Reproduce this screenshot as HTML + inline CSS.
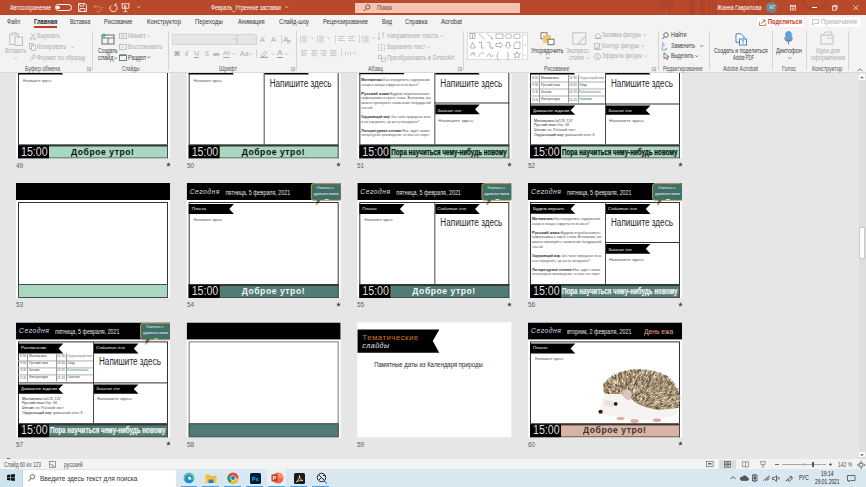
<!DOCTYPE html><html><head><meta charset="utf-8"><style>
*{margin:0;padding:0;box-sizing:border-box}
html,body{width:866px;height:487px;overflow:hidden;background:#e6e6e6;font-family:"Liberation Sans",sans-serif}
.t{position:absolute;white-space:nowrap}
.r{position:absolute}
svg{position:absolute;overflow:visible}
.s{position:absolute;width:154px;height:115px;background:#fff;overflow:hidden}
</style></head><body>
<div class="s" style="left:0;top:0;transform:translate(16px,43.5px)">
<div class="r" style="left:0px;top:0px;width:154px;height:17px;background:#000"></div>
<div class="t" style="left:3.40px;top:4.98px;font-size:7.2px;line-height:8.64px;color:#d4dbe0;font-weight:normal;font-style:italic;transform:scaleX(0.948);transform-origin:0 50%;letter-spacing:0.5px">Сегодня</div>
<div class="t" style="left:39.30px;top:4.64px;font-size:7.6px;line-height:9.12px;color:#e6e6e6;font-weight:normal;transform:scaleX(0.702);transform-origin:0 50%;">пятница,  5 февраля, 2021</div>
<svg style="left:123.5px;top:0px;" width="31" height="24" viewBox="0 0 31 24"><path d="M3 0.6h25.5a2.4 2.4 0 0 1 2.4 2.4v12a2.4 2.4 0 0 1-2.4 2.4h-18.5l-4.5 4.8l0.6-4.8h-3.1a2.4 2.4 0 0 1-2.4-2.4v-12a2.4 2.4 0 0 1 2.4-2.4z" fill="#3f6f67" stroke="#d6a75e" stroke-width="0.9"/></svg>
<div class="t" style="left:130.00px;top:3.88px;font-size:3.2px;line-height:3.84px;color:#f2f6f4;font-weight:normal;transform:scaleX(1.245);transform-origin:0 50%;">Учитесь с</div>
<div class="t" style="left:126.50px;top:9.58px;font-size:3.2px;line-height:3.84px;color:#f2f6f4;font-weight:normal;transform:scaleX(1.107);transform-origin:0 50%;">удовольствием</div>
<div class="r" style="left:138px;top:15.6px;width:4px;height:0.8px;background:#cfd8d4"></div>
<div class="r" style="left:2px;top:19px;width:150px;height:83px;border:1px solid #333"></div>
<svg style="left:2.3px;top:20.8px;" width="45.3" height="10.1" viewBox="0 0 45.3 10.1"><path d="M0 0H45.3L40.599999999999994 5.05L45.3 10.1H0z" fill="#000"/></svg>
<div class="t" style="left:4.50px;top:23.27px;font-size:4.3px;line-height:5.16px;color:#f6f6f6;font-weight:normal;transform:scaleX(1.063);transform-origin:0 50%;">Планы</div>
<div class="t" style="left:6.50px;top:35.18px;font-size:3.7px;line-height:4.44px;color:#555;font-weight:normal;transform:scaleX(1.011);transform-origin:0 50%;">Напишите здесь</div>
<div class="r" style="left:2px;top:100.5px;width:150px;height:14.5px;background:#a8d8bf;border:1px solid #4a4a4a;border-top:2px solid #383838"></div>
<div class="r" style="left:2px;top:102px;width:30.8px;height:13px;background:#000"></div>
<div class="t" style="left:4.60px;top:101.42px;font-size:12.3px;line-height:14.76px;color:#dedede;font-weight:normal;transform:scaleX(0.864);transform-origin:0 50%;">15:00</div>
<div class="t" style="left:54.60px;top:102.02px;font-size:9.8px;line-height:11.76px;color:#111;font-weight:bold;transform:scaleX(0.880);transform-origin:0 50%;letter-spacing:0.6px">Доброе утро!</div>
</div>
<div class="s" style="left:0;top:0;transform:translate(186.67px,43.5px)">
<div class="r" style="left:0px;top:0px;width:154px;height:17px;background:#000"></div>
<div class="t" style="left:3.40px;top:4.98px;font-size:7.2px;line-height:8.64px;color:#d4dbe0;font-weight:normal;font-style:italic;transform:scaleX(0.948);transform-origin:0 50%;letter-spacing:0.5px">Сегодня</div>
<div class="t" style="left:39.30px;top:4.64px;font-size:7.6px;line-height:9.12px;color:#e6e6e6;font-weight:normal;transform:scaleX(0.702);transform-origin:0 50%;">пятница,  5 февраля, 2021</div>
<svg style="left:123.5px;top:0px;" width="31" height="24" viewBox="0 0 31 24"><path d="M3 0.6h25.5a2.4 2.4 0 0 1 2.4 2.4v12a2.4 2.4 0 0 1-2.4 2.4h-18.5l-4.5 4.8l0.6-4.8h-3.1a2.4 2.4 0 0 1-2.4-2.4v-12a2.4 2.4 0 0 1 2.4-2.4z" fill="#3f6f67" stroke="#d6a75e" stroke-width="0.9"/></svg>
<div class="t" style="left:130.00px;top:3.88px;font-size:3.2px;line-height:3.84px;color:#f2f6f4;font-weight:normal;transform:scaleX(1.245);transform-origin:0 50%;">Учитесь с</div>
<div class="t" style="left:126.50px;top:9.58px;font-size:3.2px;line-height:3.84px;color:#f2f6f4;font-weight:normal;transform:scaleX(1.107);transform-origin:0 50%;">удовольствием</div>
<div class="r" style="left:138px;top:15.6px;width:4px;height:0.8px;background:#cfd8d4"></div>
<div class="r" style="left:2px;top:19px;width:150px;height:83px;border:1px solid #333"></div>
<div class="r" style="left:76.7px;top:19px;width:1.3px;height:82px;background:#4a4a4a"></div>
<svg style="left:2.3px;top:20.8px;" width="45.3" height="10.1" viewBox="0 0 45.3 10.1"><path d="M0 0H45.3L40.599999999999994 5.05L45.3 10.1H0z" fill="#000"/></svg>
<div class="t" style="left:4.50px;top:23.27px;font-size:4.3px;line-height:5.16px;color:#f6f6f6;font-weight:normal;transform:scaleX(1.063);transform-origin:0 50%;">Планы</div>
<div class="t" style="left:6.50px;top:35.18px;font-size:3.7px;line-height:4.44px;color:#555;font-weight:normal;transform:scaleX(1.011);transform-origin:0 50%;">Напишите здесь</div>
<svg style="left:77.5px;top:20.8px;" width="44.5" height="10.1" viewBox="0 0 44.5 10.1"><path d="M0 0H44.5L39.8 5.05L44.5 10.1H0z" fill="#000"/></svg>
<div class="t" style="left:79.70px;top:23.27px;font-size:4.3px;line-height:5.16px;color:#f6f6f6;font-weight:normal;font-style:italic;transform:scaleX(1.044);transform-origin:0 50%;">События дня</div>
<div class="t" style="left:83.40px;top:33.70px;font-size:10px;line-height:12.00px;color:#2a2a2a;font-weight:normal;transform:scaleX(0.813);transform-origin:0 50%;">Напишите здесь</div>
<div class="r" style="left:2px;top:100.5px;width:150px;height:14.5px;background:#a8d8bf;border:1px solid #4a4a4a;border-top:2px solid #383838"></div>
<div class="r" style="left:2px;top:102px;width:30.8px;height:13px;background:#000"></div>
<div class="t" style="left:4.60px;top:101.42px;font-size:12.3px;line-height:14.76px;color:#dedede;font-weight:normal;transform:scaleX(0.864);transform-origin:0 50%;">15:00</div>
<div class="t" style="left:54.60px;top:102.02px;font-size:9.8px;line-height:11.76px;color:#111;font-weight:bold;transform:scaleX(0.880);transform-origin:0 50%;letter-spacing:0.6px">Доброе утро!</div>
</div>
<div class="s" style="left:0;top:0;transform:translate(357.33px,43.5px)">
<div class="r" style="left:0px;top:0px;width:154px;height:17px;background:#000"></div>
<div class="t" style="left:3.40px;top:4.98px;font-size:7.2px;line-height:8.64px;color:#d4dbe0;font-weight:normal;font-style:italic;transform:scaleX(0.948);transform-origin:0 50%;letter-spacing:0.5px">Сегодня</div>
<div class="t" style="left:39.30px;top:4.64px;font-size:7.6px;line-height:9.12px;color:#e6e6e6;font-weight:normal;transform:scaleX(0.702);transform-origin:0 50%;">пятница,  5 февраля, 2021</div>
<svg style="left:123.5px;top:0px;" width="31" height="24" viewBox="0 0 31 24"><path d="M3 0.6h25.5a2.4 2.4 0 0 1 2.4 2.4v12a2.4 2.4 0 0 1-2.4 2.4h-18.5l-4.5 4.8l0.6-4.8h-3.1a2.4 2.4 0 0 1-2.4-2.4v-12a2.4 2.4 0 0 1 2.4-2.4z" fill="#3f6f67" stroke="#d6a75e" stroke-width="0.9"/></svg>
<div class="t" style="left:130.00px;top:3.88px;font-size:3.2px;line-height:3.84px;color:#f2f6f4;font-weight:normal;transform:scaleX(1.245);transform-origin:0 50%;">Учитесь с</div>
<div class="t" style="left:126.50px;top:9.58px;font-size:3.2px;line-height:3.84px;color:#f2f6f4;font-weight:normal;transform:scaleX(1.107);transform-origin:0 50%;">удовольствием</div>
<div class="r" style="left:138px;top:15.6px;width:4px;height:0.8px;background:#cfd8d4"></div>
<div class="r" style="left:2px;top:19px;width:150px;height:83px;border:1px solid #333"></div>
<div class="r" style="left:76.7px;top:19px;width:1.3px;height:82px;background:#4a4a4a"></div>
<svg style="left:2.3px;top:21px;" width="45.3" height="9.8" viewBox="0 0 45.3 9.8"><path d="M0 0H45.3L40.599999999999994 4.9L45.3 9.8H0z" fill="#000"/></svg>
<div class="t" style="left:4.50px;top:23.32px;font-size:4.3px;line-height:5.16px;color:#f6f6f6;font-weight:normal;transform:scaleX(1.086);transform-origin:0 50%;">Будем изучать</div>
<div class="t" style="left:4.00px;top:34.30px;font-size:3.5px;line-height:4.20px;color:#2a2a2a;font-weight:bold;transform:scaleX(1.008);transform-origin:0 50%;">Математика:</div>
<div class="t" style="left:25.91px;top:34.30px;font-size:3.5px;line-height:4.20px;color:#555;font-weight:normal;transform:scaleX(1.008);transform-origin:0 50%;"> Как определить содержание</div>
<div class="t" style="left:4.00px;top:38.70px;font-size:3.5px;line-height:4.20px;color:#555;font-weight:normal;transform:scaleX(0.861);transform-origin:0 50%;">сахара в овощах и фруктах по их массе?</div>
<div class="t" style="left:4.00px;top:48.20px;font-size:3.5px;line-height:4.20px;color:#2a2a2a;font-weight:bold;transform:scaleX(1.169);transform-origin:0 50%;">Русский язык:</div>
<div class="t" style="left:32.98px;top:48.20px;font-size:3.5px;line-height:4.20px;color:#555;font-weight:normal;transform:scaleX(1.169);transform-origin:0 50%;"> Будем отрабатывать</div>
<div class="t" style="left:4.00px;top:52.40px;font-size:3.5px;line-height:4.20px;color:#555;font-weight:normal;transform:scaleX(0.985);transform-origin:0 50%;">орфограммы в корне слова. Вспомним, как</div>
<div class="t" style="left:4.00px;top:57.30px;font-size:3.5px;line-height:4.20px;color:#555;font-weight:normal;transform:scaleX(1.045);transform-origin:0 50%;">можно проверить написание безударной</div>
<div class="t" style="left:4.00px;top:61.50px;font-size:3.5px;line-height:4.20px;color:#555;font-weight:normal;transform:scaleX(0.837);transform-origin:0 50%;">гласной.</div>
<div class="t" style="left:4.00px;top:71.30px;font-size:3.5px;line-height:4.20px;color:#2a2a2a;font-weight:bold;transform:scaleX(0.901);transform-origin:0 50%;">Окружающий мир: </div>
<div class="t" style="left:33.98px;top:71.30px;font-size:3.5px;line-height:4.20px;color:#555;font-weight:normal;transform:scaleX(0.901);transform-origin:0 50%;">Что такое природные зоны</div>
<div class="t" style="left:4.00px;top:75.50px;font-size:3.5px;line-height:4.20px;color:#555;font-weight:normal;transform:scaleX(0.851);transform-origin:0 50%;">и как определить, где растут мандарины?</div>
<div class="t" style="left:4.00px;top:84.60px;font-size:3.5px;line-height:4.20px;color:#2a2a2a;font-weight:bold;transform:scaleX(1.066);transform-origin:0 50%;">Литературное чтение:</div>
<div class="t" style="left:44.97px;top:84.60px;font-size:3.5px;line-height:4.20px;color:#555;font-weight:normal;transform:scaleX(1.066);transform-origin:0 50%;"> Нас ждёт новое</div>
<div class="t" style="left:4.00px;top:89.40px;font-size:3.5px;line-height:4.20px;color:#555;font-weight:normal;transform:scaleX(0.863);transform-origin:0 50%;">литературное произведение, но пока это секрет.</div>
<svg style="left:77.5px;top:20.8px;" width="44.5" height="10.1" viewBox="0 0 44.5 10.1"><path d="M0 0H44.5L39.8 5.05L44.5 10.1H0z" fill="#000"/></svg>
<div class="t" style="left:79.70px;top:23.27px;font-size:4.3px;line-height:5.16px;color:#f6f6f6;font-weight:normal;font-style:italic;transform:scaleX(1.044);transform-origin:0 50%;">События дня</div>
<div class="t" style="left:83.40px;top:33.70px;font-size:10px;line-height:12.00px;color:#2a2a2a;font-weight:normal;transform:scaleX(0.813);transform-origin:0 50%;">Напишите здесь</div>
<div class="r" style="left:77px;top:59.3px;width:75px;height:1.2px;background:#333"></div>
<svg style="left:77.5px;top:61.3px;" width="44.5" height="9.7" viewBox="0 0 44.5 9.7"><path d="M0 0H44.5L39.8 4.85L44.5 9.7H0z" fill="#000"/></svg>
<div class="t" style="left:79.70px;top:63.57px;font-size:4.3px;line-height:5.16px;color:#f6f6f6;font-weight:normal;font-style:italic;transform:scaleX(0.945);transform-origin:0 50%;">Задание дня</div>
<div class="t" style="left:80.80px;top:75.18px;font-size:3.7px;line-height:4.44px;color:#555;font-weight:normal;transform:scaleX(1.245);transform-origin:0 50%;">Напишите здесь</div>
<div class="r" style="left:2px;top:100.5px;width:150px;height:14.5px;background:#a8d8bf;border:1px solid #4a4a4a;border-top:2px solid #383838"></div>
<div class="r" style="left:2px;top:102px;width:30.8px;height:13px;background:#000"></div>
<div class="t" style="left:4.60px;top:101.42px;font-size:12.3px;line-height:14.76px;color:#dedede;font-weight:normal;transform:scaleX(0.864);transform-origin:0 50%;">15:00</div>
<div class="t" style="left:34.20px;top:102.92px;font-size:8.8px;line-height:10.56px;color:#111;font-weight:bold;transform:scaleX(0.708);transform-origin:0 50%;-webkit-text-stroke:0.25px #111">Пора научиться чему-нибудь новому</div>
</div>
<div class="s" style="left:0;top:0;transform:translate(528px,43.5px)">
<div class="r" style="left:0px;top:0px;width:154px;height:17px;background:#000"></div>
<div class="t" style="left:3.40px;top:4.98px;font-size:7.2px;line-height:8.64px;color:#d4dbe0;font-weight:normal;font-style:italic;transform:scaleX(0.948);transform-origin:0 50%;letter-spacing:0.5px">Сегодня</div>
<div class="t" style="left:39.30px;top:4.64px;font-size:7.6px;line-height:9.12px;color:#e6e6e6;font-weight:normal;transform:scaleX(0.702);transform-origin:0 50%;">пятница,  5 февраля, 2021</div>
<svg style="left:123.5px;top:0px;" width="31" height="24" viewBox="0 0 31 24"><path d="M3 0.6h25.5a2.4 2.4 0 0 1 2.4 2.4v12a2.4 2.4 0 0 1-2.4 2.4h-18.5l-4.5 4.8l0.6-4.8h-3.1a2.4 2.4 0 0 1-2.4-2.4v-12a2.4 2.4 0 0 1 2.4-2.4z" fill="#3f6f67" stroke="#d6a75e" stroke-width="0.9"/></svg>
<div class="t" style="left:130.00px;top:3.88px;font-size:3.2px;line-height:3.84px;color:#f2f6f4;font-weight:normal;transform:scaleX(1.245);transform-origin:0 50%;">Учитесь с</div>
<div class="t" style="left:126.50px;top:9.58px;font-size:3.2px;line-height:3.84px;color:#f2f6f4;font-weight:normal;transform:scaleX(1.107);transform-origin:0 50%;">удовольствием</div>
<div class="r" style="left:138px;top:15.6px;width:4px;height:0.8px;background:#cfd8d4"></div>
<div class="r" style="left:2px;top:19px;width:150px;height:83px;border:1px solid #333"></div>
<div class="r" style="left:76.7px;top:19px;width:1.3px;height:82px;background:#4a4a4a"></div>
<svg style="left:2.3px;top:21px;" width="45.3" height="10" viewBox="0 0 45.3 10"><path d="M0 0H45.3L40.599999999999994 5.0L45.3 10H0z" fill="#000"/></svg>
<div class="t" style="left:4.50px;top:23.42px;font-size:4.3px;line-height:5.16px;color:#f6f6f6;font-weight:normal;transform:scaleX(1.067);transform-origin:0 50%;">Расписание</div>
<div class="t" style="left:3.60px;top:32.98px;font-size:3.2px;line-height:3.84px;color:#555;font-weight:normal;transform:scaleX(0.996);transform-origin:0 50%;">8:30</div>
<div class="t" style="left:13.00px;top:32.92px;font-size:3.3px;line-height:3.96px;color:#333;font-weight:normal;transform:scaleX(0.950);transform-origin:0 50%;">Математика</div>
<div class="t" style="left:40.60px;top:32.98px;font-size:3.2px;line-height:3.84px;color:#555;font-weight:normal;transform:scaleX(0.999);transform-origin:0 50%;">12:30</div>
<div class="t" style="left:50.80px;top:32.92px;font-size:3.3px;line-height:3.96px;color:#777;font-weight:normal;transform:scaleX(0.916);transform-origin:0 50%;">Окружающий мир</div>
<div class="t" style="left:3.60px;top:40.08px;font-size:3.2px;line-height:3.84px;color:#555;font-weight:normal;transform:scaleX(0.996);transform-origin:0 50%;">9:30</div>
<div class="t" style="left:13.00px;top:40.02px;font-size:3.3px;line-height:3.96px;color:#333;font-weight:normal;transform:scaleX(0.950);transform-origin:0 50%;">Русский язык</div>
<div class="t" style="left:40.60px;top:40.08px;font-size:3.2px;line-height:3.84px;color:#555;font-weight:normal;transform:scaleX(0.999);transform-origin:0 50%;">13:45</div>
<div class="t" style="left:50.80px;top:40.02px;font-size:3.3px;line-height:3.96px;color:#333;font-weight:normal;transform:scaleX(0.950);transform-origin:0 50%;">Обед</div>
<div class="t" style="left:3.60px;top:47.33px;font-size:3.2px;line-height:3.84px;color:#555;font-weight:normal;transform:scaleX(0.774);transform-origin:0 50%;">10:30</div>
<div class="t" style="left:13.00px;top:47.27px;font-size:3.3px;line-height:3.96px;color:#333;font-weight:normal;transform:scaleX(0.950);transform-origin:0 50%;">Чтение</div>
<div class="t" style="left:40.60px;top:47.33px;font-size:3.2px;line-height:3.84px;color:#555;font-weight:normal;transform:scaleX(0.999);transform-origin:0 50%;">14:15</div>
<div class="t" style="left:50.80px;top:47.27px;font-size:3.3px;line-height:3.96px;color:#3d8a55;font-weight:normal;transform:scaleX(0.950);transform-origin:0 50%;">Робототехника</div>
<div class="t" style="left:3.60px;top:54.53px;font-size:3.2px;line-height:3.84px;color:#555;font-weight:normal;transform:scaleX(0.798);transform-origin:0 50%;">11:30</div>
<div class="t" style="left:13.00px;top:54.47px;font-size:3.3px;line-height:3.96px;color:#333;font-weight:normal;transform:scaleX(0.950);transform-origin:0 50%;">Физ.культура</div>
<div class="t" style="left:40.60px;top:54.53px;font-size:3.2px;line-height:3.84px;color:#555;font-weight:normal;transform:scaleX(0.999);transform-origin:0 50%;">15:15</div>
<div class="t" style="left:50.80px;top:54.47px;font-size:3.3px;line-height:3.96px;color:#2f6e4f;font-weight:normal;transform:scaleX(0.950);transform-origin:0 50%;">Оригами</div>
<div class="r" style="left:2px;top:37.8px;width:74.7px;height:0.6px;background:#b0b0b0"></div>
<div class="r" style="left:2px;top:45.0px;width:74.7px;height:0.6px;background:#b0b0b0"></div>
<div class="r" style="left:2px;top:52.3px;width:74.7px;height:0.6px;background:#b0b0b0"></div>
<div class="r" style="left:11.3px;top:30.8px;width:0.6px;height:28.6px;background:#9a9a9a"></div>
<div class="r" style="left:39.7px;top:30.8px;width:0.6px;height:28.6px;background:#9a9a9a"></div>
<div class="r" style="left:49.5px;top:30.8px;width:0.6px;height:28.6px;background:#9a9a9a"></div>
<div class="r" style="left:2px;top:59.5px;width:150px;height:1.2px;background:#333"></div>
<svg style="left:2.3px;top:62.3px;" width="45.3" height="9.3" viewBox="0 0 45.3 9.3"><path d="M0 0H45.3L40.599999999999994 4.65L45.3 9.3H0z" fill="#000"/></svg>
<div class="t" style="left:4.50px;top:64.37px;font-size:4.3px;line-height:5.16px;color:#f6f6f6;font-weight:normal;transform:scaleX(0.940);transform-origin:0 50%;">Домашнее задание</div>
<div class="t" style="left:6.00px;top:74.84px;font-size:3.6px;line-height:4.32px;color:#222;font-weight:normal;transform:scaleX(0.981);transform-origin:0 50%;">Математика:</div>
<div class="t" style="left:26.88px;top:74.84px;font-size:3.6px;line-height:4.32px;color:#555;font-weight:normal;transform:scaleX(0.981);transform-origin:0 50%;"> №128, 132</div>
<div class="t" style="left:6.00px;top:79.49px;font-size:3.6px;line-height:4.32px;color:#222;font-weight:normal;transform:scaleX(0.986);transform-origin:0 50%;">Русский язык:</div>
<div class="t" style="left:28.80px;top:79.49px;font-size:3.6px;line-height:4.32px;color:#555;font-weight:normal;transform:scaleX(0.986);transform-origin:0 50%;"> Упр. 68</div>
<div class="t" style="left:6.00px;top:84.14px;font-size:3.6px;line-height:4.32px;color:#222;font-weight:normal;transform:scaleX(0.988);transform-origin:0 50%;">Чтение:</div>
<div class="t" style="left:18.86px;top:84.14px;font-size:3.6px;line-height:4.32px;color:#555;font-weight:normal;transform:scaleX(0.988);transform-origin:0 50%;"> см. Рабочий лист</div>
<div class="t" style="left:6.00px;top:88.79px;font-size:3.6px;line-height:4.32px;color:#222;font-weight:normal;transform:scaleX(0.993);transform-origin:0 50%;">Окружающий мир:</div>
<div class="t" style="left:36.55px;top:88.79px;font-size:3.6px;line-height:4.32px;color:#555;font-weight:normal;transform:scaleX(0.993);transform-origin:0 50%;"> домашний опыт 8</div>
<svg style="left:77.5px;top:20.8px;" width="44.5" height="10.1" viewBox="0 0 44.5 10.1"><path d="M0 0H44.5L39.8 5.05L44.5 10.1H0z" fill="#000"/></svg>
<div class="t" style="left:79.70px;top:23.27px;font-size:4.3px;line-height:5.16px;color:#f6f6f6;font-weight:normal;font-style:italic;transform:scaleX(1.044);transform-origin:0 50%;">События дня</div>
<div class="t" style="left:83.40px;top:33.70px;font-size:10px;line-height:12.00px;color:#2a2a2a;font-weight:normal;transform:scaleX(0.813);transform-origin:0 50%;">Напишите здесь</div>
<svg style="left:77.5px;top:62.3px;" width="44.5" height="9.3" viewBox="0 0 44.5 9.3"><path d="M0 0H44.5L39.8 4.65L44.5 9.3H0z" fill="#000"/></svg>
<div class="t" style="left:79.70px;top:64.37px;font-size:4.3px;line-height:5.16px;color:#f6f6f6;font-weight:normal;font-style:italic;transform:scaleX(0.945);transform-origin:0 50%;">Задание дня</div>
<div class="t" style="left:80.80px;top:75.18px;font-size:3.7px;line-height:4.44px;color:#555;font-weight:normal;transform:scaleX(1.245);transform-origin:0 50%;">Напишите здесь</div>
<div class="r" style="left:2px;top:100.5px;width:150px;height:14.5px;background:#a8d8bf;border:1px solid #4a4a4a;border-top:2px solid #383838"></div>
<div class="r" style="left:2px;top:102px;width:30.8px;height:13px;background:#000"></div>
<div class="t" style="left:4.60px;top:101.42px;font-size:12.3px;line-height:14.76px;color:#dedede;font-weight:normal;transform:scaleX(0.864);transform-origin:0 50%;">15:00</div>
<div class="t" style="left:34.20px;top:102.92px;font-size:8.8px;line-height:10.56px;color:#111;font-weight:bold;transform:scaleX(0.708);transform-origin:0 50%;-webkit-text-stroke:0.25px #111">Пора научиться чему-нибудь новому</div>
</div>
<div class="s" style="left:0;top:0;transform:translate(16px,183px)">
<div class="r" style="left:0px;top:0px;width:154px;height:17px;background:#000"></div>
<div class="r" style="left:2px;top:19px;width:150px;height:83px;border:1px solid #333"></div>
<div class="r" style="left:2px;top:101px;width:150px;height:14px;background:#a8d8bf;border:1px solid #4a4a4a"></div>
</div>
<div class="s" style="left:0;top:0;transform:translate(186.67px,183px)">
<div class="r" style="left:0px;top:0px;width:154px;height:17px;background:#000"></div>
<div class="t" style="left:3.40px;top:4.98px;font-size:7.2px;line-height:8.64px;color:#d4dbe0;font-weight:normal;font-style:italic;transform:scaleX(0.948);transform-origin:0 50%;letter-spacing:0.5px">Сегодня</div>
<div class="t" style="left:39.30px;top:4.64px;font-size:7.6px;line-height:9.12px;color:#e6e6e6;font-weight:normal;transform:scaleX(0.702);transform-origin:0 50%;">пятница,  5 февраля, 2021</div>
<svg style="left:123.5px;top:0px;" width="31" height="24" viewBox="0 0 31 24"><path d="M3 0.6h25.5a2.4 2.4 0 0 1 2.4 2.4v12a2.4 2.4 0 0 1-2.4 2.4h-18.5l-4.5 4.8l0.6-4.8h-3.1a2.4 2.4 0 0 1-2.4-2.4v-12a2.4 2.4 0 0 1 2.4-2.4z" fill="#3f6f67" stroke="#d6a75e" stroke-width="0.9"/></svg>
<div class="t" style="left:130.00px;top:3.88px;font-size:3.2px;line-height:3.84px;color:#f2f6f4;font-weight:normal;transform:scaleX(1.245);transform-origin:0 50%;">Учитесь с</div>
<div class="t" style="left:126.50px;top:9.58px;font-size:3.2px;line-height:3.84px;color:#f2f6f4;font-weight:normal;transform:scaleX(1.107);transform-origin:0 50%;">удовольствием</div>
<div class="r" style="left:138px;top:15.6px;width:4px;height:0.8px;background:#cfd8d4"></div>
<div class="r" style="left:2px;top:19px;width:150px;height:83px;border:1px solid #333"></div>
<svg style="left:2.3px;top:20.8px;" width="45.3" height="10.1" viewBox="0 0 45.3 10.1"><path d="M0 0H45.3L40.599999999999994 5.05L45.3 10.1H0z" fill="#000"/></svg>
<div class="t" style="left:4.50px;top:23.27px;font-size:4.3px;line-height:5.16px;color:#f6f6f6;font-weight:normal;transform:scaleX(1.063);transform-origin:0 50%;">Планы</div>
<div class="t" style="left:6.50px;top:35.18px;font-size:3.7px;line-height:4.44px;color:#555;font-weight:normal;transform:scaleX(1.011);transform-origin:0 50%;">Напишите здесь</div>
<div class="r" style="left:2px;top:100.5px;width:150px;height:14.5px;background:#4f7d76;border:1px solid #4a4a4a;border-top:2px solid #383838"></div>
<div class="r" style="left:2px;top:102px;width:30.8px;height:13px;background:#000"></div>
<div class="t" style="left:4.60px;top:101.42px;font-size:12.3px;line-height:14.76px;color:#dedede;font-weight:normal;transform:scaleX(0.864);transform-origin:0 50%;">15:00</div>
<div class="t" style="left:54.60px;top:102.02px;font-size:9.8px;line-height:11.76px;color:#f4f4f4;font-weight:bold;transform:scaleX(0.880);transform-origin:0 50%;letter-spacing:0.6px">Доброе утро!</div>
</div>
<div class="s" style="left:0;top:0;transform:translate(357.33px,183px)">
<div class="r" style="left:0px;top:0px;width:154px;height:17px;background:#000"></div>
<div class="t" style="left:3.40px;top:4.98px;font-size:7.2px;line-height:8.64px;color:#d4dbe0;font-weight:normal;font-style:italic;transform:scaleX(0.948);transform-origin:0 50%;letter-spacing:0.5px">Сегодня</div>
<div class="t" style="left:39.30px;top:4.64px;font-size:7.6px;line-height:9.12px;color:#e6e6e6;font-weight:normal;transform:scaleX(0.702);transform-origin:0 50%;">пятница,  5 февраля, 2021</div>
<svg style="left:123.5px;top:0px;" width="31" height="24" viewBox="0 0 31 24"><path d="M3 0.6h25.5a2.4 2.4 0 0 1 2.4 2.4v12a2.4 2.4 0 0 1-2.4 2.4h-18.5l-4.5 4.8l0.6-4.8h-3.1a2.4 2.4 0 0 1-2.4-2.4v-12a2.4 2.4 0 0 1 2.4-2.4z" fill="#3f6f67" stroke="#d6a75e" stroke-width="0.9"/></svg>
<div class="t" style="left:130.00px;top:3.88px;font-size:3.2px;line-height:3.84px;color:#f2f6f4;font-weight:normal;transform:scaleX(1.245);transform-origin:0 50%;">Учитесь с</div>
<div class="t" style="left:126.50px;top:9.58px;font-size:3.2px;line-height:3.84px;color:#f2f6f4;font-weight:normal;transform:scaleX(1.107);transform-origin:0 50%;">удовольствием</div>
<div class="r" style="left:138px;top:15.6px;width:4px;height:0.8px;background:#cfd8d4"></div>
<div class="r" style="left:2px;top:19px;width:150px;height:83px;border:1px solid #333"></div>
<div class="r" style="left:76.7px;top:19px;width:1.3px;height:82px;background:#4a4a4a"></div>
<svg style="left:2.3px;top:20.8px;" width="45.3" height="10.1" viewBox="0 0 45.3 10.1"><path d="M0 0H45.3L40.599999999999994 5.05L45.3 10.1H0z" fill="#000"/></svg>
<div class="t" style="left:4.50px;top:23.27px;font-size:4.3px;line-height:5.16px;color:#f6f6f6;font-weight:normal;transform:scaleX(1.063);transform-origin:0 50%;">Планы</div>
<div class="t" style="left:6.50px;top:35.18px;font-size:3.7px;line-height:4.44px;color:#555;font-weight:normal;transform:scaleX(1.011);transform-origin:0 50%;">Напишите здесь</div>
<svg style="left:77.5px;top:20.8px;" width="44.5" height="10.1" viewBox="0 0 44.5 10.1"><path d="M0 0H44.5L39.8 5.05L44.5 10.1H0z" fill="#000"/></svg>
<div class="t" style="left:79.70px;top:23.27px;font-size:4.3px;line-height:5.16px;color:#f6f6f6;font-weight:normal;font-style:italic;transform:scaleX(1.044);transform-origin:0 50%;">События дня</div>
<div class="t" style="left:83.40px;top:33.70px;font-size:10px;line-height:12.00px;color:#2a2a2a;font-weight:normal;transform:scaleX(0.813);transform-origin:0 50%;">Напишите здесь</div>
<div class="r" style="left:2px;top:100.5px;width:150px;height:14.5px;background:#4f7d76;border:1px solid #4a4a4a;border-top:2px solid #383838"></div>
<div class="r" style="left:2px;top:102px;width:30.8px;height:13px;background:#000"></div>
<div class="t" style="left:4.60px;top:101.42px;font-size:12.3px;line-height:14.76px;color:#dedede;font-weight:normal;transform:scaleX(0.864);transform-origin:0 50%;">15:00</div>
<div class="t" style="left:54.60px;top:102.02px;font-size:9.8px;line-height:11.76px;color:#f4f4f4;font-weight:bold;transform:scaleX(0.880);transform-origin:0 50%;letter-spacing:0.6px">Доброе утро!</div>
</div>
<div class="s" style="left:0;top:0;transform:translate(528px,183px)">
<div class="r" style="left:0px;top:0px;width:154px;height:17px;background:#000"></div>
<div class="t" style="left:3.40px;top:4.98px;font-size:7.2px;line-height:8.64px;color:#d4dbe0;font-weight:normal;font-style:italic;transform:scaleX(0.948);transform-origin:0 50%;letter-spacing:0.5px">Сегодня</div>
<div class="t" style="left:39.30px;top:4.64px;font-size:7.6px;line-height:9.12px;color:#e6e6e6;font-weight:normal;transform:scaleX(0.702);transform-origin:0 50%;">пятница,  5 февраля, 2021</div>
<svg style="left:123.5px;top:0px;" width="31" height="24" viewBox="0 0 31 24"><path d="M3 0.6h25.5a2.4 2.4 0 0 1 2.4 2.4v12a2.4 2.4 0 0 1-2.4 2.4h-18.5l-4.5 4.8l0.6-4.8h-3.1a2.4 2.4 0 0 1-2.4-2.4v-12a2.4 2.4 0 0 1 2.4-2.4z" fill="#3f6f67" stroke="#d6a75e" stroke-width="0.9"/></svg>
<div class="t" style="left:130.00px;top:3.88px;font-size:3.2px;line-height:3.84px;color:#f2f6f4;font-weight:normal;transform:scaleX(1.245);transform-origin:0 50%;">Учитесь с</div>
<div class="t" style="left:126.50px;top:9.58px;font-size:3.2px;line-height:3.84px;color:#f2f6f4;font-weight:normal;transform:scaleX(1.107);transform-origin:0 50%;">удовольствием</div>
<div class="r" style="left:138px;top:15.6px;width:4px;height:0.8px;background:#cfd8d4"></div>
<div class="r" style="left:2px;top:19px;width:150px;height:83px;border:1px solid #333"></div>
<div class="r" style="left:76.7px;top:19px;width:1.3px;height:82px;background:#4a4a4a"></div>
<svg style="left:2.3px;top:21px;" width="45.3" height="9.8" viewBox="0 0 45.3 9.8"><path d="M0 0H45.3L40.599999999999994 4.9L45.3 9.8H0z" fill="#000"/></svg>
<div class="t" style="left:4.50px;top:23.32px;font-size:4.3px;line-height:5.16px;color:#f6f6f6;font-weight:normal;transform:scaleX(1.086);transform-origin:0 50%;">Будем изучать</div>
<div class="t" style="left:4.00px;top:34.30px;font-size:3.5px;line-height:4.20px;color:#2a2a2a;font-weight:bold;transform:scaleX(1.008);transform-origin:0 50%;">Математика:</div>
<div class="t" style="left:25.91px;top:34.30px;font-size:3.5px;line-height:4.20px;color:#555;font-weight:normal;transform:scaleX(1.008);transform-origin:0 50%;"> Как определить содержание</div>
<div class="t" style="left:4.00px;top:38.70px;font-size:3.5px;line-height:4.20px;color:#555;font-weight:normal;transform:scaleX(0.861);transform-origin:0 50%;">сахара в овощах и фруктах по их массе?</div>
<div class="t" style="left:4.00px;top:48.20px;font-size:3.5px;line-height:4.20px;color:#2a2a2a;font-weight:bold;transform:scaleX(1.169);transform-origin:0 50%;">Русский язык:</div>
<div class="t" style="left:32.98px;top:48.20px;font-size:3.5px;line-height:4.20px;color:#555;font-weight:normal;transform:scaleX(1.169);transform-origin:0 50%;"> Будем отрабатывать</div>
<div class="t" style="left:4.00px;top:52.40px;font-size:3.5px;line-height:4.20px;color:#555;font-weight:normal;transform:scaleX(0.985);transform-origin:0 50%;">орфограммы в корне слова. Вспомним, как</div>
<div class="t" style="left:4.00px;top:57.30px;font-size:3.5px;line-height:4.20px;color:#555;font-weight:normal;transform:scaleX(1.045);transform-origin:0 50%;">можно проверить написание безударной</div>
<div class="t" style="left:4.00px;top:61.50px;font-size:3.5px;line-height:4.20px;color:#555;font-weight:normal;transform:scaleX(0.837);transform-origin:0 50%;">гласной.</div>
<div class="t" style="left:4.00px;top:71.30px;font-size:3.5px;line-height:4.20px;color:#2a2a2a;font-weight:bold;transform:scaleX(0.901);transform-origin:0 50%;">Окружающий мир: </div>
<div class="t" style="left:33.98px;top:71.30px;font-size:3.5px;line-height:4.20px;color:#555;font-weight:normal;transform:scaleX(0.901);transform-origin:0 50%;">Что такое природные зоны</div>
<div class="t" style="left:4.00px;top:75.50px;font-size:3.5px;line-height:4.20px;color:#555;font-weight:normal;transform:scaleX(0.851);transform-origin:0 50%;">и как определить, где растут мандарины?</div>
<div class="t" style="left:4.00px;top:84.60px;font-size:3.5px;line-height:4.20px;color:#2a2a2a;font-weight:bold;transform:scaleX(1.066);transform-origin:0 50%;">Литературное чтение:</div>
<div class="t" style="left:44.97px;top:84.60px;font-size:3.5px;line-height:4.20px;color:#555;font-weight:normal;transform:scaleX(1.066);transform-origin:0 50%;"> Нас ждёт новое</div>
<div class="t" style="left:4.00px;top:89.40px;font-size:3.5px;line-height:4.20px;color:#555;font-weight:normal;transform:scaleX(0.863);transform-origin:0 50%;">литературное произведение, но пока это секрет.</div>
<svg style="left:77.5px;top:20.8px;" width="44.5" height="10.1" viewBox="0 0 44.5 10.1"><path d="M0 0H44.5L39.8 5.05L44.5 10.1H0z" fill="#000"/></svg>
<div class="t" style="left:79.70px;top:23.27px;font-size:4.3px;line-height:5.16px;color:#f6f6f6;font-weight:normal;font-style:italic;transform:scaleX(1.044);transform-origin:0 50%;">События дня</div>
<div class="t" style="left:83.40px;top:33.70px;font-size:10px;line-height:12.00px;color:#2a2a2a;font-weight:normal;transform:scaleX(0.813);transform-origin:0 50%;">Напишите здесь</div>
<div class="r" style="left:77px;top:59.3px;width:75px;height:1.2px;background:#333"></div>
<svg style="left:77.5px;top:61.3px;" width="44.5" height="9.7" viewBox="0 0 44.5 9.7"><path d="M0 0H44.5L39.8 4.85L44.5 9.7H0z" fill="#000"/></svg>
<div class="t" style="left:79.70px;top:63.57px;font-size:4.3px;line-height:5.16px;color:#f6f6f6;font-weight:normal;font-style:italic;transform:scaleX(0.945);transform-origin:0 50%;">Задание дня</div>
<div class="t" style="left:80.80px;top:75.18px;font-size:3.7px;line-height:4.44px;color:#555;font-weight:normal;transform:scaleX(1.245);transform-origin:0 50%;">Напишите здесь</div>
<div class="r" style="left:2px;top:100.5px;width:150px;height:14.5px;background:#4f7d76;border:1px solid #4a4a4a;border-top:2px solid #383838"></div>
<div class="r" style="left:2px;top:102px;width:30.8px;height:13px;background:#000"></div>
<div class="t" style="left:4.60px;top:101.42px;font-size:12.3px;line-height:14.76px;color:#dedede;font-weight:normal;transform:scaleX(0.864);transform-origin:0 50%;">15:00</div>
<div class="t" style="left:34.20px;top:102.92px;font-size:8.8px;line-height:10.56px;color:#f4f4f4;font-weight:bold;transform:scaleX(0.708);transform-origin:0 50%;-webkit-text-stroke:0.25px #f4f4f4">Пора научиться чему-нибудь новому</div>
</div>
<div class="s" style="left:0;top:0;transform:translate(16px,322.4px)">
<div class="r" style="left:0px;top:0px;width:154px;height:17px;background:#000"></div>
<div class="t" style="left:3.40px;top:4.98px;font-size:7.2px;line-height:8.64px;color:#d4dbe0;font-weight:normal;font-style:italic;transform:scaleX(0.948);transform-origin:0 50%;letter-spacing:0.5px">Сегодня</div>
<div class="t" style="left:39.30px;top:4.64px;font-size:7.6px;line-height:9.12px;color:#e6e6e6;font-weight:normal;transform:scaleX(0.702);transform-origin:0 50%;">пятница,  5 февраля, 2021</div>
<svg style="left:123.5px;top:0px;" width="31" height="24" viewBox="0 0 31 24"><path d="M3 0.6h25.5a2.4 2.4 0 0 1 2.4 2.4v12a2.4 2.4 0 0 1-2.4 2.4h-18.5l-4.5 4.8l0.6-4.8h-3.1a2.4 2.4 0 0 1-2.4-2.4v-12a2.4 2.4 0 0 1 2.4-2.4z" fill="#3f6f67" stroke="#d6a75e" stroke-width="0.9"/></svg>
<div class="t" style="left:130.00px;top:3.88px;font-size:3.2px;line-height:3.84px;color:#f2f6f4;font-weight:normal;transform:scaleX(1.245);transform-origin:0 50%;">Учитесь с</div>
<div class="t" style="left:126.50px;top:9.58px;font-size:3.2px;line-height:3.84px;color:#f2f6f4;font-weight:normal;transform:scaleX(1.107);transform-origin:0 50%;">удовольствием</div>
<div class="r" style="left:138px;top:15.6px;width:4px;height:0.8px;background:#cfd8d4"></div>
<div class="r" style="left:2px;top:19px;width:150px;height:83px;border:1px solid #333"></div>
<div class="r" style="left:76.7px;top:19px;width:1.3px;height:82px;background:#4a4a4a"></div>
<svg style="left:2.3px;top:21px;" width="45.3" height="10" viewBox="0 0 45.3 10"><path d="M0 0H45.3L40.599999999999994 5.0L45.3 10H0z" fill="#000"/></svg>
<div class="t" style="left:4.50px;top:23.42px;font-size:4.3px;line-height:5.16px;color:#f6f6f6;font-weight:normal;transform:scaleX(1.067);transform-origin:0 50%;">Расписание</div>
<div class="t" style="left:3.60px;top:32.98px;font-size:3.2px;line-height:3.84px;color:#555;font-weight:normal;transform:scaleX(0.996);transform-origin:0 50%;">8:30</div>
<div class="t" style="left:13.00px;top:32.92px;font-size:3.3px;line-height:3.96px;color:#333;font-weight:normal;transform:scaleX(0.950);transform-origin:0 50%;">Математика</div>
<div class="t" style="left:40.60px;top:32.98px;font-size:3.2px;line-height:3.84px;color:#555;font-weight:normal;transform:scaleX(0.999);transform-origin:0 50%;">12:30</div>
<div class="t" style="left:50.80px;top:32.92px;font-size:3.3px;line-height:3.96px;color:#777;font-weight:normal;transform:scaleX(0.916);transform-origin:0 50%;">Окружающий мир</div>
<div class="t" style="left:3.60px;top:40.08px;font-size:3.2px;line-height:3.84px;color:#555;font-weight:normal;transform:scaleX(0.996);transform-origin:0 50%;">9:30</div>
<div class="t" style="left:13.00px;top:40.02px;font-size:3.3px;line-height:3.96px;color:#333;font-weight:normal;transform:scaleX(0.950);transform-origin:0 50%;">Русский язык</div>
<div class="t" style="left:40.60px;top:40.08px;font-size:3.2px;line-height:3.84px;color:#555;font-weight:normal;transform:scaleX(0.999);transform-origin:0 50%;">13:45</div>
<div class="t" style="left:50.80px;top:40.02px;font-size:3.3px;line-height:3.96px;color:#333;font-weight:normal;transform:scaleX(0.950);transform-origin:0 50%;">Обед</div>
<div class="t" style="left:3.60px;top:47.33px;font-size:3.2px;line-height:3.84px;color:#555;font-weight:normal;transform:scaleX(0.774);transform-origin:0 50%;">10:30</div>
<div class="t" style="left:13.00px;top:47.27px;font-size:3.3px;line-height:3.96px;color:#333;font-weight:normal;transform:scaleX(0.950);transform-origin:0 50%;">Чтение</div>
<div class="t" style="left:40.60px;top:47.33px;font-size:3.2px;line-height:3.84px;color:#555;font-weight:normal;transform:scaleX(0.999);transform-origin:0 50%;">14:15</div>
<div class="t" style="left:50.80px;top:47.27px;font-size:3.3px;line-height:3.96px;color:#3d8a55;font-weight:normal;transform:scaleX(0.950);transform-origin:0 50%;">Робототехника</div>
<div class="t" style="left:3.60px;top:54.53px;font-size:3.2px;line-height:3.84px;color:#555;font-weight:normal;transform:scaleX(0.798);transform-origin:0 50%;">11:30</div>
<div class="t" style="left:13.00px;top:54.47px;font-size:3.3px;line-height:3.96px;color:#333;font-weight:normal;transform:scaleX(0.950);transform-origin:0 50%;">Физ.культура</div>
<div class="t" style="left:40.60px;top:54.53px;font-size:3.2px;line-height:3.84px;color:#555;font-weight:normal;transform:scaleX(0.999);transform-origin:0 50%;">15:15</div>
<div class="t" style="left:50.80px;top:54.47px;font-size:3.3px;line-height:3.96px;color:#2f6e4f;font-weight:normal;transform:scaleX(0.950);transform-origin:0 50%;">Оригами</div>
<div class="r" style="left:2px;top:37.8px;width:74.7px;height:0.6px;background:#b0b0b0"></div>
<div class="r" style="left:2px;top:45.0px;width:74.7px;height:0.6px;background:#b0b0b0"></div>
<div class="r" style="left:2px;top:52.3px;width:74.7px;height:0.6px;background:#b0b0b0"></div>
<div class="r" style="left:11.3px;top:30.8px;width:0.6px;height:28.6px;background:#9a9a9a"></div>
<div class="r" style="left:39.7px;top:30.8px;width:0.6px;height:28.6px;background:#9a9a9a"></div>
<div class="r" style="left:49.5px;top:30.8px;width:0.6px;height:28.6px;background:#9a9a9a"></div>
<div class="r" style="left:2px;top:59.5px;width:150px;height:1.2px;background:#333"></div>
<svg style="left:2.3px;top:62.3px;" width="45.3" height="9.3" viewBox="0 0 45.3 9.3"><path d="M0 0H45.3L40.599999999999994 4.65L45.3 9.3H0z" fill="#000"/></svg>
<div class="t" style="left:4.50px;top:64.37px;font-size:4.3px;line-height:5.16px;color:#f6f6f6;font-weight:normal;transform:scaleX(0.940);transform-origin:0 50%;">Домашнее задание</div>
<div class="t" style="left:6.00px;top:74.84px;font-size:3.6px;line-height:4.32px;color:#222;font-weight:normal;transform:scaleX(0.981);transform-origin:0 50%;">Математика:</div>
<div class="t" style="left:26.88px;top:74.84px;font-size:3.6px;line-height:4.32px;color:#555;font-weight:normal;transform:scaleX(0.981);transform-origin:0 50%;"> №128, 132</div>
<div class="t" style="left:6.00px;top:79.49px;font-size:3.6px;line-height:4.32px;color:#222;font-weight:normal;transform:scaleX(0.986);transform-origin:0 50%;">Русский язык:</div>
<div class="t" style="left:28.80px;top:79.49px;font-size:3.6px;line-height:4.32px;color:#555;font-weight:normal;transform:scaleX(0.986);transform-origin:0 50%;"> Упр. 68</div>
<div class="t" style="left:6.00px;top:84.14px;font-size:3.6px;line-height:4.32px;color:#222;font-weight:normal;transform:scaleX(0.988);transform-origin:0 50%;">Чтение:</div>
<div class="t" style="left:18.86px;top:84.14px;font-size:3.6px;line-height:4.32px;color:#555;font-weight:normal;transform:scaleX(0.988);transform-origin:0 50%;"> см. Рабочий лист</div>
<div class="t" style="left:6.00px;top:88.79px;font-size:3.6px;line-height:4.32px;color:#222;font-weight:normal;transform:scaleX(0.993);transform-origin:0 50%;">Окружающий мир:</div>
<div class="t" style="left:36.55px;top:88.79px;font-size:3.6px;line-height:4.32px;color:#555;font-weight:normal;transform:scaleX(0.993);transform-origin:0 50%;"> домашний опыт 8</div>
<svg style="left:77.5px;top:20.8px;" width="44.5" height="10.1" viewBox="0 0 44.5 10.1"><path d="M0 0H44.5L39.8 5.05L44.5 10.1H0z" fill="#000"/></svg>
<div class="t" style="left:79.70px;top:23.27px;font-size:4.3px;line-height:5.16px;color:#f6f6f6;font-weight:normal;font-style:italic;transform:scaleX(1.044);transform-origin:0 50%;">События дня</div>
<div class="t" style="left:83.40px;top:33.70px;font-size:10px;line-height:12.00px;color:#2a2a2a;font-weight:normal;transform:scaleX(0.813);transform-origin:0 50%;">Напишите здесь</div>
<svg style="left:77.5px;top:62.3px;" width="44.5" height="9.3" viewBox="0 0 44.5 9.3"><path d="M0 0H44.5L39.8 4.65L44.5 9.3H0z" fill="#000"/></svg>
<div class="t" style="left:79.70px;top:64.37px;font-size:4.3px;line-height:5.16px;color:#f6f6f6;font-weight:normal;font-style:italic;transform:scaleX(0.945);transform-origin:0 50%;">Задание дня</div>
<div class="t" style="left:80.80px;top:75.18px;font-size:3.7px;line-height:4.44px;color:#555;font-weight:normal;transform:scaleX(1.245);transform-origin:0 50%;">Напишите здесь</div>
<div class="r" style="left:2px;top:100.5px;width:150px;height:14.5px;background:#4f7d76;border:1px solid #4a4a4a;border-top:2px solid #383838"></div>
<div class="r" style="left:2px;top:102px;width:30.8px;height:13px;background:#000"></div>
<div class="t" style="left:4.60px;top:101.42px;font-size:12.3px;line-height:14.76px;color:#dedede;font-weight:normal;transform:scaleX(0.864);transform-origin:0 50%;">15:00</div>
<div class="t" style="left:34.20px;top:102.92px;font-size:8.8px;line-height:10.56px;color:#f4f4f4;font-weight:bold;transform:scaleX(0.708);transform-origin:0 50%;-webkit-text-stroke:0.25px #f4f4f4">Пора научиться чему-нибудь новому</div>
</div>
<div class="s" style="left:0;top:0;transform:translate(186.67px,322.4px)">
<div class="r" style="left:0px;top:0px;width:154px;height:17px;background:#000"></div>
<div class="r" style="left:2px;top:19px;width:150px;height:83px;border:1px solid #777"></div>
<div class="r" style="left:2px;top:101px;width:150px;height:14px;background:#4f7d76;border:1px solid #4a4a4a"></div>
</div>
<div class="s" style="left:0;top:0;transform:translate(357.33px,322.4px)">
<svg style="left:0px;top:7.3px;" width="82" height="23.3" viewBox="0 0 82 23.3"><path d="M0 0H82L75.4 11.65L82 23.3H0z" fill="#000"/></svg>
<div class="t" style="left:4.70px;top:11.04px;font-size:7.6px;line-height:9.12px;color:#d8791c;font-weight:normal;transform:scaleX(1.019);transform-origin:0 50%;letter-spacing:0.5px">Тематические</div>
<div class="t" style="left:4.70px;top:18.84px;font-size:7.6px;line-height:9.12px;color:#e8ecf0;font-weight:normal;font-style:italic;transform:scaleX(0.931);transform-origin:0 50%;letter-spacing:0.5px">слайды</div>
<div class="t" style="left:16.90px;top:39.10px;font-size:7px;line-height:8.40px;color:#262626;font-weight:normal;transform:scaleX(0.845);transform-origin:0 50%;">Памятные даты из Календаря природы</div>
</div>
<div class="s" style="left:0;top:0;transform:translate(528px,322.4px)">
<div class="r" style="left:0px;top:0px;width:154px;height:17px;background:#000"></div>
<div class="t" style="left:3.40px;top:4.98px;font-size:7.2px;line-height:8.64px;color:#d4dbe0;font-weight:normal;font-style:italic;transform:scaleX(0.948);transform-origin:0 50%;letter-spacing:0.5px">Сегодня</div>
<div class="t" style="left:39.30px;top:4.64px;font-size:7.6px;line-height:9.12px;color:#e6e6e6;font-weight:normal;transform:scaleX(0.711);transform-origin:0 50%;">вторник,  2 февраля, 2021</div>
<div class="t" style="left:115.80px;top:4.64px;font-size:7.6px;line-height:9.12px;color:#e8ad9a;font-weight:normal;transform:scaleX(0.882);transform-origin:0 50%;">День ежа</div>
<div class="r" style="left:2px;top:19px;width:150px;height:83px;border:1px solid #333"></div>
<svg style="left:2.3px;top:20.8px;" width="45.3" height="10.1" viewBox="0 0 45.3 10.1"><path d="M0 0H45.3L40.599999999999994 5.05L45.3 10.1H0z" fill="#000"/></svg>
<div class="t" style="left:4.50px;top:23.27px;font-size:4.3px;line-height:5.16px;color:#f6f6f6;font-weight:normal;transform:scaleX(1.063);transform-origin:0 50%;">Планы</div>
<div class="t" style="left:6.50px;top:35.18px;font-size:3.7px;line-height:4.44px;color:#555;font-weight:normal;transform:scaleX(1.011);transform-origin:0 50%;">Напишите здесь</div>
<div class="r" style="left:2px;top:100.5px;width:150px;height:14.5px;background:#d9b3a3;border:1px solid #4a4a4a;border-top:2px solid #383838"></div>
<div class="r" style="left:2px;top:102px;width:30.8px;height:13px;background:#000"></div>
<div class="t" style="left:4.60px;top:101.42px;font-size:12.3px;line-height:14.76px;color:#dedede;font-weight:normal;transform:scaleX(0.864);transform-origin:0 50%;">15:00</div>
<div class="t" style="left:54.60px;top:102.02px;font-size:9.8px;line-height:11.76px;color:#3a3535;font-weight:bold;transform:scaleX(0.880);transform-origin:0 50%;letter-spacing:0.6px">Доброе утро!</div>
<svg style="left:0px;top:0px;" width="154" height="115" viewBox="0 0 154 115">
<path d="M72 88.5C72.3 85 73 82 74 79C75 76 76 73.5 77.5 72C82 71.6 88 71.4 92 71.6C96 72 99 73 102 75.5C105 78 107 80 109.4 81.4C115 84.5 122 86.5 129 87.3C136 87.5 143 86.5 150 85.4C150.5 88 149.5 90.5 147.5 92.5C144 94.3 138 95.5 130 96.3C122 97.2 112 97.5 105 97.2C98 96.8 92 95.5 88 94.3C84.5 93.3 81 92.8 78 92.5C75.5 92.3 73 91.3 72 88.5z" fill="#f7f3f0"/>
<path d="M75.2 63.7C76.5 60 78 58 80 56.5C84 53 90 50.5 96 49C103 47.5 111 47 118.6 47.5C126 48 133 50.5 139 54.5C145 59 149 64.5 150.8 70C152 74 151.8 79 150 85.4C143 86.5 135 87.5 129 87.3C121 86 114 84 109.4 81.4C106 79 103 76 100 74C97 72.3 94.5 71.6 92 71.6L79 71.6C77.5 71.2 76.3 70.8 76 70z" fill="#a89474"/>
<g clip-path="url(#hc)"><path d="M99.6 52.5l0.2 -1.1" stroke="#6b553e" stroke-width="0.9" stroke-linecap="round"/><path d="M102.9 48.5l0.1 -1.0" stroke="#f4eee2" stroke-width="0.9" stroke-linecap="round"/><path d="M107.0 56.3l0.3 -1.0" stroke="#6b553e" stroke-width="0.9" stroke-linecap="round"/><path d="M148.8 73.1l1.0 -0.4" stroke="#f4eee2" stroke-width="0.9" stroke-linecap="round"/><path d="M118.0 51.7l0.6 -1.6" stroke="#efe6d4" stroke-width="0.9" stroke-linecap="round"/><path d="M118.3 75.3l0.8 -1.5" stroke="#9c8464" stroke-width="0.9" stroke-linecap="round"/><path d="M103.4 69.6l-0.2 -1.1" stroke="#9c8464" stroke-width="0.9" stroke-linecap="round"/><path d="M113.2 68.9l1.1 -1.2" stroke="#b9a382" stroke-width="0.9" stroke-linecap="round"/><path d="M102.6 56.7l-0.3 -2.0" stroke="#6b553e" stroke-width="0.9" stroke-linecap="round"/><path d="M119.4 68.6l1.6 -1.1" stroke="#efe6d4" stroke-width="0.9" stroke-linecap="round"/><path d="M122.1 49.1l0.6 -1.1" stroke="#e2d5bd" stroke-width="0.9" stroke-linecap="round"/><path d="M86.0 67.0l-1.3 -1.3" stroke="#e2d5bd" stroke-width="0.9" stroke-linecap="round"/><path d="M100.9 61.1l0.2 -2.0" stroke="#6b553e" stroke-width="0.9" stroke-linecap="round"/><path d="M111.5 74.6l0.4 -1.9" stroke="#b9a382" stroke-width="0.9" stroke-linecap="round"/><path d="M96.5 62.6l0.1 -1.0" stroke="#b9a382" stroke-width="0.9" stroke-linecap="round"/><path d="M102.1 72.3l0.2 -1.3" stroke="#efe6d4" stroke-width="0.9" stroke-linecap="round"/><path d="M84.2 56.6l-0.9 -1.9" stroke="#6b553e" stroke-width="0.9" stroke-linecap="round"/><path d="M87.1 63.3l-0.6 -1.0" stroke="#f4eee2" stroke-width="0.9" stroke-linecap="round"/><path d="M142.3 58.0l1.1 -1.0" stroke="#f4eee2" stroke-width="0.9" stroke-linecap="round"/><path d="M87.9 56.0l-0.7 -1.5" stroke="#5c4a36" stroke-width="0.9" stroke-linecap="round"/><path d="M107.1 61.9l0.7 -2.1" stroke="#4e3d2c" stroke-width="0.9" stroke-linecap="round"/><path d="M149.2 75.3l1.4 -0.5" stroke="#f4eee2" stroke-width="0.9" stroke-linecap="round"/><path d="M90.5 53.0l-0.3 -1.0" stroke="#4e3d2c" stroke-width="0.9" stroke-linecap="round"/><path d="M118.8 69.1l1.5 -0.9" stroke="#6b553e" stroke-width="0.9" stroke-linecap="round"/><path d="M143.1 72.4l1.0 -0.9" stroke="#e2d5bd" stroke-width="0.9" stroke-linecap="round"/><path d="M121.6 66.4l0.6 -1.5" stroke="#b9a382" stroke-width="0.9" stroke-linecap="round"/><path d="M112.0 59.4l0.2 -2.0" stroke="#efe6d4" stroke-width="0.9" stroke-linecap="round"/><path d="M111.8 75.8l0.8 -1.0" stroke="#e2d5bd" stroke-width="0.9" stroke-linecap="round"/><path d="M85.6 69.4l-1.2 -1.1" stroke="#6b553e" stroke-width="0.9" stroke-linecap="round"/><path d="M129.0 57.2l0.7 -1.0" stroke="#9c8464" stroke-width="0.9" stroke-linecap="round"/><path d="M116.1 79.5l0.9 -1.0" stroke="#9c8464" stroke-width="0.9" stroke-linecap="round"/><path d="M137.7 81.2l1.3 -0.2" stroke="#b9a382" stroke-width="0.9" stroke-linecap="round"/><path d="M91.4 55.8l-0.5 -1.2" stroke="#4e3d2c" stroke-width="0.9" stroke-linecap="round"/><path d="M111.9 74.1l0.8 -0.8" stroke="#6b553e" stroke-width="0.9" stroke-linecap="round"/><path d="M145.9 79.6l1.6 -0.2" stroke="#5c4a36" stroke-width="0.9" stroke-linecap="round"/><path d="M108.3 73.3l0.3 -2.2" stroke="#f4eee2" stroke-width="0.9" stroke-linecap="round"/><path d="M110.6 78.0l0.4 -1.2" stroke="#5c4a36" stroke-width="0.9" stroke-linecap="round"/><path d="M110.8 74.2l1.1 -1.4" stroke="#b9a382" stroke-width="0.9" stroke-linecap="round"/><path d="M125.9 61.1l0.8 -0.9" stroke="#4e3d2c" stroke-width="0.9" stroke-linecap="round"/><path d="M137.1 77.2l1.5 -1.3" stroke="#5c4a36" stroke-width="0.9" stroke-linecap="round"/><path d="M139.3 55.1l0.8 -1.1" stroke="#9c8464" stroke-width="0.9" stroke-linecap="round"/><path d="M134.3 60.0l1.6 -1.4" stroke="#4e3d2c" stroke-width="0.9" stroke-linecap="round"/><path d="M110.2 71.1l1.1 -1.1" stroke="#5c4a36" stroke-width="0.9" stroke-linecap="round"/><path d="M116.0 68.5l0.3 -1.5" stroke="#5c4a36" stroke-width="0.9" stroke-linecap="round"/><path d="M122.1 79.4l0.8 -0.9" stroke="#6b553e" stroke-width="0.9" stroke-linecap="round"/><path d="M118.0 60.0l0.9 -1.5" stroke="#6b553e" stroke-width="0.9" stroke-linecap="round"/><path d="M81.7 65.4l-1.7 -1.4" stroke="#6b553e" stroke-width="0.9" stroke-linecap="round"/><path d="M109.0 72.3l0.7 -1.5" stroke="#efe6d4" stroke-width="0.9" stroke-linecap="round"/><path d="M109.7 68.9l0.9 -2.0" stroke="#efe6d4" stroke-width="0.9" stroke-linecap="round"/><path d="M146.9 84.4l1.4 -0.7" stroke="#f4eee2" stroke-width="0.9" stroke-linecap="round"/><path d="M83.6 65.0l-0.9 -0.9" stroke="#6b553e" stroke-width="0.9" stroke-linecap="round"/><path d="M90.8 59.0l-1.0 -1.8" stroke="#e2d5bd" stroke-width="0.9" stroke-linecap="round"/><path d="M108.1 68.2l0.3 -1.2" stroke="#e2d5bd" stroke-width="0.9" stroke-linecap="round"/><path d="M81.3 61.7l-0.9 -1.3" stroke="#4e3d2c" stroke-width="0.9" stroke-linecap="round"/><path d="M104.4 68.2l0.2 -2.2" stroke="#6b553e" stroke-width="0.9" stroke-linecap="round"/><path d="M135.5 57.6l0.7 -1.4" stroke="#efe6d4" stroke-width="0.9" stroke-linecap="round"/><path d="M106.1 69.1l0.5 -1.6" stroke="#e2d5bd" stroke-width="0.9" stroke-linecap="round"/><path d="M128.4 64.3l0.9 -2.0" stroke="#6b553e" stroke-width="0.9" stroke-linecap="round"/><path d="M142.2 65.5l1.3 -1.1" stroke="#efe6d4" stroke-width="0.9" stroke-linecap="round"/><path d="M130.1 86.3l1.3 0.1" stroke="#5c4a36" stroke-width="0.9" stroke-linecap="round"/><path d="M89.9 59.4l-0.7 -1.8" stroke="#efe6d4" stroke-width="0.9" stroke-linecap="round"/><path d="M109.2 74.9l0.7 -1.9" stroke="#efe6d4" stroke-width="0.9" stroke-linecap="round"/><path d="M114.6 56.6l0.7 -1.7" stroke="#f4eee2" stroke-width="0.9" stroke-linecap="round"/><path d="M125.9 69.5l2.1 -0.9" stroke="#efe6d4" stroke-width="0.9" stroke-linecap="round"/><path d="M129.8 73.3l1.1 -0.9" stroke="#4e3d2c" stroke-width="0.9" stroke-linecap="round"/><path d="M123.4 83.8l1.0 -0.5" stroke="#f4eee2" stroke-width="0.9" stroke-linecap="round"/><path d="M142.8 74.8l1.1 -0.7" stroke="#efe6d4" stroke-width="0.9" stroke-linecap="round"/><path d="M102.8 60.1l0.7 -1.2" stroke="#4e3d2c" stroke-width="0.9" stroke-linecap="round"/><path d="M104.1 66.4l0.3 -1.2" stroke="#4e3d2c" stroke-width="0.9" stroke-linecap="round"/><path d="M85.4 71.2l-0.8 -1.2" stroke="#9c8464" stroke-width="0.9" stroke-linecap="round"/><path d="M144.5 79.7l1.9 -0.5" stroke="#b9a382" stroke-width="0.9" stroke-linecap="round"/><path d="M140.0 84.4l1.9 -0.3" stroke="#5c4a36" stroke-width="0.9" stroke-linecap="round"/><path d="M145.9 78.4l2.0 -0.6" stroke="#4e3d2c" stroke-width="0.9" stroke-linecap="round"/><path d="M139.3 71.1l1.8 -0.4" stroke="#9c8464" stroke-width="0.9" stroke-linecap="round"/><path d="M103.8 65.4l-0.2 -1.0" stroke="#9c8464" stroke-width="0.9" stroke-linecap="round"/><path d="M137.0 78.2l1.6 -0.7" stroke="#6b553e" stroke-width="0.9" stroke-linecap="round"/><path d="M132.9 66.4l1.9 -0.9" stroke="#9c8464" stroke-width="0.9" stroke-linecap="round"/><path d="M131.6 54.8l1.8 -1.4" stroke="#b9a382" stroke-width="0.9" stroke-linecap="round"/><path d="M100.2 74.0l0.5 -1.7" stroke="#5c4a36" stroke-width="0.9" stroke-linecap="round"/><path d="M128.7 75.1l1.2 -1.1" stroke="#b9a382" stroke-width="0.9" stroke-linecap="round"/><path d="M110.8 79.0l1.5 -0.8" stroke="#efe6d4" stroke-width="0.9" stroke-linecap="round"/><path d="M109.5 57.6l0.1 -2.2" stroke="#9c8464" stroke-width="0.9" stroke-linecap="round"/><path d="M133.1 57.3l1.1 -1.4" stroke="#efe6d4" stroke-width="0.9" stroke-linecap="round"/><path d="M144.1 76.2l1.8 -1.2" stroke="#b9a382" stroke-width="0.9" stroke-linecap="round"/><path d="M105.1 52.8l0.9 -1.6" stroke="#f4eee2" stroke-width="0.9" stroke-linecap="round"/><path d="M97.9 52.1l-0.2 -1.4" stroke="#e2d5bd" stroke-width="0.9" stroke-linecap="round"/><path d="M147.2 76.7l1.4 -0.0" stroke="#e2d5bd" stroke-width="0.9" stroke-linecap="round"/><path d="M79.1 62.8l-0.3 -1.1" stroke="#f4eee2" stroke-width="0.9" stroke-linecap="round"/><path d="M133.7 82.7l0.9 -0.5" stroke="#efe6d4" stroke-width="0.9" stroke-linecap="round"/><path d="M124.2 52.4l1.3 -0.9" stroke="#e2d5bd" stroke-width="0.9" stroke-linecap="round"/><path d="M89.0 62.1l0.2 -2.1" stroke="#f4eee2" stroke-width="0.9" stroke-linecap="round"/><path d="M117.4 76.9l0.9 -1.7" stroke="#b9a382" stroke-width="0.9" stroke-linecap="round"/><path d="M122.6 52.0l1.2 -1.1" stroke="#5c4a36" stroke-width="0.9" stroke-linecap="round"/><path d="M87.5 63.8l-0.6 -1.2" stroke="#efe6d4" stroke-width="0.9" stroke-linecap="round"/><path d="M106.1 56.3l0.4 -1.8" stroke="#6b553e" stroke-width="0.9" stroke-linecap="round"/><path d="M87.2 53.0l-1.0 -1.9" stroke="#b9a382" stroke-width="0.9" stroke-linecap="round"/><path d="M117.5 65.5l0.9 -1.8" stroke="#f4eee2" stroke-width="0.9" stroke-linecap="round"/><path d="M85.0 54.3l-0.9 -1.2" stroke="#6b553e" stroke-width="0.9" stroke-linecap="round"/><path d="M99.2 61.8l0.4 -1.2" stroke="#4e3d2c" stroke-width="0.9" stroke-linecap="round"/><path d="M133.2 63.7l1.2 -1.2" stroke="#f4eee2" stroke-width="0.9" stroke-linecap="round"/><path d="M113.4 70.7l0.8 -1.7" stroke="#9c8464" stroke-width="0.9" stroke-linecap="round"/><path d="M104.4 73.8l0.3 -1.4" stroke="#4e3d2c" stroke-width="0.9" stroke-linecap="round"/><path d="M84.1 64.3l-0.4 -2.0" stroke="#b9a382" stroke-width="0.9" stroke-linecap="round"/><path d="M147.2 81.5l2.3 0.0" stroke="#9c8464" stroke-width="0.9" stroke-linecap="round"/><path d="M135.9 55.6l1.1 -2.0" stroke="#6b553e" stroke-width="0.9" stroke-linecap="round"/><path d="M148.4 77.0l1.9 -0.4" stroke="#b9a382" stroke-width="0.9" stroke-linecap="round"/><path d="M119.0 47.6l1.3 -1.9" stroke="#efe6d4" stroke-width="0.9" stroke-linecap="round"/><path d="M115.7 64.8l0.8 -0.8" stroke="#efe6d4" stroke-width="0.9" stroke-linecap="round"/><path d="M115.4 71.1l0.7 -1.1" stroke="#4e3d2c" stroke-width="0.9" stroke-linecap="round"/><path d="M124.9 84.0l1.2 -0.5" stroke="#9c8464" stroke-width="0.9" stroke-linecap="round"/><path d="M76.3 63.7l-0.5 -0.9" stroke="#9c8464" stroke-width="0.9" stroke-linecap="round"/><path d="M113.4 75.0l0.7 -1.1" stroke="#f4eee2" stroke-width="0.9" stroke-linecap="round"/><path d="M107.2 75.4l0.4 -2.0" stroke="#6b553e" stroke-width="0.9" stroke-linecap="round"/><path d="M92.2 55.5l0.1 -1.4" stroke="#b9a382" stroke-width="0.9" stroke-linecap="round"/><path d="M122.2 84.5l2.0 -0.9" stroke="#4e3d2c" stroke-width="0.9" stroke-linecap="round"/><path d="M105.1 55.2l0.6 -1.0" stroke="#4e3d2c" stroke-width="0.9" stroke-linecap="round"/><path d="M130.1 53.9l1.1 -1.6" stroke="#e2d5bd" stroke-width="0.9" stroke-linecap="round"/><path d="M126.5 62.3l0.8 -1.2" stroke="#5c4a36" stroke-width="0.9" stroke-linecap="round"/><path d="M80.4 64.1l-0.4 -1.7" stroke="#9c8464" stroke-width="0.9" stroke-linecap="round"/><path d="M89.5 69.3l-0.5 -1.3" stroke="#b9a382" stroke-width="0.9" stroke-linecap="round"/><path d="M76.4 63.7l-0.7 -1.9" stroke="#4e3d2c" stroke-width="0.9" stroke-linecap="round"/><path d="M103.7 66.0l0.5 -1.0" stroke="#9c8464" stroke-width="0.9" stroke-linecap="round"/><path d="M133.0 84.6l1.2 -0.5" stroke="#4e3d2c" stroke-width="0.9" stroke-linecap="round"/><path d="M99.0 57.9l-0.7 -1.8" stroke="#6b553e" stroke-width="0.9" stroke-linecap="round"/><path d="M93.8 64.5l-0.3 -2.2" stroke="#5c4a36" stroke-width="0.9" stroke-linecap="round"/><path d="M86.0 56.2l-0.0 -1.6" stroke="#6b553e" stroke-width="0.9" stroke-linecap="round"/><path d="M114.4 62.8l0.3 -1.5" stroke="#4e3d2c" stroke-width="0.9" stroke-linecap="round"/><path d="M112.1 69.4l0.4 -1.5" stroke="#6b553e" stroke-width="0.9" stroke-linecap="round"/><path d="M113.4 76.5l0.8 -1.0" stroke="#f4eee2" stroke-width="0.9" stroke-linecap="round"/><path d="M92.6 69.2l0.0 -2.0" stroke="#efe6d4" stroke-width="0.9" stroke-linecap="round"/><path d="M97.2 70.4l-0.3 -1.9" stroke="#9c8464" stroke-width="0.9" stroke-linecap="round"/><path d="M108.7 54.0l0.1 -1.4" stroke="#9c8464" stroke-width="0.9" stroke-linecap="round"/><path d="M99.8 63.0l0.7 -1.5" stroke="#9c8464" stroke-width="0.9" stroke-linecap="round"/><path d="M125.3 50.3l0.5 -0.9" stroke="#4e3d2c" stroke-width="0.9" stroke-linecap="round"/><path d="M111.5 81.2l1.9 -1.1" stroke="#4e3d2c" stroke-width="0.9" stroke-linecap="round"/><path d="M79.9 68.0l-1.3 -1.2" stroke="#4e3d2c" stroke-width="0.9" stroke-linecap="round"/><path d="M123.0 55.4l0.5 -1.1" stroke="#9c8464" stroke-width="0.9" stroke-linecap="round"/><path d="M131.8 85.3l2.1 -0.1" stroke="#f4eee2" stroke-width="0.9" stroke-linecap="round"/><path d="M127.6 54.0l0.6 -1.1" stroke="#b9a382" stroke-width="0.9" stroke-linecap="round"/><path d="M117.3 48.7l0.1 -1.5" stroke="#5c4a36" stroke-width="0.9" stroke-linecap="round"/><path d="M124.5 49.9l0.5 -1.8" stroke="#f4eee2" stroke-width="0.9" stroke-linecap="round"/><path d="M107.0 48.2l0.8 -2.0" stroke="#f4eee2" stroke-width="0.9" stroke-linecap="round"/><path d="M145.2 64.2l1.4 -0.5" stroke="#e2d5bd" stroke-width="0.9" stroke-linecap="round"/><path d="M110.4 53.0l-0.2 -1.7" stroke="#f4eee2" stroke-width="0.9" stroke-linecap="round"/><path d="M103.3 67.7l-0.1 -1.4" stroke="#5c4a36" stroke-width="0.9" stroke-linecap="round"/><path d="M112.8 80.6l1.2 -0.5" stroke="#5c4a36" stroke-width="0.9" stroke-linecap="round"/><path d="M122.0 73.4l0.9 -1.7" stroke="#5c4a36" stroke-width="0.9" stroke-linecap="round"/><path d="M124.6 82.8l1.7 -0.6" stroke="#9c8464" stroke-width="0.9" stroke-linecap="round"/><path d="M91.2 63.2l-0.3 -1.5" stroke="#6b553e" stroke-width="0.9" stroke-linecap="round"/><path d="M138.4 54.3l1.9 -1.0" stroke="#4e3d2c" stroke-width="0.9" stroke-linecap="round"/><path d="M126.8 59.9l0.9 -1.3" stroke="#efe6d4" stroke-width="0.9" stroke-linecap="round"/><path d="M125.3 59.3l0.7 -1.4" stroke="#e2d5bd" stroke-width="0.9" stroke-linecap="round"/><path d="M109.3 64.8l-0.0 -1.8" stroke="#b9a382" stroke-width="0.9" stroke-linecap="round"/><path d="M110.8 65.2l1.0 -1.8" stroke="#5c4a36" stroke-width="0.9" stroke-linecap="round"/><path d="M138.0 63.2l0.8 -1.2" stroke="#e2d5bd" stroke-width="0.9" stroke-linecap="round"/><path d="M81.2 65.0l-0.5 -0.9" stroke="#5c4a36" stroke-width="0.9" stroke-linecap="round"/><path d="M135.4 68.0l0.9 -1.4" stroke="#f4eee2" stroke-width="0.9" stroke-linecap="round"/><path d="M125.6 79.7l0.7 -0.8" stroke="#6b553e" stroke-width="0.9" stroke-linecap="round"/><path d="M136.3 86.0l1.2 -0.8" stroke="#efe6d4" stroke-width="0.9" stroke-linecap="round"/><path d="M85.3 67.6l-0.1 -1.3" stroke="#efe6d4" stroke-width="0.9" stroke-linecap="round"/><path d="M122.7 56.2l0.6 -1.1" stroke="#f4eee2" stroke-width="0.9" stroke-linecap="round"/><path d="M127.7 84.5l1.7 -1.1" stroke="#6b553e" stroke-width="0.9" stroke-linecap="round"/><path d="M109.8 68.4l1.2 -1.8" stroke="#efe6d4" stroke-width="0.9" stroke-linecap="round"/><path d="M119.6 61.5l1.1 -1.1" stroke="#5c4a36" stroke-width="0.9" stroke-linecap="round"/><path d="M97.4 68.2l-0.4 -2.2" stroke="#e2d5bd" stroke-width="0.9" stroke-linecap="round"/><path d="M131.9 78.1l1.1 -0.9" stroke="#f4eee2" stroke-width="0.9" stroke-linecap="round"/><path d="M107.0 61.7l-0.2 -1.6" stroke="#4e3d2c" stroke-width="0.9" stroke-linecap="round"/><path d="M102.0 50.6l-0.0 -1.3" stroke="#efe6d4" stroke-width="0.9" stroke-linecap="round"/><path d="M120.5 54.8l0.9 -1.3" stroke="#5c4a36" stroke-width="0.9" stroke-linecap="round"/><path d="M129.9 65.4l0.5 -1.1" stroke="#efe6d4" stroke-width="0.9" stroke-linecap="round"/><path d="M105.8 57.4l-0.3 -1.8" stroke="#e2d5bd" stroke-width="0.9" stroke-linecap="round"/><path d="M121.0 70.9l1.2 -1.1" stroke="#b9a382" stroke-width="0.9" stroke-linecap="round"/><path d="M77.5 68.9l-0.9 -1.0" stroke="#4e3d2c" stroke-width="0.9" stroke-linecap="round"/><path d="M122.4 74.2l0.9 -1.2" stroke="#f4eee2" stroke-width="0.9" stroke-linecap="round"/><path d="M98.4 58.9l-0.7 -2.0" stroke="#b9a382" stroke-width="0.9" stroke-linecap="round"/><path d="M140.7 78.0l1.8 -0.8" stroke="#b9a382" stroke-width="0.9" stroke-linecap="round"/><path d="M124.2 75.2l1.9 -1.0" stroke="#efe6d4" stroke-width="0.9" stroke-linecap="round"/><path d="M114.1 53.3l1.3 -1.6" stroke="#9c8464" stroke-width="0.9" stroke-linecap="round"/><path d="M148.6 78.1l1.9 -1.0" stroke="#e2d5bd" stroke-width="0.9" stroke-linecap="round"/><path d="M121.5 62.3l1.7 -1.4" stroke="#b9a382" stroke-width="0.9" stroke-linecap="round"/><path d="M111.3 68.8l0.1 -1.0" stroke="#9c8464" stroke-width="0.9" stroke-linecap="round"/><path d="M119.1 59.2l0.5 -1.7" stroke="#6b553e" stroke-width="0.9" stroke-linecap="round"/><path d="M118.7 53.4l0.1 -1.1" stroke="#5c4a36" stroke-width="0.9" stroke-linecap="round"/><path d="M101.2 52.1l-0.3 -1.0" stroke="#4e3d2c" stroke-width="0.9" stroke-linecap="round"/><path d="M129.1 77.7l1.2 -1.3" stroke="#e2d5bd" stroke-width="0.9" stroke-linecap="round"/><path d="M116.2 74.6l1.7 -1.0" stroke="#f4eee2" stroke-width="0.9" stroke-linecap="round"/><path d="M141.0 80.9l2.0 -0.4" stroke="#efe6d4" stroke-width="0.9" stroke-linecap="round"/><path d="M111.7 51.7l0.9 -1.6" stroke="#efe6d4" stroke-width="0.9" stroke-linecap="round"/><path d="M99.2 64.2l-0.4 -1.3" stroke="#efe6d4" stroke-width="0.9" stroke-linecap="round"/><path d="M145.9 79.1l1.6 -0.4" stroke="#efe6d4" stroke-width="0.9" stroke-linecap="round"/><path d="M106.6 64.8l0.7 -1.3" stroke="#4e3d2c" stroke-width="0.9" stroke-linecap="round"/><path d="M116.5 55.3l0.7 -0.8" stroke="#efe6d4" stroke-width="0.9" stroke-linecap="round"/><path d="M112.8 67.1l0.8 -0.9" stroke="#b9a382" stroke-width="0.9" stroke-linecap="round"/><path d="M114.7 70.9l0.7 -1.9" stroke="#9c8464" stroke-width="0.9" stroke-linecap="round"/><path d="M113.4 50.7l0.5 -1.0" stroke="#6b553e" stroke-width="0.9" stroke-linecap="round"/><path d="M123.6 61.3l0.8 -1.3" stroke="#6b553e" stroke-width="0.9" stroke-linecap="round"/><path d="M107.3 73.8l0.4 -1.3" stroke="#f4eee2" stroke-width="0.9" stroke-linecap="round"/><path d="M145.2 67.6l1.7 -1.3" stroke="#9c8464" stroke-width="0.9" stroke-linecap="round"/><path d="M120.9 75.6l0.9 -0.6" stroke="#e2d5bd" stroke-width="0.9" stroke-linecap="round"/><path d="M109.6 69.8l0.5 -1.5" stroke="#efe6d4" stroke-width="0.9" stroke-linecap="round"/><path d="M119.8 51.4l0.9 -2.0" stroke="#9c8464" stroke-width="0.9" stroke-linecap="round"/><path d="M114.1 57.5l1.2 -1.7" stroke="#5c4a36" stroke-width="0.9" stroke-linecap="round"/><path d="M131.1 71.9l1.0 -0.9" stroke="#9c8464" stroke-width="0.9" stroke-linecap="round"/><path d="M126.0 54.4l0.4 -1.1" stroke="#efe6d4" stroke-width="0.9" stroke-linecap="round"/><path d="M131.9 64.7l1.0 -1.5" stroke="#6b553e" stroke-width="0.9" stroke-linecap="round"/><path d="M141.5 64.8l1.5 -1.7" stroke="#efe6d4" stroke-width="0.9" stroke-linecap="round"/><path d="M110.6 52.1l0.5 -1.4" stroke="#9c8464" stroke-width="0.9" stroke-linecap="round"/><path d="M145.7 64.5l1.7 -1.0" stroke="#f4eee2" stroke-width="0.9" stroke-linecap="round"/><path d="M140.8 74.7l2.0 -0.7" stroke="#9c8464" stroke-width="0.9" stroke-linecap="round"/><path d="M127.7 73.6l1.1 -0.9" stroke="#6b553e" stroke-width="0.9" stroke-linecap="round"/><path d="M105.6 76.6l0.2 -2.1" stroke="#b9a382" stroke-width="0.9" stroke-linecap="round"/><path d="M110.0 72.7l0.8 -1.7" stroke="#5c4a36" stroke-width="0.9" stroke-linecap="round"/><path d="M144.7 60.1l1.1 -1.8" stroke="#6b553e" stroke-width="0.9" stroke-linecap="round"/><path d="M77.0 69.4l-1.6 -1.2" stroke="#9c8464" stroke-width="0.9" stroke-linecap="round"/><path d="M115.0 50.3l0.7 -1.6" stroke="#b9a382" stroke-width="0.9" stroke-linecap="round"/><path d="M114.5 73.5l1.3 -1.0" stroke="#f4eee2" stroke-width="0.9" stroke-linecap="round"/><path d="M132.6 65.6l1.2 -0.4" stroke="#6b553e" stroke-width="0.9" stroke-linecap="round"/><path d="M131.6 72.4l1.2 -0.6" stroke="#f4eee2" stroke-width="0.9" stroke-linecap="round"/><path d="M107.1 64.1l0.6 -1.3" stroke="#efe6d4" stroke-width="0.9" stroke-linecap="round"/><path d="M82.6 59.1l-1.0 -2.0" stroke="#9c8464" stroke-width="0.9" stroke-linecap="round"/><path d="M110.5 53.1l0.6 -0.9" stroke="#9c8464" stroke-width="0.9" stroke-linecap="round"/><path d="M111.1 70.2l0.6 -2.2" stroke="#e2d5bd" stroke-width="0.9" stroke-linecap="round"/><path d="M126.6 81.7l1.5 -0.3" stroke="#efe6d4" stroke-width="0.9" stroke-linecap="round"/><path d="M134.0 73.9l1.5 -0.5" stroke="#9c8464" stroke-width="0.9" stroke-linecap="round"/><path d="M95.1 62.2l-0.4 -1.5" stroke="#5c4a36" stroke-width="0.9" stroke-linecap="round"/><path d="M112.0 80.6l1.2 -0.8" stroke="#efe6d4" stroke-width="0.9" stroke-linecap="round"/><path d="M99.3 66.9l0.2 -1.1" stroke="#e2d5bd" stroke-width="0.9" stroke-linecap="round"/><path d="M86.1 59.0l-0.4 -1.0" stroke="#e2d5bd" stroke-width="0.9" stroke-linecap="round"/><path d="M139.7 73.2l0.7 -0.8" stroke="#6b553e" stroke-width="0.9" stroke-linecap="round"/><path d="M125.8 56.8l0.4 -1.1" stroke="#9c8464" stroke-width="0.9" stroke-linecap="round"/><path d="M88.7 65.4l-0.1 -1.3" stroke="#f4eee2" stroke-width="0.9" stroke-linecap="round"/><path d="M136.5 53.2l1.6 -0.9" stroke="#6b553e" stroke-width="0.9" stroke-linecap="round"/><path d="M126.8 84.4l2.1 -0.3" stroke="#9c8464" stroke-width="0.9" stroke-linecap="round"/><path d="M113.1 55.2l0.1 -2.1" stroke="#6b553e" stroke-width="0.9" stroke-linecap="round"/><path d="M117.9 57.4l0.3 -1.1" stroke="#b9a382" stroke-width="0.9" stroke-linecap="round"/><path d="M118.0 66.8l1.5 -1.1" stroke="#9c8464" stroke-width="0.9" stroke-linecap="round"/><path d="M113.4 69.2l0.7 -0.7" stroke="#e2d5bd" stroke-width="0.9" stroke-linecap="round"/><path d="M111.0 70.2l1.2 -1.7" stroke="#e2d5bd" stroke-width="0.9" stroke-linecap="round"/><path d="M127.4 53.8l0.9 -1.6" stroke="#4e3d2c" stroke-width="0.9" stroke-linecap="round"/><path d="M122.2 75.4l1.3 -0.5" stroke="#6b553e" stroke-width="0.9" stroke-linecap="round"/><path d="M114.3 66.8l0.8 -0.7" stroke="#f4eee2" stroke-width="0.9" stroke-linecap="round"/><path d="M123.4 60.6l1.2 -0.9" stroke="#b9a382" stroke-width="0.9" stroke-linecap="round"/><path d="M135.5 69.8l1.3 -0.4" stroke="#e2d5bd" stroke-width="0.9" stroke-linecap="round"/><path d="M107.4 69.8l0.8 -1.1" stroke="#b9a382" stroke-width="0.9" stroke-linecap="round"/><path d="M105.9 67.7l0.2 -1.7" stroke="#9c8464" stroke-width="0.9" stroke-linecap="round"/><path d="M125.7 80.1l1.1 -0.8" stroke="#efe6d4" stroke-width="0.9" stroke-linecap="round"/><path d="M105.5 69.8l0.4 -1.7" stroke="#f4eee2" stroke-width="0.9" stroke-linecap="round"/><path d="M122.1 74.3l1.9 -1.0" stroke="#f4eee2" stroke-width="0.9" stroke-linecap="round"/><path d="M122.7 73.0l1.5 -1.0" stroke="#6b553e" stroke-width="0.9" stroke-linecap="round"/><path d="M110.2 78.8l0.4 -1.2" stroke="#4e3d2c" stroke-width="0.9" stroke-linecap="round"/><path d="M107.3 50.3l0.5 -0.9" stroke="#5c4a36" stroke-width="0.9" stroke-linecap="round"/><path d="M136.1 70.2l1.0 -1.0" stroke="#f4eee2" stroke-width="0.9" stroke-linecap="round"/><path d="M118.7 70.9l1.4 -0.8" stroke="#4e3d2c" stroke-width="0.9" stroke-linecap="round"/><path d="M139.2 79.3l1.7 -0.8" stroke="#f4eee2" stroke-width="0.9" stroke-linecap="round"/><path d="M104.6 71.5l1.3 -1.8" stroke="#b9a382" stroke-width="0.9" stroke-linecap="round"/><path d="M134.8 69.6l1.0 -1.3" stroke="#5c4a36" stroke-width="0.9" stroke-linecap="round"/><path d="M123.5 64.4l0.6 -1.8" stroke="#6b553e" stroke-width="0.9" stroke-linecap="round"/><path d="M91.2 51.2l-0.2 -1.3" stroke="#9c8464" stroke-width="0.9" stroke-linecap="round"/><path d="M109.6 78.0l1.2 -0.9" stroke="#5c4a36" stroke-width="0.9" stroke-linecap="round"/><path d="M123.7 76.5l1.8 -1.3" stroke="#efe6d4" stroke-width="0.9" stroke-linecap="round"/><path d="M143.8 75.5l1.4 -0.5" stroke="#efe6d4" stroke-width="0.9" stroke-linecap="round"/><path d="M131.6 53.1l1.3 -0.9" stroke="#4e3d2c" stroke-width="0.9" stroke-linecap="round"/><path d="M131.5 66.2l1.3 -1.9" stroke="#6b553e" stroke-width="0.9" stroke-linecap="round"/><path d="M102.7 73.7l0.5 -1.5" stroke="#f4eee2" stroke-width="0.9" stroke-linecap="round"/><path d="M135.5 65.5l1.3 -1.5" stroke="#e2d5bd" stroke-width="0.9" stroke-linecap="round"/><path d="M150.9 76.2l1.4 -0.1" stroke="#4e3d2c" stroke-width="0.9" stroke-linecap="round"/><path d="M139.7 71.8l1.2 -1.0" stroke="#9c8464" stroke-width="0.9" stroke-linecap="round"/><path d="M103.8 75.4l0.8 -2.0" stroke="#b9a382" stroke-width="0.9" stroke-linecap="round"/><path d="M94.8 64.2l-0.1 -2.1" stroke="#4e3d2c" stroke-width="0.9" stroke-linecap="round"/><path d="M96.8 52.0l0.6 -2.2" stroke="#5c4a36" stroke-width="0.9" stroke-linecap="round"/><path d="M137.8 75.4l1.4 -0.2" stroke="#6b553e" stroke-width="0.9" stroke-linecap="round"/><path d="M116.7 66.8l1.0 -1.8" stroke="#9c8464" stroke-width="0.9" stroke-linecap="round"/><path d="M105.2 76.5l1.2 -1.3" stroke="#4e3d2c" stroke-width="0.9" stroke-linecap="round"/><path d="M136.5 65.8l1.1 -1.7" stroke="#6b553e" stroke-width="0.9" stroke-linecap="round"/><path d="M92.4 70.9l0.2 -2.1" stroke="#e2d5bd" stroke-width="0.9" stroke-linecap="round"/><path d="M111.7 71.3l0.3 -1.2" stroke="#5c4a36" stroke-width="0.9" stroke-linecap="round"/><path d="M137.7 58.5l1.1 -0.9" stroke="#5c4a36" stroke-width="0.9" stroke-linecap="round"/><path d="M103.4 65.9l-0.2 -1.4" stroke="#4e3d2c" stroke-width="0.9" stroke-linecap="round"/><path d="M101.2 68.3l-0.3 -1.0" stroke="#b9a382" stroke-width="0.9" stroke-linecap="round"/><path d="M120.4 55.2l1.0 -0.9" stroke="#6b553e" stroke-width="0.9" stroke-linecap="round"/><path d="M148.8 79.0l2.2 -0.1" stroke="#efe6d4" stroke-width="0.9" stroke-linecap="round"/><path d="M140.7 60.6l1.4 -0.4" stroke="#4e3d2c" stroke-width="0.9" stroke-linecap="round"/><path d="M78.0 70.0l-0.6 -1.5" stroke="#6b553e" stroke-width="0.9" stroke-linecap="round"/><path d="M142.2 73.5l1.9 -0.2" stroke="#6b553e" stroke-width="0.9" stroke-linecap="round"/><path d="M94.3 70.3l-0.1 -2.2" stroke="#f4eee2" stroke-width="0.9" stroke-linecap="round"/><path d="M103.3 56.1l0.4 -1.2" stroke="#efe6d4" stroke-width="0.9" stroke-linecap="round"/><path d="M114.6 77.8l1.3 -0.9" stroke="#6b553e" stroke-width="0.9" stroke-linecap="round"/><path d="M148.2 75.1l1.5 -0.9" stroke="#6b553e" stroke-width="0.9" stroke-linecap="round"/><path d="M111.2 62.0l0.4 -1.4" stroke="#f4eee2" stroke-width="0.9" stroke-linecap="round"/><path d="M87.3 56.3l-1.0 -1.6" stroke="#4e3d2c" stroke-width="0.9" stroke-linecap="round"/><path d="M122.9 62.0l1.5 -1.3" stroke="#6b553e" stroke-width="0.9" stroke-linecap="round"/><path d="M92.5 51.0l-0.3 -1.4" stroke="#4e3d2c" stroke-width="0.9" stroke-linecap="round"/><path d="M88.2 65.4l-0.0 -1.6" stroke="#5c4a36" stroke-width="0.9" stroke-linecap="round"/><path d="M95.0 63.7l-0.5 -1.3" stroke="#efe6d4" stroke-width="0.9" stroke-linecap="round"/><path d="M100.4 53.2l0.1 -1.4" stroke="#b9a382" stroke-width="0.9" stroke-linecap="round"/><path d="M126.8 55.1l0.8 -1.1" stroke="#efe6d4" stroke-width="0.9" stroke-linecap="round"/><path d="M108.1 57.2l0.1 -1.3" stroke="#f4eee2" stroke-width="0.9" stroke-linecap="round"/><path d="M100.9 52.0l-0.7 -2.0" stroke="#efe6d4" stroke-width="0.9" stroke-linecap="round"/><path d="M88.7 64.7l0.0 -1.3" stroke="#5c4a36" stroke-width="0.9" stroke-linecap="round"/><path d="M134.9 76.6l0.8 -0.7" stroke="#6b553e" stroke-width="0.9" stroke-linecap="round"/><path d="M144.3 77.4l1.2 -0.2" stroke="#5c4a36" stroke-width="0.9" stroke-linecap="round"/><path d="M122.4 76.4l1.6 -0.7" stroke="#9c8464" stroke-width="0.9" stroke-linecap="round"/><path d="M115.0 82.2l1.6 -0.5" stroke="#e2d5bd" stroke-width="0.9" stroke-linecap="round"/><path d="M142.3 67.2l1.3 -1.8" stroke="#b9a382" stroke-width="0.9" stroke-linecap="round"/><path d="M93.6 70.2l0.2 -1.0" stroke="#e2d5bd" stroke-width="0.9" stroke-linecap="round"/><path d="M119.4 82.9l1.8 -1.3" stroke="#6b553e" stroke-width="0.9" stroke-linecap="round"/><path d="M138.5 83.2l1.8 -0.8" stroke="#f4eee2" stroke-width="0.9" stroke-linecap="round"/><path d="M97.0 50.6l0.3 -1.6" stroke="#4e3d2c" stroke-width="0.9" stroke-linecap="round"/><path d="M115.9 69.1l0.5 -2.2" stroke="#9c8464" stroke-width="0.9" stroke-linecap="round"/><path d="M122.9 53.2l0.7 -1.6" stroke="#4e3d2c" stroke-width="0.9" stroke-linecap="round"/><path d="M132.4 57.2l1.5 -1.0" stroke="#b9a382" stroke-width="0.9" stroke-linecap="round"/><path d="M115.3 76.2l0.9 -1.9" stroke="#5c4a36" stroke-width="0.9" stroke-linecap="round"/><path d="M113.0 67.5l0.4 -1.1" stroke="#f4eee2" stroke-width="0.9" stroke-linecap="round"/><path d="M143.9 69.3l1.0 -0.9" stroke="#b9a382" stroke-width="0.9" stroke-linecap="round"/><path d="M133.0 53.1l1.8 -1.3" stroke="#f4eee2" stroke-width="0.9" stroke-linecap="round"/><path d="M128.8 71.7l0.9 -0.6" stroke="#4e3d2c" stroke-width="0.9" stroke-linecap="round"/><path d="M135.4 60.6l0.8 -1.2" stroke="#f4eee2" stroke-width="0.9" stroke-linecap="round"/><path d="M140.6 70.3l1.4 -0.2" stroke="#f4eee2" stroke-width="0.9" stroke-linecap="round"/><path d="M107.3 73.2l0.5 -1.6" stroke="#6b553e" stroke-width="0.9" stroke-linecap="round"/><path d="M99.6 54.6l0.2 -1.3" stroke="#f4eee2" stroke-width="0.9" stroke-linecap="round"/><path d="M150.6 79.4l1.8 0.1" stroke="#4e3d2c" stroke-width="0.9" stroke-linecap="round"/><path d="M95.6 69.3l0.4 -1.8" stroke="#efe6d4" stroke-width="0.9" stroke-linecap="round"/><path d="M82.9 60.9l-0.7 -0.8" stroke="#efe6d4" stroke-width="0.9" stroke-linecap="round"/><path d="M80.7 71.4l-0.4 -1.5" stroke="#5c4a36" stroke-width="0.9" stroke-linecap="round"/><path d="M143.9 85.4l1.3 -0.2" stroke="#6b553e" stroke-width="0.9" stroke-linecap="round"/><path d="M132.5 58.3l1.3 -1.4" stroke="#9c8464" stroke-width="0.9" stroke-linecap="round"/><path d="M125.4 54.7l1.1 -1.2" stroke="#efe6d4" stroke-width="0.9" stroke-linecap="round"/><path d="M122.4 66.2l0.7 -1.1" stroke="#9c8464" stroke-width="0.9" stroke-linecap="round"/><path d="M88.9 69.5l0.1 -1.5" stroke="#e2d5bd" stroke-width="0.9" stroke-linecap="round"/><path d="M99.6 60.0l-0.3 -2.1" stroke="#9c8464" stroke-width="0.9" stroke-linecap="round"/><path d="M142.8 64.9l0.9 -1.2" stroke="#b9a382" stroke-width="0.9" stroke-linecap="round"/><path d="M127.5 86.2l1.8 -0.7" stroke="#5c4a36" stroke-width="0.9" stroke-linecap="round"/><path d="M127.4 72.5l1.9 -0.8" stroke="#6b553e" stroke-width="0.9" stroke-linecap="round"/><path d="M132.4 78.0l1.6 -0.4" stroke="#5c4a36" stroke-width="0.9" stroke-linecap="round"/><path d="M106.6 50.4l0.2 -1.7" stroke="#6b553e" stroke-width="0.9" stroke-linecap="round"/><path d="M119.2 64.0l1.6 -1.4" stroke="#6b553e" stroke-width="0.9" stroke-linecap="round"/><path d="M104.0 65.4l0.3 -1.9" stroke="#efe6d4" stroke-width="0.9" stroke-linecap="round"/><path d="M101.9 68.6l0.4 -1.8" stroke="#4e3d2c" stroke-width="0.9" stroke-linecap="round"/><path d="M136.2 82.5l1.5 -0.5" stroke="#5c4a36" stroke-width="0.9" stroke-linecap="round"/><path d="M116.4 80.5l1.1 -1.0" stroke="#9c8464" stroke-width="0.9" stroke-linecap="round"/><path d="M90.1 64.3l0.1 -1.0" stroke="#4e3d2c" stroke-width="0.9" stroke-linecap="round"/><path d="M97.7 69.1l-0.3 -1.8" stroke="#f4eee2" stroke-width="0.9" stroke-linecap="round"/><path d="M114.9 68.2l1.0 -1.1" stroke="#e2d5bd" stroke-width="0.9" stroke-linecap="round"/><path d="M106.4 67.5l0.9 -2.0" stroke="#5c4a36" stroke-width="0.9" stroke-linecap="round"/><path d="M112.5 64.9l1.2 -2.0" stroke="#e2d5bd" stroke-width="0.9" stroke-linecap="round"/><path d="M128.6 78.1l1.0 -1.1" stroke="#e2d5bd" stroke-width="0.9" stroke-linecap="round"/><path d="M114.5 50.8l1.2 -1.5" stroke="#f4eee2" stroke-width="0.9" stroke-linecap="round"/><path d="M123.9 68.5l1.1 -0.7" stroke="#9c8464" stroke-width="0.9" stroke-linecap="round"/><path d="M106.6 48.6l0.3 -1.1" stroke="#4e3d2c" stroke-width="0.9" stroke-linecap="round"/><path d="M105.4 50.2l-0.2 -1.0" stroke="#5c4a36" stroke-width="0.9" stroke-linecap="round"/><path d="M113.3 69.8l0.6 -1.7" stroke="#5c4a36" stroke-width="0.9" stroke-linecap="round"/><path d="M119.4 63.7l0.4 -1.2" stroke="#6b553e" stroke-width="0.9" stroke-linecap="round"/><path d="M148.9 67.1l1.3 -0.8" stroke="#4e3d2c" stroke-width="0.9" stroke-linecap="round"/><path d="M125.4 75.4l1.0 -0.6" stroke="#9c8464" stroke-width="0.9" stroke-linecap="round"/><path d="M102.0 53.3l-0.1 -1.1" stroke="#6b553e" stroke-width="0.9" stroke-linecap="round"/><path d="M101.6 65.3l0.0 -1.1" stroke="#f4eee2" stroke-width="0.9" stroke-linecap="round"/><path d="M108.7 72.7l0.3 -1.0" stroke="#5c4a36" stroke-width="0.9" stroke-linecap="round"/><path d="M138.5 59.1l1.8 -1.4" stroke="#b9a382" stroke-width="0.9" stroke-linecap="round"/><path d="M127.5 75.0l1.3 -0.8" stroke="#f4eee2" stroke-width="0.9" stroke-linecap="round"/><path d="M143.1 66.8l1.2 -0.4" stroke="#5c4a36" stroke-width="0.9" stroke-linecap="round"/><path d="M87.4 62.3l-1.4 -1.6" stroke="#f4eee2" stroke-width="0.9" stroke-linecap="round"/><path d="M118.4 50.9l0.7 -1.3" stroke="#f4eee2" stroke-width="0.9" stroke-linecap="round"/><path d="M117.8 62.7l0.7 -1.3" stroke="#f4eee2" stroke-width="0.9" stroke-linecap="round"/><path d="M101.0 52.7l0.3 -1.1" stroke="#efe6d4" stroke-width="0.9" stroke-linecap="round"/><path d="M117.0 79.9l1.3 -0.9" stroke="#9c8464" stroke-width="0.9" stroke-linecap="round"/><path d="M86.6 61.2l-0.2 -1.5" stroke="#9c8464" stroke-width="0.9" stroke-linecap="round"/><path d="M97.5 66.5l-0.5 -2.0" stroke="#5c4a36" stroke-width="0.9" stroke-linecap="round"/><path d="M121.1 64.9l1.5 -0.8" stroke="#f4eee2" stroke-width="0.9" stroke-linecap="round"/><path d="M122.0 55.1l0.9 -0.8" stroke="#6b553e" stroke-width="0.9" stroke-linecap="round"/><path d="M116.9 57.6l0.9 -1.2" stroke="#5c4a36" stroke-width="0.9" stroke-linecap="round"/><path d="M98.6 62.8l-0.4 -1.2" stroke="#9c8464" stroke-width="0.9" stroke-linecap="round"/><path d="M82.6 70.2l-1.0 -1.3" stroke="#efe6d4" stroke-width="0.9" stroke-linecap="round"/><path d="M80.9 58.4l-0.3 -1.5" stroke="#e2d5bd" stroke-width="0.9" stroke-linecap="round"/><path d="M135.2 84.0l1.2 0.0" stroke="#efe6d4" stroke-width="0.9" stroke-linecap="round"/><path d="M87.9 61.8l-0.1 -1.9" stroke="#f4eee2" stroke-width="0.9" stroke-linecap="round"/><path d="M81.7 58.5l-1.0 -1.5" stroke="#9c8464" stroke-width="0.9" stroke-linecap="round"/><path d="M89.6 59.0l-0.3 -1.0" stroke="#efe6d4" stroke-width="0.9" stroke-linecap="round"/><path d="M118.6 55.8l0.8 -1.5" stroke="#f4eee2" stroke-width="0.9" stroke-linecap="round"/><path d="M126.9 70.7l1.1 -0.4" stroke="#efe6d4" stroke-width="0.9" stroke-linecap="round"/><path d="M145.2 83.6l1.9 -0.3" stroke="#9c8464" stroke-width="0.9" stroke-linecap="round"/><path d="M107.0 78.0l1.4 -1.1" stroke="#9c8464" stroke-width="0.9" stroke-linecap="round"/><path d="M96.2 49.9l0.5 -1.5" stroke="#e2d5bd" stroke-width="0.9" stroke-linecap="round"/><path d="M128.6 77.8l1.8 -0.4" stroke="#b9a382" stroke-width="0.9" stroke-linecap="round"/><path d="M114.2 75.1l0.8 -1.7" stroke="#5c4a36" stroke-width="0.9" stroke-linecap="round"/><path d="M112.7 54.1l1.3 -1.6" stroke="#efe6d4" stroke-width="0.9" stroke-linecap="round"/><path d="M87.8 53.0l-0.0 -1.3" stroke="#efe6d4" stroke-width="0.9" stroke-linecap="round"/><path d="M102.3 63.7l-0.1 -1.4" stroke="#5c4a36" stroke-width="0.9" stroke-linecap="round"/><path d="M128.2 66.9l1.4 -1.3" stroke="#4e3d2c" stroke-width="0.9" stroke-linecap="round"/><path d="M114.7 65.1l1.1 -1.0" stroke="#efe6d4" stroke-width="0.9" stroke-linecap="round"/><path d="M120.4 56.4l0.7 -0.9" stroke="#f4eee2" stroke-width="0.9" stroke-linecap="round"/><path d="M134.1 53.3l1.3 -1.2" stroke="#b9a382" stroke-width="0.9" stroke-linecap="round"/><path d="M140.3 63.5l1.2 -1.5" stroke="#4e3d2c" stroke-width="0.9" stroke-linecap="round"/><path d="M102.5 54.9l-0.3 -1.3" stroke="#9c8464" stroke-width="0.9" stroke-linecap="round"/><path d="M82.7 59.3l-0.0 -1.2" stroke="#b9a382" stroke-width="0.9" stroke-linecap="round"/><path d="M111.0 61.6l0.1 -1.1" stroke="#4e3d2c" stroke-width="0.9" stroke-linecap="round"/><path d="M112.4 78.1l1.1 -1.7" stroke="#efe6d4" stroke-width="0.9" stroke-linecap="round"/><path d="M82.6 67.0l-0.7 -1.1" stroke="#e2d5bd" stroke-width="0.9" stroke-linecap="round"/><path d="M124.9 73.0l1.7 -0.6" stroke="#efe6d4" stroke-width="0.9" stroke-linecap="round"/><path d="M125.6 49.4l0.7 -0.8" stroke="#f4eee2" stroke-width="0.9" stroke-linecap="round"/><path d="M140.3 58.7l1.0 -1.5" stroke="#5c4a36" stroke-width="0.9" stroke-linecap="round"/><path d="M98.5 72.5l-0.1 -1.8" stroke="#e2d5bd" stroke-width="0.9" stroke-linecap="round"/><path d="M99.3 61.8l0.1 -1.5" stroke="#efe6d4" stroke-width="0.9" stroke-linecap="round"/><path d="M118.8 73.0l1.6 -1.0" stroke="#4e3d2c" stroke-width="0.9" stroke-linecap="round"/><path d="M148.6 67.3l1.1 -0.6" stroke="#efe6d4" stroke-width="0.9" stroke-linecap="round"/><path d="M121.6 72.9l0.7 -1.1" stroke="#5c4a36" stroke-width="0.9" stroke-linecap="round"/><path d="M108.7 54.2l0.4 -0.9" stroke="#f4eee2" stroke-width="0.9" stroke-linecap="round"/><path d="M137.5 75.0l1.5 -0.6" stroke="#e2d5bd" stroke-width="0.9" stroke-linecap="round"/><path d="M114.8 64.4l0.9 -1.6" stroke="#5c4a36" stroke-width="0.9" stroke-linecap="round"/><path d="M123.0 80.9l1.2 -1.4" stroke="#efe6d4" stroke-width="0.9" stroke-linecap="round"/><path d="M118.6 64.1l0.9 -1.6" stroke="#5c4a36" stroke-width="0.9" stroke-linecap="round"/><path d="M97.6 60.8l0.3 -1.0" stroke="#9c8464" stroke-width="0.9" stroke-linecap="round"/><path d="M128.6 52.3l1.1 -1.3" stroke="#f4eee2" stroke-width="0.9" stroke-linecap="round"/><path d="M102.4 56.3l0.1 -1.3" stroke="#9c8464" stroke-width="0.9" stroke-linecap="round"/><path d="M117.3 50.8l0.9 -1.0" stroke="#6b553e" stroke-width="0.9" stroke-linecap="round"/><path d="M130.0 55.8l1.0 -1.4" stroke="#6b553e" stroke-width="0.9" stroke-linecap="round"/><path d="M132.1 85.1l2.1 -0.5" stroke="#6b553e" stroke-width="0.9" stroke-linecap="round"/><path d="M113.7 67.8l1.6 -1.6" stroke="#6b553e" stroke-width="0.9" stroke-linecap="round"/><path d="M110.3 75.5l1.3 -1.9" stroke="#9c8464" stroke-width="0.9" stroke-linecap="round"/><path d="M118.5 79.3l1.2 -1.6" stroke="#4e3d2c" stroke-width="0.9" stroke-linecap="round"/><path d="M105.9 48.0l-0.4 -1.9" stroke="#9c8464" stroke-width="0.9" stroke-linecap="round"/><path d="M110.3 51.2l-0.0 -2.2" stroke="#6b553e" stroke-width="0.9" stroke-linecap="round"/><path d="M123.1 83.5l2.0 -0.8" stroke="#e2d5bd" stroke-width="0.9" stroke-linecap="round"/><path d="M127.8 81.5l1.1 -1.0" stroke="#e2d5bd" stroke-width="0.9" stroke-linecap="round"/><path d="M121.7 50.3l1.0 -1.8" stroke="#6b553e" stroke-width="0.9" stroke-linecap="round"/><path d="M93.2 61.2l0.0 -1.0" stroke="#b9a382" stroke-width="0.9" stroke-linecap="round"/><path d="M88.6 69.8l-0.9 -1.6" stroke="#f4eee2" stroke-width="0.9" stroke-linecap="round"/><path d="M140.1 71.3l1.7 -1.5" stroke="#efe6d4" stroke-width="0.9" stroke-linecap="round"/><path d="M101.0 52.5l0.2 -2.1" stroke="#4e3d2c" stroke-width="0.9" stroke-linecap="round"/><path d="M124.9 71.8l2.0 -1.0" stroke="#b9a382" stroke-width="0.9" stroke-linecap="round"/><path d="M122.3 49.3l0.4 -1.2" stroke="#5c4a36" stroke-width="0.9" stroke-linecap="round"/><path d="M87.4 61.5l-0.6 -1.7" stroke="#f4eee2" stroke-width="0.9" stroke-linecap="round"/><path d="M100.5 66.8l-0.2 -1.3" stroke="#4e3d2c" stroke-width="0.9" stroke-linecap="round"/><path d="M123.8 77.3l0.9 -1.2" stroke="#6b553e" stroke-width="0.9" stroke-linecap="round"/><path d="M113.5 57.3l0.7 -1.5" stroke="#5c4a36" stroke-width="0.9" stroke-linecap="round"/><path d="M118.3 79.1l1.9 -0.7" stroke="#6b553e" stroke-width="0.9" stroke-linecap="round"/><path d="M102.7 58.1l0.8 -2.0" stroke="#5c4a36" stroke-width="0.9" stroke-linecap="round"/><path d="M127.8 59.1l1.5 -1.2" stroke="#9c8464" stroke-width="0.9" stroke-linecap="round"/><path d="M101.7 69.7l0.1 -1.1" stroke="#e2d5bd" stroke-width="0.9" stroke-linecap="round"/><path d="M127.1 84.0l1.6 -0.2" stroke="#9c8464" stroke-width="0.9" stroke-linecap="round"/><path d="M85.9 54.8l0.0 -1.9" stroke="#f4eee2" stroke-width="0.9" stroke-linecap="round"/><path d="M109.2 70.5l0.3 -1.2" stroke="#6b553e" stroke-width="0.9" stroke-linecap="round"/><path d="M93.9 70.6l-0.1 -2.3" stroke="#6b553e" stroke-width="0.9" stroke-linecap="round"/><path d="M146.8 71.1l0.9 -0.9" stroke="#e2d5bd" stroke-width="0.9" stroke-linecap="round"/><path d="M135.2 64.4l1.0 -0.4" stroke="#b9a382" stroke-width="0.9" stroke-linecap="round"/><path d="M99.2 53.5l0.6 -1.6" stroke="#5c4a36" stroke-width="0.9" stroke-linecap="round"/><path d="M123.5 56.2l0.2 -1.0" stroke="#b9a382" stroke-width="0.9" stroke-linecap="round"/><path d="M142.3 73.9l1.5 -1.2" stroke="#5c4a36" stroke-width="0.9" stroke-linecap="round"/><path d="M121.5 49.4l1.4 -1.6" stroke="#e2d5bd" stroke-width="0.9" stroke-linecap="round"/><path d="M112.4 72.2l0.9 -0.9" stroke="#f4eee2" stroke-width="0.9" stroke-linecap="round"/><path d="M122.4 79.4l1.5 -0.3" stroke="#b9a382" stroke-width="0.9" stroke-linecap="round"/><path d="M98.8 63.9l0.4 -2.0" stroke="#5c4a36" stroke-width="0.9" stroke-linecap="round"/><path d="M107.4 69.2l0.7 -1.6" stroke="#e2d5bd" stroke-width="0.9" stroke-linecap="round"/><path d="M138.3 66.5l1.0 -1.5" stroke="#b9a382" stroke-width="0.9" stroke-linecap="round"/><path d="M118.2 61.5l0.7 -1.1" stroke="#efe6d4" stroke-width="0.9" stroke-linecap="round"/><path d="M125.8 79.3l1.9 -1.3" stroke="#9c8464" stroke-width="0.9" stroke-linecap="round"/><path d="M148.0 72.9l1.3 -1.1" stroke="#9c8464" stroke-width="0.9" stroke-linecap="round"/><path d="M117.9 53.8l1.1 -1.0" stroke="#5c4a36" stroke-width="0.9" stroke-linecap="round"/><path d="M145.3 83.4l2.0 0.1" stroke="#4e3d2c" stroke-width="0.9" stroke-linecap="round"/><path d="M145.2 62.7l1.4 -1.5" stroke="#4e3d2c" stroke-width="0.9" stroke-linecap="round"/><path d="M78.7 70.3l-1.5 -1.6" stroke="#9c8464" stroke-width="0.9" stroke-linecap="round"/><path d="M130.0 56.4l0.8 -1.2" stroke="#f4eee2" stroke-width="0.9" stroke-linecap="round"/><path d="M124.8 58.8l1.1 -0.7" stroke="#5c4a36" stroke-width="0.9" stroke-linecap="round"/><path d="M84.8 58.9l-0.6 -0.8" stroke="#9c8464" stroke-width="0.9" stroke-linecap="round"/><path d="M121.2 65.5l1.4 -1.6" stroke="#9c8464" stroke-width="0.9" stroke-linecap="round"/><path d="M141.3 77.6l1.5 -1.4" stroke="#b9a382" stroke-width="0.9" stroke-linecap="round"/><path d="M81.1 60.6l-0.2 -1.9" stroke="#e2d5bd" stroke-width="0.9" stroke-linecap="round"/><path d="M113.9 56.0l0.4 -1.1" stroke="#4e3d2c" stroke-width="0.9" stroke-linecap="round"/><path d="M91.7 69.2l-0.2 -1.7" stroke="#6b553e" stroke-width="0.9" stroke-linecap="round"/><path d="M115.9 82.1l1.1 -0.3" stroke="#9c8464" stroke-width="0.9" stroke-linecap="round"/><path d="M95.1 60.0l-0.7 -1.4" stroke="#efe6d4" stroke-width="0.9" stroke-linecap="round"/><path d="M117.4 75.7l2.0 -0.8" stroke="#efe6d4" stroke-width="0.9" stroke-linecap="round"/><path d="M105.5 59.7l0.3 -2.2" stroke="#f4eee2" stroke-width="0.9" stroke-linecap="round"/><path d="M134.1 83.9l2.2 -0.1" stroke="#4e3d2c" stroke-width="0.9" stroke-linecap="round"/><path d="M92.9 67.5l0.4 -1.9" stroke="#f4eee2" stroke-width="0.9" stroke-linecap="round"/><path d="M126.4 49.7l0.6 -0.8" stroke="#4e3d2c" stroke-width="0.9" stroke-linecap="round"/><path d="M106.1 70.0l0.7 -1.4" stroke="#e2d5bd" stroke-width="0.9" stroke-linecap="round"/><path d="M110.0 70.8l0.8 -1.7" stroke="#b9a382" stroke-width="0.9" stroke-linecap="round"/><path d="M114.3 71.5l1.1 -0.7" stroke="#f4eee2" stroke-width="0.9" stroke-linecap="round"/><path d="M102.1 48.8l0.6 -1.2" stroke="#e2d5bd" stroke-width="0.9" stroke-linecap="round"/><path d="M126.5 85.7l1.3 -0.1" stroke="#b9a382" stroke-width="0.9" stroke-linecap="round"/><path d="M141.8 61.0l1.4 -1.0" stroke="#5c4a36" stroke-width="0.9" stroke-linecap="round"/><path d="M102.8 54.8l-0.2 -1.5" stroke="#5c4a36" stroke-width="0.9" stroke-linecap="round"/><path d="M141.6 74.0l1.4 -0.2" stroke="#e2d5bd" stroke-width="0.9" stroke-linecap="round"/><path d="M139.7 81.2l1.0 -0.7" stroke="#efe6d4" stroke-width="0.9" stroke-linecap="round"/><path d="M103.6 61.7l0.5 -1.6" stroke="#efe6d4" stroke-width="0.9" stroke-linecap="round"/><path d="M109.8 49.8l0.4 -2.3" stroke="#6b553e" stroke-width="0.9" stroke-linecap="round"/><path d="M109.5 66.6l1.2 -1.6" stroke="#5c4a36" stroke-width="0.9" stroke-linecap="round"/><path d="M112.6 74.4l1.1 -1.3" stroke="#f4eee2" stroke-width="0.9" stroke-linecap="round"/><path d="M94.0 69.9l-0.7 -1.1" stroke="#5c4a36" stroke-width="0.9" stroke-linecap="round"/><path d="M98.2 69.4l0.4 -1.3" stroke="#efe6d4" stroke-width="0.9" stroke-linecap="round"/><path d="M124.3 82.9l1.2 -1.0" stroke="#efe6d4" stroke-width="0.9" stroke-linecap="round"/><path d="M122.8 62.0l0.4 -1.5" stroke="#e2d5bd" stroke-width="0.9" stroke-linecap="round"/><path d="M122.0 57.0l0.7 -2.0" stroke="#5c4a36" stroke-width="0.9" stroke-linecap="round"/><path d="M150.7 76.6l1.7 -0.8" stroke="#e2d5bd" stroke-width="0.9" stroke-linecap="round"/><path d="M109.2 62.9l0.6 -2.1" stroke="#4e3d2c" stroke-width="0.9" stroke-linecap="round"/><path d="M82.5 70.2l-0.4 -1.9" stroke="#f4eee2" stroke-width="0.9" stroke-linecap="round"/><path d="M106.8 66.4l0.9 -1.3" stroke="#b9a382" stroke-width="0.9" stroke-linecap="round"/><path d="M89.8 69.3l0.0 -1.4" stroke="#e2d5bd" stroke-width="0.9" stroke-linecap="round"/><path d="M134.8 79.1l1.0 -0.8" stroke="#6b553e" stroke-width="0.9" stroke-linecap="round"/><path d="M113.3 82.5l1.0 -1.3" stroke="#9c8464" stroke-width="0.9" stroke-linecap="round"/><path d="M130.2 66.8l0.9 -1.7" stroke="#f4eee2" stroke-width="0.9" stroke-linecap="round"/><path d="M106.1 48.2l0.4 -1.4" stroke="#9c8464" stroke-width="0.9" stroke-linecap="round"/><path d="M94.7 59.5l-0.6 -2.0" stroke="#f4eee2" stroke-width="0.9" stroke-linecap="round"/><path d="M114.4 64.1l0.2 -1.4" stroke="#f4eee2" stroke-width="0.9" stroke-linecap="round"/><path d="M137.4 82.8l1.1 -0.6" stroke="#4e3d2c" stroke-width="0.9" stroke-linecap="round"/><path d="M147.7 74.2l1.2 -0.3" stroke="#e2d5bd" stroke-width="0.9" stroke-linecap="round"/><path d="M117.9 48.2l0.4 -1.6" stroke="#f4eee2" stroke-width="0.9" stroke-linecap="round"/><path d="M149.2 81.4l1.0 -0.8" stroke="#b9a382" stroke-width="0.9" stroke-linecap="round"/><path d="M137.4 71.5l1.9 -1.2" stroke="#b9a382" stroke-width="0.9" stroke-linecap="round"/><path d="M90.1 54.7l-0.9 -1.9" stroke="#6b553e" stroke-width="0.9" stroke-linecap="round"/><path d="M118.3 80.4l1.5 -1.1" stroke="#efe6d4" stroke-width="0.9" stroke-linecap="round"/><path d="M137.4 69.0l1.3 -1.5" stroke="#9c8464" stroke-width="0.9" stroke-linecap="round"/><path d="M114.8 66.0l0.3 -1.1" stroke="#4e3d2c" stroke-width="0.9" stroke-linecap="round"/><path d="M106.8 74.3l0.4 -2.1" stroke="#f4eee2" stroke-width="0.9" stroke-linecap="round"/><path d="M140.1 58.6l1.1 -1.4" stroke="#e2d5bd" stroke-width="0.9" stroke-linecap="round"/><path d="M129.8 76.9l1.0 -0.8" stroke="#9c8464" stroke-width="0.9" stroke-linecap="round"/><path d="M76.6 62.3l-0.6 -1.2" stroke="#6b553e" stroke-width="0.9" stroke-linecap="round"/><path d="M89.7 52.4l-0.6 -1.3" stroke="#f4eee2" stroke-width="0.9" stroke-linecap="round"/><path d="M115.6 58.5l0.6 -1.9" stroke="#b9a382" stroke-width="0.9" stroke-linecap="round"/><path d="M144.3 85.3l1.2 -0.6" stroke="#efe6d4" stroke-width="0.9" stroke-linecap="round"/><path d="M121.2 69.3l0.5 -1.1" stroke="#efe6d4" stroke-width="0.9" stroke-linecap="round"/><path d="M134.7 78.9l1.7 -0.2" stroke="#efe6d4" stroke-width="0.9" stroke-linecap="round"/><path d="M148.6 74.2l1.0 -1.0" stroke="#b9a382" stroke-width="0.9" stroke-linecap="round"/><path d="M112.0 60.2l0.3 -1.1" stroke="#efe6d4" stroke-width="0.9" stroke-linecap="round"/><path d="M137.9 77.1l1.8 -0.9" stroke="#6b553e" stroke-width="0.9" stroke-linecap="round"/><path d="M136.3 71.6l0.9 -0.6" stroke="#6b553e" stroke-width="0.9" stroke-linecap="round"/><path d="M106.6 75.9l0.7 -2.0" stroke="#6b553e" stroke-width="0.9" stroke-linecap="round"/><path d="M103.6 74.5l-0.0 -1.2" stroke="#6b553e" stroke-width="0.9" stroke-linecap="round"/><path d="M143.0 66.7l0.7 -0.8" stroke="#9c8464" stroke-width="0.9" stroke-linecap="round"/><path d="M83.2 67.3l-0.5 -1.0" stroke="#b9a382" stroke-width="0.9" stroke-linecap="round"/><path d="M93.4 70.4l-0.7 -1.1" stroke="#9c8464" stroke-width="0.9" stroke-linecap="round"/><path d="M96.4 69.9l0.7 -2.1" stroke="#9c8464" stroke-width="0.9" stroke-linecap="round"/><path d="M148.5 67.0l1.7 -0.5" stroke="#9c8464" stroke-width="0.9" stroke-linecap="round"/><path d="M107.5 72.8l0.2 -1.7" stroke="#6b553e" stroke-width="0.9" stroke-linecap="round"/><path d="M80.7 70.9l-1.3 -1.2" stroke="#4e3d2c" stroke-width="0.9" stroke-linecap="round"/><path d="M100.6 50.2l-0.3 -2.0" stroke="#5c4a36" stroke-width="0.9" stroke-linecap="round"/><path d="M138.4 60.7l1.4 -0.7" stroke="#5c4a36" stroke-width="0.9" stroke-linecap="round"/><path d="M106.5 63.5l-0.1 -1.3" stroke="#5c4a36" stroke-width="0.9" stroke-linecap="round"/><path d="M85.9 60.8l-0.7 -1.0" stroke="#9c8464" stroke-width="0.9" stroke-linecap="round"/><path d="M128.2 76.5l0.6 -0.8" stroke="#b9a382" stroke-width="0.9" stroke-linecap="round"/><path d="M77.0 68.6l-0.8 -0.8" stroke="#6b553e" stroke-width="0.9" stroke-linecap="round"/><path d="M140.8 79.8l1.5 -1.2" stroke="#e2d5bd" stroke-width="0.9" stroke-linecap="round"/><path d="M120.0 80.5l1.7 -1.1" stroke="#b9a382" stroke-width="0.9" stroke-linecap="round"/><path d="M148.0 84.9l2.1 -0.0" stroke="#5c4a36" stroke-width="0.9" stroke-linecap="round"/><path d="M136.0 83.4l2.0 -1.0" stroke="#6b553e" stroke-width="0.9" stroke-linecap="round"/><path d="M137.4 78.3l1.3 -0.2" stroke="#b9a382" stroke-width="0.9" stroke-linecap="round"/><path d="M118.4 83.7l2.0 -1.0" stroke="#4e3d2c" stroke-width="0.9" stroke-linecap="round"/><path d="M136.7 75.4l2.1 -0.2" stroke="#f4eee2" stroke-width="0.9" stroke-linecap="round"/><path d="M127.1 80.0l2.0 -0.7" stroke="#f4eee2" stroke-width="0.9" stroke-linecap="round"/><path d="M107.1 72.0l0.5 -1.4" stroke="#9c8464" stroke-width="0.9" stroke-linecap="round"/><path d="M80.6 62.9l-0.5 -0.9" stroke="#e2d5bd" stroke-width="0.9" stroke-linecap="round"/><path d="M81.0 57.7l-0.4 -1.5" stroke="#9c8464" stroke-width="0.9" stroke-linecap="round"/><path d="M88.5 57.7l0.2 -1.5" stroke="#9c8464" stroke-width="0.9" stroke-linecap="round"/><path d="M98.4 59.7l0.6 -1.9" stroke="#9c8464" stroke-width="0.9" stroke-linecap="round"/><path d="M93.4 70.3l-0.1 -2.0" stroke="#6b553e" stroke-width="0.9" stroke-linecap="round"/><path d="M133.5 74.6l1.4 -1.4" stroke="#efe6d4" stroke-width="0.9" stroke-linecap="round"/><path d="M123.3 65.1l1.3 -0.7" stroke="#f4eee2" stroke-width="0.9" stroke-linecap="round"/><path d="M148.1 80.8l1.5 -1.1" stroke="#b9a382" stroke-width="0.9" stroke-linecap="round"/><path d="M128.0 70.0l1.5 -1.3" stroke="#5c4a36" stroke-width="0.9" stroke-linecap="round"/><path d="M131.6 78.2l1.0 -1.1" stroke="#5c4a36" stroke-width="0.9" stroke-linecap="round"/><path d="M95.4 54.1l0.4 -1.6" stroke="#f4eee2" stroke-width="0.9" stroke-linecap="round"/><path d="M87.7 71.4l-0.0 -1.8" stroke="#9c8464" stroke-width="0.9" stroke-linecap="round"/><path d="M97.0 69.4l-0.2 -2.3" stroke="#6b553e" stroke-width="0.9" stroke-linecap="round"/><path d="M137.6 75.1l1.9 -1.2" stroke="#e2d5bd" stroke-width="0.9" stroke-linecap="round"/><path d="M128.6 57.9l0.7 -1.6" stroke="#4e3d2c" stroke-width="0.9" stroke-linecap="round"/><path d="M136.7 60.9l0.9 -1.4" stroke="#4e3d2c" stroke-width="0.9" stroke-linecap="round"/><path d="M87.5 59.4l-0.8 -1.1" stroke="#f4eee2" stroke-width="0.9" stroke-linecap="round"/><path d="M135.4 61.5l1.1 -0.7" stroke="#b9a382" stroke-width="0.9" stroke-linecap="round"/><path d="M89.6 59.8l-0.3 -1.1" stroke="#efe6d4" stroke-width="0.9" stroke-linecap="round"/><path d="M102.6 59.7l0.6 -1.5" stroke="#6b553e" stroke-width="0.9" stroke-linecap="round"/><path d="M124.3 79.5l0.9 -0.8" stroke="#b9a382" stroke-width="0.9" stroke-linecap="round"/><path d="M126.2 82.5l1.0 -0.5" stroke="#f4eee2" stroke-width="0.9" stroke-linecap="round"/><path d="M115.8 58.4l0.7 -1.1" stroke="#4e3d2c" stroke-width="0.9" stroke-linecap="round"/><path d="M118.8 61.2l1.1 -0.8" stroke="#9c8464" stroke-width="0.9" stroke-linecap="round"/><path d="M144.0 83.7l1.5 -1.0" stroke="#f4eee2" stroke-width="0.9" stroke-linecap="round"/><path d="M139.9 76.6l1.2 -0.1" stroke="#5c4a36" stroke-width="0.9" stroke-linecap="round"/><path d="M150.4 73.3l1.9 -0.5" stroke="#f4eee2" stroke-width="0.9" stroke-linecap="round"/><path d="M140.5 80.0l1.5 -0.1" stroke="#b9a382" stroke-width="0.9" stroke-linecap="round"/><path d="M137.7 61.0l1.2 -1.7" stroke="#f4eee2" stroke-width="0.9" stroke-linecap="round"/><path d="M126.9 84.8l1.2 -0.9" stroke="#6b553e" stroke-width="0.9" stroke-linecap="round"/><path d="M92.6 64.6l-0.8 -1.8" stroke="#5c4a36" stroke-width="0.9" stroke-linecap="round"/><path d="M133.6 67.5l2.0 -0.7" stroke="#f4eee2" stroke-width="0.9" stroke-linecap="round"/><path d="M129.6 76.3l1.2 -0.6" stroke="#6b553e" stroke-width="0.9" stroke-linecap="round"/><path d="M135.0 72.0l1.5 -0.9" stroke="#9c8464" stroke-width="0.9" stroke-linecap="round"/><path d="M98.4 61.5l0.1 -2.1" stroke="#6b553e" stroke-width="0.9" stroke-linecap="round"/><path d="M123.7 52.0l0.4 -1.0" stroke="#b9a382" stroke-width="0.9" stroke-linecap="round"/><path d="M120.6 71.6l0.7 -1.6" stroke="#b9a382" stroke-width="0.9" stroke-linecap="round"/><path d="M82.7 55.7l-0.4 -1.4" stroke="#e2d5bd" stroke-width="0.9" stroke-linecap="round"/><path d="M115.9 55.9l0.9 -1.8" stroke="#efe6d4" stroke-width="0.9" stroke-linecap="round"/><path d="M140.3 80.8l1.0 -0.3" stroke="#5c4a36" stroke-width="0.9" stroke-linecap="round"/><path d="M76.2 67.7l-0.7 -0.8" stroke="#efe6d4" stroke-width="0.9" stroke-linecap="round"/><path d="M131.2 71.2l1.3 -1.1" stroke="#f4eee2" stroke-width="0.9" stroke-linecap="round"/><path d="M111.8 51.8l0.5 -1.8" stroke="#b9a382" stroke-width="0.9" stroke-linecap="round"/><path d="M135.4 80.0l2.0 -0.4" stroke="#9c8464" stroke-width="0.9" stroke-linecap="round"/><path d="M118.3 76.2l1.8 -0.7" stroke="#4e3d2c" stroke-width="0.9" stroke-linecap="round"/><path d="M146.7 77.1l1.1 -0.2" stroke="#9c8464" stroke-width="0.9" stroke-linecap="round"/><path d="M124.7 78.1l1.5 -0.9" stroke="#5c4a36" stroke-width="0.9" stroke-linecap="round"/><path d="M118.7 59.6l0.5 -1.0" stroke="#5c4a36" stroke-width="0.9" stroke-linecap="round"/><path d="M128.6 64.1l0.8 -1.8" stroke="#6b553e" stroke-width="0.9" stroke-linecap="round"/><path d="M112.4 49.6l0.2 -1.4" stroke="#5c4a36" stroke-width="0.9" stroke-linecap="round"/><path d="M141.1 68.7l1.1 -1.0" stroke="#e2d5bd" stroke-width="0.9" stroke-linecap="round"/><path d="M145.8 76.5l2.3 -0.0" stroke="#f4eee2" stroke-width="0.9" stroke-linecap="round"/><path d="M135.2 77.2l1.6 -1.4" stroke="#f4eee2" stroke-width="0.9" stroke-linecap="round"/><path d="M90.9 71.2l-0.4 -0.9" stroke="#6b553e" stroke-width="0.9" stroke-linecap="round"/><path d="M110.6 47.9l0.9 -1.4" stroke="#6b553e" stroke-width="0.9" stroke-linecap="round"/><path d="M141.8 60.6l1.3 -0.9" stroke="#9c8464" stroke-width="0.9" stroke-linecap="round"/><path d="M128.1 85.3l1.7 -0.2" stroke="#4e3d2c" stroke-width="0.9" stroke-linecap="round"/><path d="M125.5 83.1l1.9 -0.0" stroke="#b9a382" stroke-width="0.9" stroke-linecap="round"/><path d="M128.7 66.3l1.1 -1.9" stroke="#f4eee2" stroke-width="0.9" stroke-linecap="round"/><path d="M139.1 73.3l1.0 -0.3" stroke="#6b553e" stroke-width="0.9" stroke-linecap="round"/><path d="M149.8 79.3l1.4 -1.1" stroke="#f4eee2" stroke-width="0.9" stroke-linecap="round"/><path d="M94.8 52.6l-0.9 -1.8" stroke="#6b553e" stroke-width="0.9" stroke-linecap="round"/><path d="M134.0 83.9l1.0 -0.7" stroke="#5c4a36" stroke-width="0.9" stroke-linecap="round"/><path d="M122.7 59.9l1.3 -1.8" stroke="#f4eee2" stroke-width="0.9" stroke-linecap="round"/><path d="M141.3 69.9l1.6 -0.4" stroke="#6b553e" stroke-width="0.9" stroke-linecap="round"/><path d="M129.8 74.4l1.4 -0.7" stroke="#4e3d2c" stroke-width="0.9" stroke-linecap="round"/><path d="M118.2 55.0l0.4 -1.6" stroke="#b9a382" stroke-width="0.9" stroke-linecap="round"/><path d="M132.1 74.9l1.8 -0.3" stroke="#6b553e" stroke-width="0.9" stroke-linecap="round"/><path d="M117.1 61.2l0.4 -1.9" stroke="#6b553e" stroke-width="0.9" stroke-linecap="round"/><path d="M81.1 57.8l-0.8 -1.2" stroke="#b9a382" stroke-width="0.9" stroke-linecap="round"/><path d="M128.7 71.7l1.3 -0.9" stroke="#f4eee2" stroke-width="0.9" stroke-linecap="round"/><path d="M147.0 70.7l1.5 -1.3" stroke="#6b553e" stroke-width="0.9" stroke-linecap="round"/><path d="M146.1 82.0l1.0 -0.1" stroke="#5c4a36" stroke-width="0.9" stroke-linecap="round"/><path d="M141.1 64.5l1.2 -0.4" stroke="#efe6d4" stroke-width="0.9" stroke-linecap="round"/><path d="M108.9 76.4l0.5 -1.3" stroke="#e2d5bd" stroke-width="0.9" stroke-linecap="round"/><path d="M76.2 62.4l-0.9 -0.8" stroke="#b9a382" stroke-width="0.9" stroke-linecap="round"/><path d="M134.2 82.0l2.0 0.1" stroke="#efe6d4" stroke-width="0.9" stroke-linecap="round"/><path d="M116.5 60.7l0.7 -1.3" stroke="#e2d5bd" stroke-width="0.9" stroke-linecap="round"/><path d="M92.9 60.7l-0.6 -1.1" stroke="#4e3d2c" stroke-width="0.9" stroke-linecap="round"/><path d="M139.2 59.5l1.2 -0.8" stroke="#6b553e" stroke-width="0.9" stroke-linecap="round"/><path d="M115.9 73.9l1.5 -1.6" stroke="#f4eee2" stroke-width="0.9" stroke-linecap="round"/><path d="M147.6 68.3l1.8 -0.5" stroke="#9c8464" stroke-width="0.9" stroke-linecap="round"/><path d="M144.0 76.7l1.0 -0.5" stroke="#5c4a36" stroke-width="0.9" stroke-linecap="round"/><path d="M122.2 72.4l1.2 -1.9" stroke="#efe6d4" stroke-width="0.9" stroke-linecap="round"/><path d="M133.5 56.7l0.5 -0.9" stroke="#9c8464" stroke-width="0.9" stroke-linecap="round"/><path d="M124.6 72.6l1.6 -1.1" stroke="#5c4a36" stroke-width="0.9" stroke-linecap="round"/><path d="M125.8 71.7l1.2 -0.7" stroke="#6b553e" stroke-width="0.9" stroke-linecap="round"/><path d="M131.6 69.0l0.6 -0.9" stroke="#6b553e" stroke-width="0.9" stroke-linecap="round"/><path d="M131.1 73.9l1.8 -1.1" stroke="#b9a382" stroke-width="0.9" stroke-linecap="round"/><path d="M98.0 63.6l0.2 -1.6" stroke="#6b553e" stroke-width="0.9" stroke-linecap="round"/><path d="M142.0 65.8l0.9 -0.8" stroke="#f4eee2" stroke-width="0.9" stroke-linecap="round"/><path d="M139.5 55.7l1.8 -0.9" stroke="#e2d5bd" stroke-width="0.9" stroke-linecap="round"/><path d="M120.4 74.4l0.6 -1.0" stroke="#6b553e" stroke-width="0.9" stroke-linecap="round"/><path d="M94.1 49.8l-0.0 -1.1" stroke="#efe6d4" stroke-width="0.9" stroke-linecap="round"/><path d="M93.9 61.7l-0.1 -1.1" stroke="#9c8464" stroke-width="0.9" stroke-linecap="round"/><path d="M134.1 86.1l1.5 -1.1" stroke="#9c8464" stroke-width="0.9" stroke-linecap="round"/><path d="M134.2 82.7l1.9 -1.1" stroke="#efe6d4" stroke-width="0.9" stroke-linecap="round"/><path d="M126.4 82.0l0.8 -0.6" stroke="#b9a382" stroke-width="0.9" stroke-linecap="round"/><path d="M112.5 50.7l0.6 -1.5" stroke="#f4eee2" stroke-width="0.9" stroke-linecap="round"/><path d="M83.3 66.6l-0.9 -1.0" stroke="#b9a382" stroke-width="0.9" stroke-linecap="round"/><path d="M95.0 65.1l-0.4 -1.4" stroke="#4e3d2c" stroke-width="0.9" stroke-linecap="round"/><path d="M132.8 70.2l2.1 -0.7" stroke="#f4eee2" stroke-width="0.9" stroke-linecap="round"/><path d="M115.5 56.3l0.3 -2.1" stroke="#9c8464" stroke-width="0.9" stroke-linecap="round"/><path d="M82.0 66.5l-1.1 -1.9" stroke="#5c4a36" stroke-width="0.9" stroke-linecap="round"/><path d="M79.9 65.5l-0.8 -1.0" stroke="#e2d5bd" stroke-width="0.9" stroke-linecap="round"/><path d="M111.5 57.1l0.6 -1.7" stroke="#4e3d2c" stroke-width="0.9" stroke-linecap="round"/><path d="M124.8 75.5l1.0 -1.6" stroke="#b9a382" stroke-width="0.9" stroke-linecap="round"/><path d="M126.5 52.0l0.7 -1.3" stroke="#e2d5bd" stroke-width="0.9" stroke-linecap="round"/><path d="M132.5 82.9l2.0 -0.9" stroke="#5c4a36" stroke-width="0.9" stroke-linecap="round"/><path d="M110.2 77.1l1.1 -1.8" stroke="#efe6d4" stroke-width="0.9" stroke-linecap="round"/><path d="M108.7 52.0l-0.0 -2.0" stroke="#9c8464" stroke-width="0.9" stroke-linecap="round"/><path d="M111.7 68.0l1.2 -1.1" stroke="#9c8464" stroke-width="0.9" stroke-linecap="round"/><path d="M123.1 55.3l0.9 -0.9" stroke="#b9a382" stroke-width="0.9" stroke-linecap="round"/><path d="M88.0 63.8l-0.2 -1.7" stroke="#5c4a36" stroke-width="0.9" stroke-linecap="round"/><path d="M121.9 66.4l1.0 -1.1" stroke="#efe6d4" stroke-width="0.9" stroke-linecap="round"/><path d="M93.0 51.2l0.3 -1.2" stroke="#5c4a36" stroke-width="0.9" stroke-linecap="round"/><path d="M87.3 64.2l-1.3 -1.6" stroke="#f4eee2" stroke-width="0.9" stroke-linecap="round"/><path d="M94.0 70.5l-0.4 -1.1" stroke="#efe6d4" stroke-width="0.9" stroke-linecap="round"/><path d="M150.5 76.6l1.2 -1.0" stroke="#6b553e" stroke-width="0.9" stroke-linecap="round"/><path d="M79.8 62.2l-1.2 -1.5" stroke="#6b553e" stroke-width="0.9" stroke-linecap="round"/><path d="M109.3 67.5l0.8 -1.7" stroke="#e2d5bd" stroke-width="0.9" stroke-linecap="round"/><path d="M144.9 70.5l1.4 -1.3" stroke="#efe6d4" stroke-width="0.9" stroke-linecap="round"/><path d="M124.8 63.7l1.2 -0.6" stroke="#6b553e" stroke-width="0.9" stroke-linecap="round"/><path d="M127.9 55.1l1.1 -1.9" stroke="#b9a382" stroke-width="0.9" stroke-linecap="round"/><path d="M111.6 75.2l1.3 -1.3" stroke="#5c4a36" stroke-width="0.9" stroke-linecap="round"/><path d="M110.8 59.9l1.5 -1.7" stroke="#6b553e" stroke-width="0.9" stroke-linecap="round"/><path d="M132.1 61.5l1.6 -1.2" stroke="#5c4a36" stroke-width="0.9" stroke-linecap="round"/><path d="M122.7 73.8l1.2 -1.1" stroke="#e2d5bd" stroke-width="0.9" stroke-linecap="round"/><path d="M119.6 61.3l1.0 -1.2" stroke="#5c4a36" stroke-width="0.9" stroke-linecap="round"/><path d="M138.1 75.8l1.9 -0.6" stroke="#f4eee2" stroke-width="0.9" stroke-linecap="round"/><path d="M134.6 81.9l1.8 -0.4" stroke="#9c8464" stroke-width="0.9" stroke-linecap="round"/><path d="M125.2 53.0l0.4 -1.6" stroke="#4e3d2c" stroke-width="0.9" stroke-linecap="round"/><path d="M116.3 77.2l0.6 -0.9" stroke="#4e3d2c" stroke-width="0.9" stroke-linecap="round"/><path d="M93.7 53.5l-0.8 -2.0" stroke="#9c8464" stroke-width="0.9" stroke-linecap="round"/><path d="M85.7 60.4l-0.4 -1.3" stroke="#f4eee2" stroke-width="0.9" stroke-linecap="round"/><path d="M133.1 83.6l2.0 -1.0" stroke="#efe6d4" stroke-width="0.9" stroke-linecap="round"/><path d="M123.3 76.0l1.4 -1.5" stroke="#e2d5bd" stroke-width="0.9" stroke-linecap="round"/><path d="M101.0 67.1l-0.3 -2.2" stroke="#4e3d2c" stroke-width="0.9" stroke-linecap="round"/><path d="M133.4 82.1l1.3 -0.6" stroke="#4e3d2c" stroke-width="0.9" stroke-linecap="round"/><path d="M120.3 54.2l1.3 -1.6" stroke="#9c8464" stroke-width="0.9" stroke-linecap="round"/><path d="M123.2 81.5l1.4 -0.8" stroke="#4e3d2c" stroke-width="0.9" stroke-linecap="round"/><path d="M89.2 71.0l-1.1 -1.4" stroke="#9c8464" stroke-width="0.9" stroke-linecap="round"/><path d="M133.3 67.6l1.1 -0.9" stroke="#4e3d2c" stroke-width="0.9" stroke-linecap="round"/><path d="M91.5 58.5l-0.1 -1.9" stroke="#9c8464" stroke-width="0.9" stroke-linecap="round"/><path d="M94.6 52.8l-0.6 -1.9" stroke="#efe6d4" stroke-width="0.9" stroke-linecap="round"/><path d="M105.3 68.5l0.2 -2.0" stroke="#e2d5bd" stroke-width="0.9" stroke-linecap="round"/><path d="M114.6 52.5l1.4 -1.6" stroke="#b9a382" stroke-width="0.9" stroke-linecap="round"/><path d="M136.0 76.9l1.9 -0.3" stroke="#b9a382" stroke-width="0.9" stroke-linecap="round"/><path d="M115.8 79.3l0.6 -0.9" stroke="#f4eee2" stroke-width="0.9" stroke-linecap="round"/><path d="M108.5 48.9l0.8 -1.5" stroke="#b9a382" stroke-width="0.9" stroke-linecap="round"/><path d="M99.1 66.5l0.4 -2.0" stroke="#e2d5bd" stroke-width="0.9" stroke-linecap="round"/><path d="M116.3 79.5l1.2 -0.7" stroke="#4e3d2c" stroke-width="0.9" stroke-linecap="round"/><path d="M82.3 65.6l-0.5 -1.3" stroke="#4e3d2c" stroke-width="0.9" stroke-linecap="round"/><path d="M118.0 48.7l0.6 -0.9" stroke="#6b553e" stroke-width="0.9" stroke-linecap="round"/><path d="M141.3 74.4l1.4 -0.9" stroke="#5c4a36" stroke-width="0.9" stroke-linecap="round"/><path d="M105.1 50.0l0.5 -0.9" stroke="#efe6d4" stroke-width="0.9" stroke-linecap="round"/><path d="M145.9 74.8l1.8 -0.7" stroke="#e2d5bd" stroke-width="0.9" stroke-linecap="round"/><path d="M87.0 68.9l-0.2 -1.2" stroke="#5c4a36" stroke-width="0.9" stroke-linecap="round"/><path d="M129.9 61.6l1.4 -0.8" stroke="#6b553e" stroke-width="0.9" stroke-linecap="round"/><path d="M148.2 77.0l1.2 -0.5" stroke="#5c4a36" stroke-width="0.9" stroke-linecap="round"/><path d="M121.7 58.4l1.0 -1.6" stroke="#5c4a36" stroke-width="0.9" stroke-linecap="round"/><path d="M133.2 85.4l2.0 -0.6" stroke="#e2d5bd" stroke-width="0.9" stroke-linecap="round"/><path d="M114.5 81.0l1.9 -1.2" stroke="#e2d5bd" stroke-width="0.9" stroke-linecap="round"/><path d="M141.0 75.4l1.0 -0.3" stroke="#4e3d2c" stroke-width="0.9" stroke-linecap="round"/><path d="M142.2 70.7l1.2 -1.6" stroke="#4e3d2c" stroke-width="0.9" stroke-linecap="round"/><path d="M138.7 57.4l1.0 -1.1" stroke="#e2d5bd" stroke-width="0.9" stroke-linecap="round"/><path d="M105.2 58.2l0.5 -0.9" stroke="#f4eee2" stroke-width="0.9" stroke-linecap="round"/><path d="M133.7 79.1l2.0 -0.8" stroke="#4e3d2c" stroke-width="0.9" stroke-linecap="round"/><path d="M133.6 81.0l1.6 -1.0" stroke="#f4eee2" stroke-width="0.9" stroke-linecap="round"/><path d="M108.5 59.2l0.1 -1.9" stroke="#4e3d2c" stroke-width="0.9" stroke-linecap="round"/><path d="M141.0 83.8l1.9 -1.1" stroke="#4e3d2c" stroke-width="0.9" stroke-linecap="round"/><path d="M136.7 82.2l2.2 0.1" stroke="#b9a382" stroke-width="0.9" stroke-linecap="round"/><path d="M135.8 79.6l1.3 -0.1" stroke="#e2d5bd" stroke-width="0.9" stroke-linecap="round"/><path d="M102.5 48.8l-0.4 -2.1" stroke="#4e3d2c" stroke-width="0.9" stroke-linecap="round"/><path d="M89.7 65.9l-0.7 -1.9" stroke="#f4eee2" stroke-width="0.9" stroke-linecap="round"/><path d="M98.5 73.2l0.5 -1.5" stroke="#e2d5bd" stroke-width="0.9" stroke-linecap="round"/><path d="M132.0 59.4l1.5 -0.9" stroke="#6b553e" stroke-width="0.9" stroke-linecap="round"/><path d="M90.5 69.3l0.1 -1.9" stroke="#6b553e" stroke-width="0.9" stroke-linecap="round"/><path d="M125.7 70.4l1.3 -1.2" stroke="#4e3d2c" stroke-width="0.9" stroke-linecap="round"/><path d="M130.7 64.5l0.8 -1.5" stroke="#e2d5bd" stroke-width="0.9" stroke-linecap="round"/><path d="M121.7 48.5l0.8 -2.1" stroke="#f4eee2" stroke-width="0.9" stroke-linecap="round"/><path d="M80.1 63.9l-1.4 -1.8" stroke="#5c4a36" stroke-width="0.9" stroke-linecap="round"/><path d="M112.8 78.3l0.7 -2.0" stroke="#f4eee2" stroke-width="0.9" stroke-linecap="round"/><path d="M136.8 53.9l1.5 -0.8" stroke="#6b553e" stroke-width="0.9" stroke-linecap="round"/><path d="M142.6 61.6l1.2 -0.4" stroke="#4e3d2c" stroke-width="0.9" stroke-linecap="round"/><path d="M145.2 82.6l1.9 -0.2" stroke="#9c8464" stroke-width="0.9" stroke-linecap="round"/><path d="M118.2 52.2l1.1 -1.7" stroke="#f4eee2" stroke-width="0.9" stroke-linecap="round"/><path d="M121.7 56.1l0.6 -1.7" stroke="#4e3d2c" stroke-width="0.9" stroke-linecap="round"/><path d="M133.1 56.2l0.9 -1.4" stroke="#5c4a36" stroke-width="0.9" stroke-linecap="round"/><path d="M92.3 53.5l0.4 -2.2" stroke="#6b553e" stroke-width="0.9" stroke-linecap="round"/><path d="M133.2 76.6l1.3 -0.4" stroke="#f4eee2" stroke-width="0.9" stroke-linecap="round"/><path d="M137.0 75.1l1.2 -1.1" stroke="#9c8464" stroke-width="0.9" stroke-linecap="round"/><path d="M134.6 56.5l0.6 -1.1" stroke="#f4eee2" stroke-width="0.9" stroke-linecap="round"/><path d="M102.2 64.7l-0.0 -1.8" stroke="#b9a382" stroke-width="0.9" stroke-linecap="round"/><path d="M98.9 67.7l-0.4 -1.6" stroke="#b9a382" stroke-width="0.9" stroke-linecap="round"/><path d="M134.7 71.5l1.1 -0.8" stroke="#9c8464" stroke-width="0.9" stroke-linecap="round"/><path d="M111.3 67.9l0.6 -1.2" stroke="#e2d5bd" stroke-width="0.9" stroke-linecap="round"/><path d="M105.9 61.2l0.2 -1.4" stroke="#f4eee2" stroke-width="0.9" stroke-linecap="round"/><path d="M125.0 66.0l1.5 -0.9" stroke="#4e3d2c" stroke-width="0.9" stroke-linecap="round"/><path d="M141.1 77.3l1.6 -0.9" stroke="#f4eee2" stroke-width="0.9" stroke-linecap="round"/><path d="M149.2 72.6l1.4 -1.2" stroke="#4e3d2c" stroke-width="0.9" stroke-linecap="round"/><path d="M136.5 71.4l1.3 -0.6" stroke="#5c4a36" stroke-width="0.9" stroke-linecap="round"/><path d="M117.4 63.3l0.3 -1.1" stroke="#4e3d2c" stroke-width="0.9" stroke-linecap="round"/><path d="M122.7 80.7l1.1 -0.7" stroke="#4e3d2c" stroke-width="0.9" stroke-linecap="round"/><path d="M101.6 68.9l0.8 -1.6" stroke="#b9a382" stroke-width="0.9" stroke-linecap="round"/><path d="M83.2 56.9l-0.5 -1.7" stroke="#efe6d4" stroke-width="0.9" stroke-linecap="round"/><path d="M103.8 49.3l-0.2 -1.9" stroke="#5c4a36" stroke-width="0.9" stroke-linecap="round"/><path d="M85.6 55.8l-0.8 -1.1" stroke="#6b553e" stroke-width="0.9" stroke-linecap="round"/><path d="M148.8 69.7l1.1 -0.1" stroke="#5c4a36" stroke-width="0.9" stroke-linecap="round"/><path d="M108.3 54.3l0.9 -1.9" stroke="#f4eee2" stroke-width="0.9" stroke-linecap="round"/><path d="M107.4 73.1l0.7 -1.0" stroke="#5c4a36" stroke-width="0.9" stroke-linecap="round"/><path d="M123.8 50.8l0.3 -1.2" stroke="#e2d5bd" stroke-width="0.9" stroke-linecap="round"/><path d="M108.3 62.8l0.1 -1.3" stroke="#4e3d2c" stroke-width="0.9" stroke-linecap="round"/><path d="M87.8 53.7l-0.7 -1.3" stroke="#4e3d2c" stroke-width="0.9" stroke-linecap="round"/><path d="M109.2 72.8l1.4 -1.4" stroke="#4e3d2c" stroke-width="0.9" stroke-linecap="round"/><path d="M121.5 60.5l1.1 -1.9" stroke="#4e3d2c" stroke-width="0.9" stroke-linecap="round"/><path d="M146.3 70.1l0.9 -0.8" stroke="#f4eee2" stroke-width="0.9" stroke-linecap="round"/><path d="M129.4 86.4l1.5 0.0" stroke="#9c8464" stroke-width="0.9" stroke-linecap="round"/><path d="M119.0 77.3l1.6 -1.6" stroke="#5c4a36" stroke-width="0.9" stroke-linecap="round"/><path d="M99.0 62.2l-0.3 -2.1" stroke="#4e3d2c" stroke-width="0.9" stroke-linecap="round"/><path d="M94.7 72.3l-0.9 -1.9" stroke="#b9a382" stroke-width="0.9" stroke-linecap="round"/><path d="M149.2 82.9l1.6 0.3" stroke="#4e3d2c" stroke-width="0.9" stroke-linecap="round"/><path d="M120.3 64.4l0.9 -0.6" stroke="#5c4a36" stroke-width="0.9" stroke-linecap="round"/><path d="M82.1 57.9l-1.4 -1.6" stroke="#b9a382" stroke-width="0.9" stroke-linecap="round"/><path d="M143.7 80.8l1.3 -0.9" stroke="#e2d5bd" stroke-width="0.9" stroke-linecap="round"/><path d="M81.7 67.2l-0.4 -1.2" stroke="#efe6d4" stroke-width="0.9" stroke-linecap="round"/><path d="M96.0 61.9l0.6 -2.1" stroke="#f4eee2" stroke-width="0.9" stroke-linecap="round"/><path d="M134.7 75.8l1.3 -0.5" stroke="#e2d5bd" stroke-width="0.9" stroke-linecap="round"/><path d="M111.3 51.1l0.6 -1.0" stroke="#efe6d4" stroke-width="0.9" stroke-linecap="round"/><path d="M116.7 77.8l0.9 -1.6" stroke="#f4eee2" stroke-width="0.9" stroke-linecap="round"/><path d="M141.8 57.2l1.2 -1.0" stroke="#4e3d2c" stroke-width="0.9" stroke-linecap="round"/><path d="M110.7 66.2l1.1 -1.6" stroke="#e2d5bd" stroke-width="0.9" stroke-linecap="round"/><path d="M140.4 72.2l1.8 -0.2" stroke="#6b553e" stroke-width="0.9" stroke-linecap="round"/><path d="M125.0 82.0l1.0 -0.7" stroke="#9c8464" stroke-width="0.9" stroke-linecap="round"/><path d="M111.4 79.8l1.1 -1.9" stroke="#9c8464" stroke-width="0.9" stroke-linecap="round"/><path d="M79.0 62.5l-0.9 -2.1" stroke="#9c8464" stroke-width="0.9" stroke-linecap="round"/><path d="M137.6 75.3l1.3 -0.3" stroke="#b9a382" stroke-width="0.9" stroke-linecap="round"/><path d="M112.0 68.8l0.3 -1.3" stroke="#6b553e" stroke-width="0.9" stroke-linecap="round"/><path d="M117.8 63.4l0.3 -1.1" stroke="#b9a382" stroke-width="0.9" stroke-linecap="round"/><path d="M118.5 50.3l0.9 -2.1" stroke="#e2d5bd" stroke-width="0.9" stroke-linecap="round"/><path d="M104.4 69.5l0.1 -1.0" stroke="#9c8464" stroke-width="0.9" stroke-linecap="round"/><path d="M110.0 61.9l1.2 -1.9" stroke="#e2d5bd" stroke-width="0.9" stroke-linecap="round"/><path d="M126.5 53.5l0.4 -1.2" stroke="#efe6d4" stroke-width="0.9" stroke-linecap="round"/><path d="M90.3 67.8l-1.1 -1.7" stroke="#6b553e" stroke-width="0.9" stroke-linecap="round"/><path d="M128.1 85.8l1.9 0.2" stroke="#4e3d2c" stroke-width="0.9" stroke-linecap="round"/><path d="M80.9 58.1l-0.2 -1.9" stroke="#f4eee2" stroke-width="0.9" stroke-linecap="round"/><path d="M116.1 53.8l1.0 -2.0" stroke="#9c8464" stroke-width="0.9" stroke-linecap="round"/><path d="M114.7 59.9l1.1 -1.0" stroke="#4e3d2c" stroke-width="0.9" stroke-linecap="round"/><path d="M133.0 57.6l0.7 -1.3" stroke="#4e3d2c" stroke-width="0.9" stroke-linecap="round"/><path d="M125.6 52.9l1.2 -1.2" stroke="#e2d5bd" stroke-width="0.9" stroke-linecap="round"/><path d="M116.9 53.0l0.2 -1.1" stroke="#6b553e" stroke-width="0.9" stroke-linecap="round"/><path d="M86.6 67.6l-0.6 -1.6" stroke="#f4eee2" stroke-width="0.9" stroke-linecap="round"/><path d="M110.6 78.3l1.0 -0.9" stroke="#5c4a36" stroke-width="0.9" stroke-linecap="round"/><path d="M93.1 50.0l-0.2 -1.5" stroke="#e2d5bd" stroke-width="0.9" stroke-linecap="round"/><path d="M111.6 47.8l1.4 -1.8" stroke="#4e3d2c" stroke-width="0.9" stroke-linecap="round"/><path d="M109.8 67.6l1.2 -1.3" stroke="#5c4a36" stroke-width="0.9" stroke-linecap="round"/><path d="M89.7 57.2l0.0 -2.0" stroke="#e2d5bd" stroke-width="0.9" stroke-linecap="round"/><path d="M125.3 64.2l0.9 -1.4" stroke="#b9a382" stroke-width="0.9" stroke-linecap="round"/><path d="M93.3 52.7l-0.4 -1.4" stroke="#6b553e" stroke-width="0.9" stroke-linecap="round"/><path d="M129.8 64.4l0.5 -0.9" stroke="#6b553e" stroke-width="0.9" stroke-linecap="round"/><path d="M132.6 81.2l1.4 -0.2" stroke="#4e3d2c" stroke-width="0.9" stroke-linecap="round"/><path d="M100.5 50.4l0.5 -1.9" stroke="#f4eee2" stroke-width="0.9" stroke-linecap="round"/><path d="M108.2 74.4l0.3 -2.2" stroke="#4e3d2c" stroke-width="0.9" stroke-linecap="round"/><path d="M129.4 74.5l1.0 -1.2" stroke="#efe6d4" stroke-width="0.9" stroke-linecap="round"/><path d="M91.6 63.2l-0.1 -1.6" stroke="#5c4a36" stroke-width="0.9" stroke-linecap="round"/><path d="M89.2 57.3l-0.2 -1.5" stroke="#b9a382" stroke-width="0.9" stroke-linecap="round"/><path d="M94.0 50.3l0.4 -1.7" stroke="#b9a382" stroke-width="0.9" stroke-linecap="round"/><path d="M138.3 66.4l1.0 -1.3" stroke="#5c4a36" stroke-width="0.9" stroke-linecap="round"/><path d="M130.8 79.9l1.1 -0.2" stroke="#e2d5bd" stroke-width="0.9" stroke-linecap="round"/><path d="M93.0 55.5l0.3 -1.3" stroke="#5c4a36" stroke-width="0.9" stroke-linecap="round"/><path d="M128.9 61.8l1.1 -0.8" stroke="#b9a382" stroke-width="0.9" stroke-linecap="round"/><path d="M142.3 73.4l1.6 -1.4" stroke="#6b553e" stroke-width="0.9" stroke-linecap="round"/><path d="M83.1 62.4l-0.3 -1.0" stroke="#4e3d2c" stroke-width="0.9" stroke-linecap="round"/><path d="M98.2 71.4l0.6 -1.9" stroke="#b9a382" stroke-width="0.9" stroke-linecap="round"/><path d="M150.6 73.7l1.7 -0.0" stroke="#9c8464" stroke-width="0.9" stroke-linecap="round"/><path d="M98.6 54.8l0.2 -1.1" stroke="#e2d5bd" stroke-width="0.9" stroke-linecap="round"/><path d="M114.3 71.3l0.5 -1.3" stroke="#5c4a36" stroke-width="0.9" stroke-linecap="round"/><path d="M113.8 64.0l0.7 -1.0" stroke="#efe6d4" stroke-width="0.9" stroke-linecap="round"/><path d="M129.6 79.6l1.2 -0.6" stroke="#f4eee2" stroke-width="0.9" stroke-linecap="round"/><path d="M117.0 58.6l0.7 -0.8" stroke="#efe6d4" stroke-width="0.9" stroke-linecap="round"/><path d="M112.1 77.4l0.7 -1.4" stroke="#e2d5bd" stroke-width="0.9" stroke-linecap="round"/><path d="M130.0 65.6l0.7 -1.3" stroke="#9c8464" stroke-width="0.9" stroke-linecap="round"/><path d="M108.1 77.6l0.5 -1.4" stroke="#4e3d2c" stroke-width="0.9" stroke-linecap="round"/><path d="M137.5 55.9l0.7 -0.9" stroke="#5c4a36" stroke-width="0.9" stroke-linecap="round"/><path d="M112.5 61.9l0.4 -1.6" stroke="#5c4a36" stroke-width="0.9" stroke-linecap="round"/><path d="M144.7 82.5l1.6 0.1" stroke="#f4eee2" stroke-width="0.9" stroke-linecap="round"/><path d="M124.7 76.6l0.8 -0.7" stroke="#9c8464" stroke-width="0.9" stroke-linecap="round"/><path d="M144.4 64.4l1.4 -1.5" stroke="#e2d5bd" stroke-width="0.9" stroke-linecap="round"/><path d="M114.2 50.8l0.3 -1.6" stroke="#efe6d4" stroke-width="0.9" stroke-linecap="round"/><path d="M132.1 50.9l0.6 -1.0" stroke="#4e3d2c" stroke-width="0.9" stroke-linecap="round"/><path d="M123.3 54.1l0.3 -1.8" stroke="#9c8464" stroke-width="0.9" stroke-linecap="round"/><path d="M97.2 54.6l0.6 -2.1" stroke="#9c8464" stroke-width="0.9" stroke-linecap="round"/><path d="M111.2 79.2l1.0 -0.6" stroke="#e2d5bd" stroke-width="0.9" stroke-linecap="round"/><path d="M114.8 82.6l0.9 -1.3" stroke="#9c8464" stroke-width="0.9" stroke-linecap="round"/><path d="M90.8 59.4l-0.4 -1.4" stroke="#9c8464" stroke-width="0.9" stroke-linecap="round"/><path d="M93.2 71.3l-0.3 -1.0" stroke="#efe6d4" stroke-width="0.9" stroke-linecap="round"/><path d="M78.3 62.4l-1.2 -1.3" stroke="#b9a382" stroke-width="0.9" stroke-linecap="round"/><path d="M117.3 62.7l0.8 -0.8" stroke="#efe6d4" stroke-width="0.9" stroke-linecap="round"/><path d="M133.9 78.2l2.1 -0.2" stroke="#efe6d4" stroke-width="0.9" stroke-linecap="round"/><path d="M110.5 55.1l-0.1 -1.1" stroke="#6b553e" stroke-width="0.9" stroke-linecap="round"/><path d="M106.4 65.6l0.8 -1.2" stroke="#e2d5bd" stroke-width="0.9" stroke-linecap="round"/><path d="M114.3 67.2l0.9 -1.9" stroke="#9c8464" stroke-width="0.9" stroke-linecap="round"/><path d="M91.4 62.7l0.1 -1.8" stroke="#efe6d4" stroke-width="0.9" stroke-linecap="round"/><path d="M96.4 49.6l0.5 -1.4" stroke="#6b553e" stroke-width="0.9" stroke-linecap="round"/><path d="M124.7 51.9l0.7 -0.9" stroke="#5c4a36" stroke-width="0.9" stroke-linecap="round"/><path d="M102.5 63.3l-0.2 -1.8" stroke="#b9a382" stroke-width="0.9" stroke-linecap="round"/><path d="M102.5 57.1l-0.3 -1.9" stroke="#5c4a36" stroke-width="0.9" stroke-linecap="round"/><path d="M139.7 62.1l0.9 -0.5" stroke="#9c8464" stroke-width="0.9" stroke-linecap="round"/><path d="M144.1 59.8l0.8 -0.7" stroke="#b9a382" stroke-width="0.9" stroke-linecap="round"/><path d="M137.3 69.3l0.7 -1.0" stroke="#5c4a36" stroke-width="0.9" stroke-linecap="round"/><path d="M87.6 67.9l-0.8 -1.5" stroke="#5c4a36" stroke-width="0.9" stroke-linecap="round"/><path d="M130.6 77.5l0.9 -1.0" stroke="#efe6d4" stroke-width="0.9" stroke-linecap="round"/><path d="M127.6 69.5l1.6 -1.2" stroke="#9c8464" stroke-width="0.9" stroke-linecap="round"/><path d="M127.1 77.9l0.9 -0.7" stroke="#e2d5bd" stroke-width="0.9" stroke-linecap="round"/><path d="M113.0 69.6l0.3 -1.0" stroke="#6b553e" stroke-width="0.9" stroke-linecap="round"/><path d="M120.8 75.6l0.9 -0.8" stroke="#6b553e" stroke-width="0.9" stroke-linecap="round"/><path d="M144.3 64.9l1.8 -0.6" stroke="#9c8464" stroke-width="0.9" stroke-linecap="round"/><path d="M123.3 51.2l0.3 -1.3" stroke="#efe6d4" stroke-width="0.9" stroke-linecap="round"/><path d="M150.0 71.9l1.7 -0.1" stroke="#4e3d2c" stroke-width="0.9" stroke-linecap="round"/><path d="M138.0 77.5l0.9 -0.7" stroke="#b9a382" stroke-width="0.9" stroke-linecap="round"/><path d="M122.4 83.1l1.4 -1.3" stroke="#b9a382" stroke-width="0.9" stroke-linecap="round"/><path d="M91.4 57.6l0.3 -1.6" stroke="#5c4a36" stroke-width="0.9" stroke-linecap="round"/><path d="M128.9 63.0l0.7 -1.1" stroke="#e2d5bd" stroke-width="0.9" stroke-linecap="round"/><path d="M110.5 61.0l0.6 -1.7" stroke="#e2d5bd" stroke-width="0.9" stroke-linecap="round"/><path d="M105.7 52.9l0.4 -2.2" stroke="#f4eee2" stroke-width="0.9" stroke-linecap="round"/><path d="M107.6 53.9l0.7 -1.0" stroke="#9c8464" stroke-width="0.9" stroke-linecap="round"/><path d="M125.6 56.7l1.4 -1.7" stroke="#efe6d4" stroke-width="0.9" stroke-linecap="round"/><path d="M112.1 62.2l0.6 -1.1" stroke="#f4eee2" stroke-width="0.9" stroke-linecap="round"/><path d="M137.8 83.5l1.8 -0.9" stroke="#5c4a36" stroke-width="0.9" stroke-linecap="round"/><path d="M117.6 71.9l0.8 -0.8" stroke="#5c4a36" stroke-width="0.9" stroke-linecap="round"/><path d="M136.1 75.2l1.5 -0.4" stroke="#f4eee2" stroke-width="0.9" stroke-linecap="round"/><path d="M106.5 67.9l0.0 -1.3" stroke="#f4eee2" stroke-width="0.9" stroke-linecap="round"/><path d="M104.7 52.4l-0.2 -1.7" stroke="#9c8464" stroke-width="0.9" stroke-linecap="round"/><path d="M86.7 71.2l-1.2 -1.4" stroke="#b9a382" stroke-width="0.9" stroke-linecap="round"/><path d="M119.0 69.1l0.9 -1.8" stroke="#efe6d4" stroke-width="0.9" stroke-linecap="round"/><path d="M123.8 71.6l1.1 -0.5" stroke="#e2d5bd" stroke-width="0.9" stroke-linecap="round"/><path d="M103.4 66.6l-0.3 -1.8" stroke="#efe6d4" stroke-width="0.9" stroke-linecap="round"/><path d="M86.1 69.7l-0.3 -1.1" stroke="#4e3d2c" stroke-width="0.9" stroke-linecap="round"/><path d="M89.6 54.9l-0.8 -1.9" stroke="#efe6d4" stroke-width="0.9" stroke-linecap="round"/><path d="M112.7 56.8l0.3 -1.6" stroke="#e2d5bd" stroke-width="0.9" stroke-linecap="round"/><path d="M106.7 78.4l0.8 -0.8" stroke="#6b553e" stroke-width="0.9" stroke-linecap="round"/><path d="M109.7 67.1l0.0 -1.3" stroke="#e2d5bd" stroke-width="0.9" stroke-linecap="round"/><path d="M105.0 59.4l-0.3 -2.2" stroke="#b9a382" stroke-width="0.9" stroke-linecap="round"/><path d="M127.5 71.1l1.6 -1.2" stroke="#efe6d4" stroke-width="0.9" stroke-linecap="round"/><path d="M88.1 63.5l0.0 -1.5" stroke="#4e3d2c" stroke-width="0.9" stroke-linecap="round"/><path d="M118.2 65.8l0.8 -1.0" stroke="#6b553e" stroke-width="0.9" stroke-linecap="round"/><path d="M80.3 61.9l-0.4 -2.2" stroke="#4e3d2c" stroke-width="0.9" stroke-linecap="round"/><path d="M94.5 67.0l-0.5 -1.2" stroke="#5c4a36" stroke-width="0.9" stroke-linecap="round"/><path d="M143.1 64.7l2.0 -1.0" stroke="#5c4a36" stroke-width="0.9" stroke-linecap="round"/><path d="M124.8 74.2l0.9 -0.5" stroke="#b9a382" stroke-width="0.9" stroke-linecap="round"/></g>
<clipPath id="hc"><path d="M74.2 63.5C75.5 59 77.5 57 79.5 55.5C84 52 90 49.5 96 48C103 46.5 111 46 118.6 46.5C126 47 134 49.5 140 53.5C146 58 150 64 152 70C153 74 152.8 79 151 86.4C143 87.5 135 88.5 129 88.3C121 87 114 85 109.4 82.4C106 80 103 77 100 75C97 73.3 94.5 72.6 92 72.6L79 72.6C77 72.2 75.5 71.5 75 70z"/></clipPath>
<path d="M76 79c3-1.5 7-1 9.5 1c2 1.5 1.5 4-1 4.5c-3 0.6-6.5-0.5-8.5-2.5z" fill="#eedfd9" opacity="0.9"/>
<path d="M94.5 70.5c1-3.5 5.5-4.5 8-1.8c2 2.2 1.2 6.5-1 8.8c-3-0.2-6.8-3.2-7-7z" fill="#d8c6bd" stroke="#c0aca0" stroke-width="0.4"/>
<ellipse cx="87.7" cy="81.5" rx="1.9" ry="1.8" fill="#1d1a1a"/>
<ellipse cx="72.6" cy="89.3" rx="2.2" ry="2" fill="#2a2020"/>
<ellipse cx="92.5" cy="96" rx="3.8" ry="1.6" fill="#e0ae9e"/>
<ellipse cx="106.7" cy="98.6" rx="4.2" ry="1.9" fill="#e0ae9e"/>
<ellipse cx="129" cy="97.8" rx="4.2" ry="1.7" fill="#d9a898"/>
</svg>
</div>
<div class="t" style="left:16.00px;top:161.62px;font-size:6.8px;line-height:8.16px;color:#606060;font-weight:normal;transform:scaleX(0.952);transform-origin:0 50%;">49</div>
<svg style="left:165.6px;top:162.39999999999998px;" width="5" height="5" viewBox="0 0 5 5"><path d="M2.5 0.2L3.2 1.8L4.85 1.85L3.55 2.9L4 4.6L2.5 3.65L1 4.6L1.45 2.9L0.15 1.85L1.8 1.8z" fill="#505050"/></svg>
<div class="t" style="left:186.67px;top:161.62px;font-size:6.8px;line-height:8.16px;color:#606060;font-weight:normal;transform:scaleX(0.952);transform-origin:0 50%;">50</div>
<svg style="left:336.27px;top:162.39999999999998px;" width="5" height="5" viewBox="0 0 5 5"><path d="M2.5 0.2L3.2 1.8L4.85 1.85L3.55 2.9L4 4.6L2.5 3.65L1 4.6L1.45 2.9L0.15 1.85L1.8 1.8z" fill="#505050"/></svg>
<div class="t" style="left:357.33px;top:161.62px;font-size:6.8px;line-height:8.16px;color:#606060;font-weight:normal;transform:scaleX(0.952);transform-origin:0 50%;">51</div>
<svg style="left:506.92999999999995px;top:162.39999999999998px;" width="5" height="5" viewBox="0 0 5 5"><path d="M2.5 0.2L3.2 1.8L4.85 1.85L3.55 2.9L4 4.6L2.5 3.65L1 4.6L1.45 2.9L0.15 1.85L1.8 1.8z" fill="#505050"/></svg>
<div class="t" style="left:528.00px;top:161.62px;font-size:6.8px;line-height:8.16px;color:#606060;font-weight:normal;transform:scaleX(0.952);transform-origin:0 50%;">52</div>
<svg style="left:677.6px;top:162.39999999999998px;" width="5" height="5" viewBox="0 0 5 5"><path d="M2.5 0.2L3.2 1.8L4.85 1.85L3.55 2.9L4 4.6L2.5 3.65L1 4.6L1.45 2.9L0.15 1.85L1.8 1.8z" fill="#505050"/></svg>
<div class="t" style="left:16.00px;top:301.12px;font-size:6.8px;line-height:8.16px;color:#606060;font-weight:normal;transform:scaleX(0.952);transform-origin:0 50%;">53</div>
<div class="t" style="left:186.67px;top:301.12px;font-size:6.8px;line-height:8.16px;color:#606060;font-weight:normal;transform:scaleX(0.952);transform-origin:0 50%;">54</div>
<svg style="left:336.27px;top:301.9px;" width="5" height="5" viewBox="0 0 5 5"><path d="M2.5 0.2L3.2 1.8L4.85 1.85L3.55 2.9L4 4.6L2.5 3.65L1 4.6L1.45 2.9L0.15 1.85L1.8 1.8z" fill="#505050"/></svg>
<div class="t" style="left:357.33px;top:301.12px;font-size:6.8px;line-height:8.16px;color:#606060;font-weight:normal;transform:scaleX(0.952);transform-origin:0 50%;">55</div>
<svg style="left:506.92999999999995px;top:301.9px;" width="5" height="5" viewBox="0 0 5 5"><path d="M2.5 0.2L3.2 1.8L4.85 1.85L3.55 2.9L4 4.6L2.5 3.65L1 4.6L1.45 2.9L0.15 1.85L1.8 1.8z" fill="#505050"/></svg>
<div class="t" style="left:528.00px;top:301.12px;font-size:6.8px;line-height:8.16px;color:#606060;font-weight:normal;transform:scaleX(0.952);transform-origin:0 50%;">56</div>
<svg style="left:677.6px;top:301.9px;" width="5" height="5" viewBox="0 0 5 5"><path d="M2.5 0.2L3.2 1.8L4.85 1.85L3.55 2.9L4 4.6L2.5 3.65L1 4.6L1.45 2.9L0.15 1.85L1.8 1.8z" fill="#505050"/></svg>
<div class="t" style="left:16.00px;top:440.52px;font-size:6.8px;line-height:8.16px;color:#606060;font-weight:normal;transform:scaleX(0.952);transform-origin:0 50%;">57</div>
<svg style="left:165.6px;top:441.29999999999995px;" width="5" height="5" viewBox="0 0 5 5"><path d="M2.5 0.2L3.2 1.8L4.85 1.85L3.55 2.9L4 4.6L2.5 3.65L1 4.6L1.45 2.9L0.15 1.85L1.8 1.8z" fill="#505050"/></svg>
<div class="t" style="left:186.67px;top:440.52px;font-size:6.8px;line-height:8.16px;color:#606060;font-weight:normal;transform:scaleX(0.952);transform-origin:0 50%;">58</div>
<div class="t" style="left:357.33px;top:440.52px;font-size:6.8px;line-height:8.16px;color:#606060;font-weight:normal;transform:scaleX(0.952);transform-origin:0 50%;">59</div>
<div class="t" style="left:528.00px;top:440.52px;font-size:6.8px;line-height:8.16px;color:#606060;font-weight:normal;transform:scaleX(0.952);transform-origin:0 50%;">60</div>
<svg style="left:677.6px;top:441.29999999999995px;" width="5" height="5" viewBox="0 0 5 5"><path d="M2.5 0.2L3.2 1.8L4.85 1.85L3.55 2.9L4 4.6L2.5 3.65L1 4.6L1.45 2.9L0.15 1.85L1.8 1.8z" fill="#505050"/></svg>
<div class="r" style="left:0px;top:0px;width:866px;height:15px;background:#b9492b"></div>
<svg style="left:640px;top:0px;overflow:hidden" width="226" height="15" viewBox="0 0 226 15"><g fill="#a9412a" opacity="0.75">
<rect x="19.4" y="0" width="1.8" height="7"/><rect x="22.6" y="0" width="1.9" height="10"/><rect x="25.9" y="0" width="1.8" height="8"/>
<rect x="29" y="0" width="2" height="15"/><rect x="32.3" y="0" width="1.4" height="9"/>
<path d="M40.6 0h1.6l2 4.5l-1 0.8z"/>
<path d="M49 0h5.5v15h-5.5z"/><path d="M60 0h4.6v15h-4.6z"/>
<rect x="68.3" y="0" width="1.7" height="15"/><rect x="72" y="0" width="1.5" height="15"/><rect x="74.8" y="0" width="1.5" height="15"/>
</g>
<g fill="none" stroke="#a9412a" opacity="0.6"><circle cx="100" cy="1" r="5" stroke-width="2.2"/><circle cx="124" cy="9" r="9" stroke-width="3"/><circle cx="175" cy="-4" r="13" stroke-width="3"/></g></svg>
<div class="t" style="left:10.40px;top:4.02px;font-size:6.3px;line-height:7.56px;color:#fff;font-weight:normal;transform:scaleX(0.858);transform-origin:0 50%;">Автосохранение</div>
<div class="r" style="left:54.6px;top:4.2px;width:17px;height:6.5px;border:0.8px solid #fff;border-radius:4px"></div>
<div class="r" style="left:56.3px;top:5.7px;width:3.5px;height:3.5px;background:#fff;border-radius:50%"></div>
<svg style="left:78px;top:3px;" width="9" height="9" viewBox="0 0 9 9"><path d="M0.5 0.5h6.5l1.5 1.5v6.5h-8z M2 0.5v2.5h4v-2.5 M2 8.5v-3h5v3" fill="none" stroke="#fff" stroke-width="0.8"/></svg>
<svg style="left:92px;top:3px;" width="12" height="9" viewBox="0 0 12 9"><path d="M2 3.5h4.5a2.5 2.5 0 0 1 0 5h-2 M2 3.5l2-2 M2 3.5l2 2" fill="none" stroke="#d98a76" stroke-width="0.8"/><path d="M9.5 4l1 1l1-1" fill="none" stroke="#d98a76" stroke-width="0.6"/></svg>
<svg style="left:109px;top:3px;" width="9" height="10" viewBox="0 0 9 10"><path d="M6.8 2.3a3.6 3.6 0 1 1 -4.6 0 M6.8 2.3v-2 M6.8 2.3h-2" fill="none" stroke="#fff" stroke-width="0.9"/></svg>
<svg style="left:121px;top:3px;" width="9" height="10" viewBox="0 0 9 10"><path d="M0.5 0.8h8 M1.2 0.8v4.5h6.6v-4.5 M4.5 5.3v3 M2.5 9l2-0.8l2 0.8 M3.5 2.5l1.8 1.2l-1.8 1.2z" fill="none" stroke="#fff" stroke-width="0.8"/></svg>
<svg style="left:136.5px;top:6.3px;" width="3.4" height="2.4" viewBox="0 0 3.4 2.4"><path d="M0.3 0.4L1.7 1.8L3.1 0.4" fill="none" stroke="#fff" stroke-width="0.7"/></svg>
<div class="t" style="left:211.00px;top:4.02px;font-size:6.3px;line-height:7.56px;color:#fff;font-weight:normal;transform:scaleX(0.831);transform-origin:0 50%;">Февраль_Утренние заставки</div>
<svg style="left:284.5px;top:6.3999999999999995px;" width="3.4" height="2.4" viewBox="0 0 3.4 2.4"><path d="M0.3 0.4L1.7 1.8L3.1 0.4" fill="none" stroke="#fff" stroke-width="0.7"/></svg>
<div class="r" style="left:354.8px;top:2.9px;width:164.8px;height:9.8px;background:#f5c4b2"></div>
<svg style="left:363px;top:4px;" width="8" height="8" viewBox="0 0 8 8"><circle cx="4.8" cy="3" r="2.2" fill="none" stroke="#6b3a2c" stroke-width="0.8"/><path d="M3.2 4.6l-2.4 2.4" stroke="#6b3a2c" stroke-width="0.9"/></svg>
<div class="t" style="left:377.00px;top:4.22px;font-size:6.3px;line-height:7.56px;color:#5a3a30;font-weight:normal;transform:scaleX(0.859);transform-origin:0 50%;">Поиск</div>
<div class="t" style="left:717.30px;top:4.02px;font-size:6.3px;line-height:7.56px;color:#fff;font-weight:normal;transform:scaleX(0.845);transform-origin:0 50%;">Жанна Гаврилова</div>
<div class="r" style="left:766.4px;top:2px;width:11px;height:11px;background:#6f868d;border-radius:50%"></div>
<div class="t" style="left:768.80px;top:4.90px;font-size:4.5px;line-height:5.40px;color:#e8eef0;font-weight:normal;transform:scaleX(0.971);transform-origin:0 50%;">ЖГ</div>
<svg style="left:790px;top:4.8px;" width="6" height="5.5" viewBox="0 0 6 5.5"><rect x="0.4" y="0.4" width="5.2" height="4.6" fill="none" stroke="#fff" stroke-width="0.7"/><path d="M0.4 1.6h5.2 M3 2.2v2 M2 3.2l1 1l1-1" fill="none" stroke="#fff" stroke-width="0.6"/></svg>
<div class="r" style="left:811.5px;top:7.4px;width:5.5px;height:0.7px;background:#fff"></div>
<svg style="left:832px;top:4.8px;" width="5.5" height="5.5" viewBox="0 0 5.5 5.5"><rect x="0.4" y="1.4" width="3.7" height="3.7" fill="none" stroke="#fff" stroke-width="0.7"/><path d="M1.4 1.4v-1h3.7v3.7h-1" fill="none" stroke="#fff" stroke-width="0.7"/></svg>
<svg style="left:852.5px;top:4.8px;" width="5.5" height="5.5" viewBox="0 0 5.5 5.5"><path d="M0.3 0.3l4.9 4.9 M5.2 0.3l-4.9 4.9" stroke="#fff" stroke-width="0.75"/></svg>
<div class="r" style="left:0px;top:15px;width:866px;height:13px;background:#f3f3f3"></div>
<div class="t" style="left:7.00px;top:18.42px;font-size:6.3px;line-height:7.56px;color:#3a3a3a;font-weight:normal;transform:scaleX(0.839);transform-origin:0 50%;">Файл</div>
<div class="t" style="left:33.80px;top:18.42px;font-size:6.3px;line-height:7.56px;color:#262626;font-weight:bold;transform:scaleX(0.913);transform-origin:0 50%;">Главная</div>
<div class="r" style="left:33.8px;top:26.4px;width:23.5px;height:1.2px;background:#c43e1c"></div>
<div class="t" style="left:69.80px;top:18.42px;font-size:6.3px;line-height:7.56px;color:#3a3a3a;font-weight:normal;transform:scaleX(0.863);transform-origin:0 50%;">Вставка</div>
<div class="t" style="left:104.00px;top:18.42px;font-size:6.3px;line-height:7.56px;color:#3a3a3a;font-weight:normal;transform:scaleX(0.898);transform-origin:0 50%;">Рисование</div>
<div class="t" style="left:147.00px;top:18.42px;font-size:6.3px;line-height:7.56px;color:#3a3a3a;font-weight:normal;transform:scaleX(0.947);transform-origin:0 50%;">Конструктор</div>
<div class="t" style="left:195.00px;top:18.42px;font-size:6.3px;line-height:7.56px;color:#3a3a3a;font-weight:normal;transform:scaleX(0.941);transform-origin:0 50%;">Переходы</div>
<div class="t" style="left:237.60px;top:18.42px;font-size:6.3px;line-height:7.56px;color:#3a3a3a;font-weight:normal;transform:scaleX(0.899);transform-origin:0 50%;">Анимация</div>
<div class="t" style="left:278.80px;top:18.42px;font-size:6.3px;line-height:7.56px;color:#3a3a3a;font-weight:normal;transform:scaleX(0.919);transform-origin:0 50%;">Слайд-шоу</div>
<div class="t" style="left:322.60px;top:18.42px;font-size:6.3px;line-height:7.56px;color:#3a3a3a;font-weight:normal;transform:scaleX(0.923);transform-origin:0 50%;">Рецензирование</div>
<div class="t" style="left:382.00px;top:18.42px;font-size:6.3px;line-height:7.56px;color:#3a3a3a;font-weight:normal;transform:scaleX(0.877);transform-origin:0 50%;">Вид</div>
<div class="t" style="left:405.00px;top:18.42px;font-size:6.3px;line-height:7.56px;color:#3a3a3a;font-weight:normal;transform:scaleX(0.910);transform-origin:0 50%;">Справка</div>
<div class="t" style="left:441.00px;top:18.42px;font-size:6.3px;line-height:7.56px;color:#3a3a3a;font-weight:normal;transform:scaleX(0.967);transform-origin:0 50%;">Acrobat</div>
<div class="r" style="left:756.5px;top:17px;width:47.5px;height:10px;background:#fff;box-shadow:0 0 0.6px #d8d8d8"></div>
<svg style="left:759px;top:18.5px;" width="7" height="7" viewBox="0 0 7 7"><path d="M0.5 3v3.5h6v-2 M2.5 4.5l3.5-3.5 M3.5 1h2.5v2.5" fill="none" stroke="#c43e1c" stroke-width="0.7"/></svg>
<div class="t" style="left:768.00px;top:18.42px;font-size:6.3px;line-height:7.56px;color:#c43e1c;font-weight:bold;transform:scaleX(0.899);transform-origin:0 50%;">Поделиться</div>
<div class="r" style="left:808.5px;top:17px;width:52px;height:10px;background:#fdfdfd;box-shadow:0 0 0.6px #e0e0e0"></div>
<svg style="left:812px;top:19px;" width="7" height="6" viewBox="0 0 7 6"><path d="M0.5 0.5h6v4h-4l-2 1.5z" fill="none" stroke="#b0b0b0" stroke-width="0.7"/></svg>
<div class="t" style="left:821.00px;top:18.42px;font-size:6.3px;line-height:7.56px;color:#b2b2b2;font-weight:normal;transform:scaleX(0.990);transform-origin:0 50%;">Примечания</div>
<div class="r" style="left:0px;top:28px;width:866px;height:44px;background:#f3f3f3"></div>
<div class="r" style="left:0px;top:71.5px;width:866px;height:1px;background:#dadada"></div>
<svg style="left:9px;top:31.5px;" width="15" height="14" viewBox="0 0 15 14"><rect x="0.8" y="2" width="8.5" height="10.5" fill="none" stroke="#b8b8b8" stroke-width="0.9"/><rect x="3" y="0.8" width="4" height="2.2" fill="#f3f3f3" stroke="#b8b8b8" stroke-width="0.8"/><rect x="6" y="5" width="7.5" height="8.5" fill="#f3f3f3" stroke="#b8b8b8" stroke-width="0.9"/></svg>
<div class="t" style="left:4.80px;top:47.22px;font-size:6.3px;line-height:7.56px;color:#ababab;font-weight:normal;transform:scaleX(0.794);transform-origin:0 50%;">Вставить</div>
<svg style="left:13.5px;top:56.8px;" width="3.4" height="2.4" viewBox="0 0 3.4 2.4"><path d="M0.3 0.4L1.7 1.8L3.1 0.4" fill="none" stroke="#ababab" stroke-width="0.7"/></svg>
<svg style="left:30px;top:32.5px;" width="6" height="7" viewBox="0 0 6 7"><path d="M1 0.5l4 4.5 M5 0.5l-4 4.5" stroke="#a8a8a8" stroke-width="0.7" fill="none"/><circle cx="1.3" cy="5.8" r="1" fill="none" stroke="#a8a8a8" stroke-width="0.6"/><circle cx="4.7" cy="5.8" r="1" fill="none" stroke="#a8a8a8" stroke-width="0.6"/></svg>
<div class="t" style="left:37.40px;top:32.22px;font-size:6.3px;line-height:7.56px;color:#ababab;font-weight:normal;transform:scaleX(0.817);transform-origin:0 50%;">Вырезать</div>
<svg style="left:29px;top:43px;" width="7" height="8" viewBox="0 0 7 8"><rect x="0.5" y="0.5" width="4" height="5" fill="none" stroke="#a8a8a8" stroke-width="0.7"/><rect x="2.5" y="2.5" width="4" height="5" fill="#f3f3f3" stroke="#a8a8a8" stroke-width="0.7"/></svg>
<div class="t" style="left:37.40px;top:43.22px;font-size:6.3px;line-height:7.56px;color:#ababab;font-weight:normal;transform:scaleX(0.867);transform-origin:0 50%;">Копировать</div>
<svg style="left:71px;top:45.599999999999994px;" width="3.4" height="2.4" viewBox="0 0 3.4 2.4"><path d="M0.3 0.4L1.7 1.8L3.1 0.4" fill="none" stroke="#ababab" stroke-width="0.7"/></svg>
<svg style="left:29px;top:54px;" width="7" height="8" viewBox="0 0 7 8"><path d="M1 6.5l3-3 M3 2.5l2-2l2 2l-2 2z" stroke="#a8a8a8" stroke-width="0.8" fill="none"/></svg>
<div class="t" style="left:37.40px;top:54.12px;font-size:6.3px;line-height:7.56px;color:#ababab;font-weight:normal;transform:scaleX(0.860);transform-origin:0 50%;">Формат по образцу</div>
<div class="t" style="left:25.00px;top:64.72px;font-size:6.3px;line-height:7.56px;color:#555;font-weight:normal;transform:scaleX(0.818);transform-origin:0 50%;">Буфер обмена</div>
<svg style="left:87px;top:66.5px;" width="4" height="4" viewBox="0 0 4 4"><path d="M0.3 0.3h3.4v3.4h-3.4z M1.2 1.2l2 2 M3.2 1.8v1.4h-1.4" fill="none" stroke="#8a8a8a" stroke-width="0.5"/></svg>
<div class="r" style="left:92.1px;top:31px;width:0.8px;height:39px;background:#d4d4d4"></div>
<svg style="left:100.5px;top:32.5px;" width="14" height="12" viewBox="0 0 14 12"><rect x="1" y="2" width="12" height="9" fill="none" stroke="#6d6d6d" stroke-width="1"/><path d="M1 5h12 M7 5v6" stroke="#6d6d6d" stroke-width="0.9"/><path d="M3 0v5 M0.5 2.5h5" stroke="#4aa564" stroke-width="1"/></svg>
<div class="t" style="left:97.60px;top:47.22px;font-size:6.3px;line-height:7.56px;color:#3b3b3b;font-weight:normal;transform:scaleX(0.810);transform-origin:0 50%;">Создать</div>
<div class="t" style="left:97.60px;top:54.22px;font-size:6.3px;line-height:7.56px;color:#3b3b3b;font-weight:normal;transform:scaleX(0.879);transform-origin:0 50%;">слайд</div>
<svg style="left:113.5px;top:56.8px;" width="3.4" height="2.4" viewBox="0 0 3.4 2.4"><path d="M0.3 0.4L1.7 1.8L3.1 0.4" fill="none" stroke="#3b3b3b" stroke-width="0.7"/></svg>
<svg style="left:119px;top:33px;" width="8" height="6" viewBox="0 0 8 6"><rect x="0.5" y="0.5" width="7" height="5" fill="none" stroke="#b5b5b5" stroke-width="0.8"/><path d="M2 2h4 M2 3.5h4" stroke="#b5b5b5" stroke-width="0.6"/></svg>
<div class="t" style="left:128.00px;top:32.22px;font-size:6.3px;line-height:7.56px;color:#ababab;font-weight:normal;transform:scaleX(1.010);transform-origin:0 50%;">Макет</div>
<svg style="left:146.5px;top:34.8px;" width="3.4" height="2.4" viewBox="0 0 3.4 2.4"><path d="M0.3 0.4L1.7 1.8L3.1 0.4" fill="none" stroke="#ababab" stroke-width="0.7"/></svg>
<svg style="left:119px;top:44px;" width="8" height="6" viewBox="0 0 8 6"><rect x="0.5" y="0.5" width="7" height="5" fill="none" stroke="#b5b5b5" stroke-width="0.8"/><path d="M2 3h3" stroke="#b5b5b5" stroke-width="0.6"/></svg>
<div class="t" style="left:128.00px;top:43.22px;font-size:6.3px;line-height:7.56px;color:#ababab;font-weight:normal;transform:scaleX(0.843);transform-origin:0 50%;">Восстановить</div>
<svg style="left:119px;top:54px;" width="8" height="7" viewBox="0 0 8 7"><rect x="0.5" y="1.5" width="7" height="5" fill="none" stroke="#5d5d5d" stroke-width="0.8"/><path d="M0.5 0.8h7" stroke="#4aa564" stroke-width="1.2"/></svg>
<div class="t" style="left:128.00px;top:53.72px;font-size:6.3px;line-height:7.56px;color:#3b3b3b;font-weight:normal;transform:scaleX(0.864);transform-origin:0 50%;">Раздел</div>
<svg style="left:147px;top:56.3px;" width="3.4" height="2.4" viewBox="0 0 3.4 2.4"><path d="M0.3 0.4L1.7 1.8L3.1 0.4" fill="none" stroke="#3b3b3b" stroke-width="0.7"/></svg>
<div class="t" style="left:121.60px;top:64.72px;font-size:6.3px;line-height:7.56px;color:#555;font-weight:normal;transform:scaleX(0.742);transform-origin:0 50%;">Слайды</div>
<div class="r" style="left:168.3px;top:31px;width:0.8px;height:39px;background:#d4d4d4"></div>
<div class="r" style="left:172.2px;top:34.3px;width:65.2px;height:10.5px;background:#e6e6e6;border:0.6px solid #d6d6d6"></div>
<div class="r" style="left:237.4px;top:34.3px;width:19.9px;height:10.5px;background:#e6e6e6;border:0.6px solid #d6d6d6"></div>
<svg style="left:232px;top:38.3px;" width="3.4" height="2.4" viewBox="0 0 3.4 2.4"><path d="M0.3 0.4L1.7 1.8L3.1 0.4" fill="none" stroke="#c0c0c0" stroke-width="0.7"/></svg>
<svg style="left:252px;top:38.3px;" width="3.4" height="2.4" viewBox="0 0 3.4 2.4"><path d="M0.3 0.4L1.7 1.8L3.1 0.4" fill="none" stroke="#c0c0c0" stroke-width="0.7"/></svg>
<div class="t" style="left:259.50px;top:35.60px;font-size:7px;line-height:8.40px;color:#ababab;font-weight:normal;transform:scaleX(0.964);transform-origin:0 50%;">A</div>
<div class="t" style="left:264.00px;top:34.90px;font-size:3.5px;line-height:4.20px;color:#ababab;font-weight:normal;">^</div>
<div class="t" style="left:271.00px;top:36.02px;font-size:6.3px;line-height:7.56px;color:#ababab;font-weight:normal;transform:scaleX(1.190);transform-origin:0 50%;">A</div>
<div class="t" style="left:276.00px;top:35.10px;font-size:4px;line-height:4.80px;color:#ababab;font-weight:normal;">ˇ</div>
<div class="r" style="left:280.5px;top:35px;width:0.8px;height:9px;background:#d4d4d4"></div>
<div class="t" style="left:283.00px;top:35.60px;font-size:7px;line-height:8.40px;color:#ababab;font-weight:normal;transform:scaleX(1.285);transform-origin:0 50%;">A</div>
<div class="t" style="left:286.50px;top:38.20px;font-size:5.5px;line-height:6.60px;color:#ababab;font-weight:normal;transform:scaleX(1.278);transform-origin:0 50%;">ρ</div>
<div class="t" style="left:174.00px;top:50.02px;font-size:6.3px;line-height:7.56px;color:#9a9a9a;font-weight:bold;transform:scaleX(1.054);transform-origin:0 50%;">Ж</div>
<div class="t" style="left:185.00px;top:50.02px;font-size:6.3px;line-height:7.56px;color:#ababab;font-weight:normal;font-style:italic;transform:scaleX(0.943);transform-origin:0 50%;">К</div>
<div class="t" style="left:194.00px;top:50.02px;font-size:6.3px;line-height:7.56px;color:#ababab;font-weight:normal;transform:scaleX(1.191);transform-origin:0 50%;">Ч</div>
<div class="r" style="left:194px;top:56.8px;width:5px;height:0.6px;background:#a8a8a8"></div>
<div class="t" style="left:205.00px;top:50.02px;font-size:6.3px;line-height:7.56px;color:#ababab;font-weight:normal;transform:scaleX(0.952);transform-origin:0 50%;">S</div>
<div class="t" style="left:212.50px;top:50.80px;font-size:5px;line-height:6.00px;color:#ababab;font-weight:normal;transform:scaleX(1.169);transform-origin:0 50%;">ab</div>
<div class="r" style="left:212.5px;top:53.8px;width:6.5px;height:0.6px;background:#a8a8a8"></div>
<div class="t" style="left:222.50px;top:50.00px;font-size:5.5px;line-height:6.60px;color:#ababab;font-weight:normal;transform:scaleX(1.082);transform-origin:0 50%;">AV</div>
<div class="r" style="left:222.5px;top:56.5px;width:7.5px;height:0.5px;background:#a8a8a8"></div>
<svg style="left:232px;top:52.599999999999994px;" width="3.4" height="2.4" viewBox="0 0 3.4 2.4"><path d="M0.3 0.4L1.7 1.8L3.1 0.4" fill="none" stroke="#ababab" stroke-width="0.7"/></svg>
<div class="t" style="left:239.50px;top:50.02px;font-size:6.3px;line-height:7.56px;color:#ababab;font-weight:normal;transform:scaleX(1.103);transform-origin:0 50%;">Aa</div>
<svg style="left:249px;top:52.599999999999994px;" width="3.4" height="2.4" viewBox="0 0 3.4 2.4"><path d="M0.3 0.4L1.7 1.8L3.1 0.4" fill="none" stroke="#ababab" stroke-width="0.7"/></svg>
<div class="r" style="left:255.5px;top:49px;width:0.8px;height:9px;background:#d4d4d4"></div>
<svg style="left:259.5px;top:49.5px;" width="9" height="8" viewBox="0 0 9 8"><path d="M1.5 5.5l4-4.5l1.5 1.5l-4 4.5z" fill="none" stroke="#a8a8a8" stroke-width="0.7"/><path d="M0 7.3h8" stroke="#9a9a9a" stroke-width="1"/></svg>
<svg style="left:271px;top:52.599999999999994px;" width="3.4" height="2.4" viewBox="0 0 3.4 2.4"><path d="M0.3 0.4L1.7 1.8L3.1 0.4" fill="none" stroke="#ababab" stroke-width="0.7"/></svg>
<div class="t" style="left:277.00px;top:49.10px;font-size:6.5px;line-height:7.80px;color:#ababab;font-weight:normal;transform:scaleX(1.269);transform-origin:0 50%;">A</div>
<div class="r" style="left:276.5px;top:57px;width:6.5px;height:1px;background:#9a9a9a"></div>
<svg style="left:284.5px;top:52.599999999999994px;" width="3.4" height="2.4" viewBox="0 0 3.4 2.4"><path d="M0.3 0.4L1.7 1.8L3.1 0.4" fill="none" stroke="#ababab" stroke-width="0.7"/></svg>
<div class="t" style="left:219.00px;top:64.72px;font-size:6.3px;line-height:7.56px;color:#555;font-weight:normal;transform:scaleX(0.868);transform-origin:0 50%;">Шрифт</div>
<svg style="left:291px;top:66.5px;" width="4" height="4" viewBox="0 0 4 4"><path d="M0.3 0.3h3.4v3.4h-3.4z M1.2 1.2l2 2 M3.2 1.8v1.4h-1.4" fill="none" stroke="#8a8a8a" stroke-width="0.5"/></svg>
<div class="r" style="left:295.5px;top:31px;width:0.8px;height:39px;background:#d4d4d4"></div>
<svg style="left:300px;top:35.5px;" width="7" height="8.2" viewBox="0 0 7 8.2"><rect x="0" y="0.09999999999999998" width="1" height="1" fill="#b0b0b0"/><path d="M2 0.5h5" stroke="#b0b0b0" stroke-width="0.6"/><rect x="0" y="1.9" width="1" height="1" fill="#b0b0b0"/><path d="M2 2.3h5" stroke="#b0b0b0" stroke-width="0.6"/><rect x="0" y="3.6999999999999997" width="1" height="1" fill="#b0b0b0"/><path d="M2 4.1h5" stroke="#b0b0b0" stroke-width="0.6"/><rect x="0" y="5.5" width="1" height="1" fill="#b0b0b0"/><path d="M2 5.9h5" stroke="#b0b0b0" stroke-width="0.6"/></svg>
<svg style="left:311px;top:37.3px;" width="3.4" height="2.4" viewBox="0 0 3.4 2.4"><path d="M0.3 0.4L1.7 1.8L3.1 0.4" fill="none" stroke="#ababab" stroke-width="0.7"/></svg>
<svg style="left:317px;top:35.5px;" width="7" height="8.2" viewBox="0 0 7 8.2"><rect x="0" y="0.09999999999999998" width="1" height="1" fill="#b0b0b0"/><path d="M2 0.5h5" stroke="#b0b0b0" stroke-width="0.6"/><rect x="0" y="1.9" width="1" height="1" fill="#b0b0b0"/><path d="M2 2.3h5" stroke="#b0b0b0" stroke-width="0.6"/><rect x="0" y="3.6999999999999997" width="1" height="1" fill="#b0b0b0"/><path d="M2 4.1h5" stroke="#b0b0b0" stroke-width="0.6"/><rect x="0" y="5.5" width="1" height="1" fill="#b0b0b0"/><path d="M2 5.9h5" stroke="#b0b0b0" stroke-width="0.6"/></svg>
<svg style="left:327px;top:37.3px;" width="3.4" height="2.4" viewBox="0 0 3.4 2.4"><path d="M0.3 0.4L1.7 1.8L3.1 0.4" fill="none" stroke="#ababab" stroke-width="0.7"/></svg>
<div class="r" style="left:334.5px;top:35px;width:0.8px;height:8px;background:#d4d4d4"></div>
<svg style="left:338px;top:36px;" width="7" height="7" viewBox="0 0 7 7"><path d="M0 0.5h7" stroke="#b0b0b0" stroke-width="0.6"/><path d="M0 2.5h4.8999999999999995" stroke="#b0b0b0" stroke-width="0.6"/><path d="M0 4.5h7" stroke="#b0b0b0" stroke-width="0.6"/></svg>
<svg style="left:348px;top:36px;" width="7" height="7" viewBox="0 0 7 7"><path d="M0 0.5h7" stroke="#b0b0b0" stroke-width="0.6"/><path d="M0 2.5h4.8999999999999995" stroke="#b0b0b0" stroke-width="0.6"/><path d="M0 4.5h7" stroke="#b0b0b0" stroke-width="0.6"/></svg>
<div class="r" style="left:358.5px;top:35px;width:0.8px;height:8px;background:#d4d4d4"></div>
<svg style="left:362px;top:35.5px;" width="7" height="8.2" viewBox="0 0 7 8.2"><rect x="0" y="0.09999999999999998" width="1" height="1" fill="#b0b0b0"/><path d="M2 0.5h5" stroke="#b0b0b0" stroke-width="0.6"/><rect x="0" y="1.9" width="1" height="1" fill="#b0b0b0"/><path d="M2 2.3h5" stroke="#b0b0b0" stroke-width="0.6"/><rect x="0" y="3.6999999999999997" width="1" height="1" fill="#b0b0b0"/><path d="M2 4.1h5" stroke="#b0b0b0" stroke-width="0.6"/><rect x="0" y="5.5" width="1" height="1" fill="#b0b0b0"/><path d="M2 5.9h5" stroke="#b0b0b0" stroke-width="0.6"/></svg>
<svg style="left:371.5px;top:37.3px;" width="3.4" height="2.4" viewBox="0 0 3.4 2.4"><path d="M0.3 0.4L1.7 1.8L3.1 0.4" fill="none" stroke="#ababab" stroke-width="0.7"/></svg>
<svg style="left:301px;top:50px;" width="6.5" height="7.8" viewBox="0 0 6.5 7.8"><path d="M0 0.5h6.5" stroke="#b0b0b0" stroke-width="0.6"/><path d="M0 2.2h4.55" stroke="#b0b0b0" stroke-width="0.6"/><path d="M0 3.9h6.5" stroke="#b0b0b0" stroke-width="0.6"/><path d="M0 5.6h4.55" stroke="#b0b0b0" stroke-width="0.6"/></svg>
<svg style="left:310.5px;top:50px;" width="6.5" height="7.8" viewBox="0 0 6.5 7.8"><path d="M0.0 0.5h6.5" stroke="#b0b0b0" stroke-width="0.6"/><path d="M0.9750000000000001 2.2h4.55" stroke="#b0b0b0" stroke-width="0.6"/><path d="M0.0 3.9h6.5" stroke="#b0b0b0" stroke-width="0.6"/><path d="M0.9750000000000001 5.6h4.55" stroke="#b0b0b0" stroke-width="0.6"/></svg>
<svg style="left:320px;top:50px;" width="6.5" height="7.8" viewBox="0 0 6.5 7.8"><path d="M0.0 0.5h6.5" stroke="#b0b0b0" stroke-width="0.6"/><path d="M1.9500000000000002 2.2h4.55" stroke="#b0b0b0" stroke-width="0.6"/><path d="M0.0 3.9h6.5" stroke="#b0b0b0" stroke-width="0.6"/><path d="M1.9500000000000002 5.6h4.55" stroke="#b0b0b0" stroke-width="0.6"/></svg>
<svg style="left:330px;top:50px;" width="6.5" height="7.8" viewBox="0 0 6.5 7.8"><path d="M0 0.5h6.5" stroke="#b0b0b0" stroke-width="0.6"/><path d="M0 2.2h6.5" stroke="#b0b0b0" stroke-width="0.6"/><path d="M0 3.9h6.5" stroke="#b0b0b0" stroke-width="0.6"/><path d="M0 5.6h6.5" stroke="#b0b0b0" stroke-width="0.6"/></svg>
<div class="r" style="left:340.5px;top:49px;width:0.8px;height:8px;background:#d4d4d4"></div>
<svg style="left:345px;top:50.5px;" width="6" height="5" viewBox="0 0 6 5"><path d="M0.5 0.5v4 M3 0.5v4 M5.5 0.5v4" stroke="#c0c0c0" stroke-width="0.8"/></svg>
<svg style="left:353px;top:51.599999999999994px;" width="3.4" height="2.4" viewBox="0 0 3.4 2.4"><path d="M0.3 0.4L1.7 1.8L3.1 0.4" fill="none" stroke="#ababab" stroke-width="0.7"/></svg>
<svg style="left:377.5px;top:32px;" width="7" height="8" viewBox="0 0 7 8"><path d="M1 0.5v7 M0 6l1 1.5l1-1.5 M4 1h2.5 M5.2 1v5" stroke="#a8a8a8" stroke-width="0.6" fill="none"/></svg>
<div class="t" style="left:387.00px;top:32.22px;font-size:6.3px;line-height:7.56px;color:#ababab;font-weight:normal;transform:scaleX(0.854);transform-origin:0 50%;">Направление текста</div>
<svg style="left:439.5px;top:34.8px;" width="3.4" height="2.4" viewBox="0 0 3.4 2.4"><path d="M0.3 0.4L1.7 1.8L3.1 0.4" fill="none" stroke="#ababab" stroke-width="0.7"/></svg>
<svg style="left:377.5px;top:43.5px;" width="7" height="7" viewBox="0 0 7 7"><rect x="0.5" y="0.5" width="6" height="6" fill="none" stroke="#a8a8a8" stroke-width="0.6" stroke-dasharray="1 0.6"/><path d="M3.5 1.5v4" stroke="#a8a8a8" stroke-width="0.6"/></svg>
<div class="t" style="left:387.00px;top:43.22px;font-size:6.3px;line-height:7.56px;color:#ababab;font-weight:normal;transform:scaleX(0.785);transform-origin:0 50%;">Выровнять текст</div>
<svg style="left:427px;top:45.8px;" width="3.4" height="2.4" viewBox="0 0 3.4 2.4"><path d="M0.3 0.4L1.7 1.8L3.1 0.4" fill="none" stroke="#ababab" stroke-width="0.7"/></svg>
<svg style="left:377.5px;top:54.5px;" width="8" height="7" viewBox="0 0 8 7"><rect x="0.5" y="0.5" width="3" height="3" fill="none" stroke="#a8a8a8" stroke-width="0.6"/><rect x="3.5" y="3" width="4" height="3.5" fill="none" stroke="#a8a8a8" stroke-width="0.6"/></svg>
<div class="t" style="left:387.00px;top:54.22px;font-size:6.3px;line-height:7.56px;color:#ababab;font-weight:normal;transform:scaleX(0.883);transform-origin:0 50%;">Преобразовать в SmartArt</div>
<div class="t" style="left:368.00px;top:64.72px;font-size:6.3px;line-height:7.56px;color:#555;font-weight:normal;transform:scaleX(0.832);transform-origin:0 50%;">Абзац</div>
<svg style="left:457.5px;top:66.5px;" width="4" height="4" viewBox="0 0 4 4"><path d="M0.3 0.3h3.4v3.4h-3.4z M1.2 1.2l2 2 M3.2 1.8v1.4h-1.4" fill="none" stroke="#8a8a8a" stroke-width="0.5"/></svg>
<div class="r" style="left:462.5px;top:31px;width:0.8px;height:39px;background:#d4d4d4"></div>
<div class="r" style="left:467.3px;top:31.9px;width:61.1px;height:27.9px;background:#fff;border:0.6px solid #dcdcdc"></div>
<div class="r" style="left:522px;top:31.9px;width:6.4px;height:27.9px;border-left:0.6px solid #e0e0e0"></div>
<div class="t" style="left:523.20px;top:32.00px;font-size:5px;line-height:6.00px;color:#b8b8b8;font-weight:normal;">˄</div>
<div class="t" style="left:523.20px;top:41.50px;font-size:5px;line-height:6.00px;color:#b8b8b8;font-weight:normal;">˅</div>
<svg style="left:523.2px;top:54.3px;" width="3.4" height="2.4" viewBox="0 0 3.4 2.4"><path d="M0.3 0.4L1.7 1.8L3.1 0.4" fill="none" stroke="#b8b8b8" stroke-width="0.7"/></svg>
<svg style="left:469px;top:32px;" width="52" height="27" viewBox="0 0 52 27"><g fill="none" stroke="#8a8a8a" stroke-width="0.6">
<rect x="1" y="1.5" width="5" height="5"/><path d="M2.5 3h2 M3.5 3v3"/>
<path d="M9.5 1.5l6 5.5"/><path d="M18 1.5l6 5.5 M24 7l-1.5-0.2l0.8-1"/>
<rect x="27" y="2" width="7" height="4.5"/><ellipse cx="39.5" cy="4.2" rx="3.5" ry="2.3"/><rect x="45" y="2" width="6" height="4.5" rx="1"/>
<path d="M1 16h5.5l-2.8-5.5z"/><path d="M9.5 10.5h3v5.5h3"/><path d="M18 10.5h3v5.5h3 M23 15l1 1l-1 1"/>
<path d="M27 11.5h4v-1.5l3 3l-3 3v-1.5h-4z"/><path d="M37.5 10.5h3v3h1.5l-3 3l-3-3h1.5z"/><path d="M45 16.5v-5l2-1.5h4v6.5z"/>
<path d="M1.5 24c0-4 5-4 4.5-1.5c-0.5 2-3 0-1.5-2"/><path d="M9.5 25c1-4 4-4.5 6-4"/><path d="M18 25c2-5 3-4 3.5-1c0.5 2 2 1 2.5-1"/>
<path d="M29.5 20c-1 0-1 1-1 2.5s-0.7 1.5-1 1.5c0.3 0 1 0 1 1.5s0 2.5 1 2.5"/><path d="M38 20c1 0 1 1 1 2.5s0.7 1.5 1 1.5c-0.3 0-1 0-1 1.5s0 2.5-1 2.5"/>
<path d="M48 19.5l1 2.5h2.5l-2 1.6l0.8 2.6l-2.3-1.5l-2.3 1.5l0.8-2.6l-2-1.6h2.5z"/></g></svg>
<svg style="left:539.5px;top:32px;" width="15" height="13" viewBox="0 0 15 13"><rect x="1" y="0.8" width="6" height="6" fill="#fff" stroke="#555" stroke-width="0.8"/><rect x="3.5" y="3.5" width="7" height="7" fill="#f2c46f" stroke="#f2c46f" stroke-width="0.8"/><rect x="8" y="7.2" width="6" height="5.5" fill="#fff" stroke="#555" stroke-width="0.8"/></svg>
<div class="t" style="left:531.00px;top:47.22px;font-size:6.3px;line-height:7.56px;color:#3b3b3b;font-weight:normal;transform:scaleX(0.864);transform-origin:0 50%;">Упорядочить</div>
<svg style="left:545.8px;top:56.8px;" width="3.4" height="2.4" viewBox="0 0 3.4 2.4"><path d="M0.3 0.4L1.7 1.8L3.1 0.4" fill="none" stroke="#3b3b3b" stroke-width="0.7"/></svg>
<svg style="left:572px;top:32px;" width="15" height="13" viewBox="0 0 15 13"><rect x="0.8" y="0.8" width="13" height="11.5" fill="none" stroke="#bdbdbd" stroke-width="0.9"/><path d="M6 11l6-6.5l1 1l-6 6.5z" fill="none" stroke="#bdbdbd" stroke-width="0.7"/></svg>
<div class="t" style="left:565.50px;top:47.22px;font-size:6.3px;line-height:7.56px;color:#ababab;font-weight:normal;transform:scaleX(0.836);transform-origin:0 50%;">Экспресс-</div>
<div class="t" style="left:569.00px;top:54.22px;font-size:6.3px;line-height:7.56px;color:#ababab;font-weight:normal;transform:scaleX(0.896);transform-origin:0 50%;">стили</div>
<svg style="left:585.5px;top:56.8px;" width="3.4" height="2.4" viewBox="0 0 3.4 2.4"><path d="M0.3 0.4L1.7 1.8L3.1 0.4" fill="none" stroke="#ababab" stroke-width="0.7"/></svg>
<svg style="left:593.5px;top:32px;" width="8" height="7" viewBox="0 0 8 7"><path d="M1 4l3-3l3 3l-3 2.5z" fill="none" stroke="#a8a8a8" stroke-width="0.7"/><path d="M0.5 6.5h7" stroke="#a8a8a8" stroke-width="0.9"/></svg>
<div class="t" style="left:602.00px;top:31.22px;font-size:6.3px;line-height:7.56px;color:#ababab;font-weight:normal;transform:scaleX(0.811);transform-origin:0 50%;">Заливка фигуры</div>
<svg style="left:642.5px;top:33.8px;" width="3.4" height="2.4" viewBox="0 0 3.4 2.4"><path d="M0.3 0.4L1.7 1.8L3.1 0.4" fill="none" stroke="#ababab" stroke-width="0.7"/></svg>
<svg style="left:593.5px;top:42.5px;" width="8" height="7" viewBox="0 0 8 7"><path d="M6.5 0.8l-4.5 4.5 M0.5 6.5h7" fill="none" stroke="#a8a8a8" stroke-width="0.8"/><rect x="0.5" y="0.5" width="5" height="5" fill="none" stroke="#a8a8a8" stroke-width="0.6"/></svg>
<div class="t" style="left:602.00px;top:42.22px;font-size:6.3px;line-height:7.56px;color:#ababab;font-weight:normal;transform:scaleX(0.840);transform-origin:0 50%;">Контур фигуры</div>
<svg style="left:641px;top:44.8px;" width="3.4" height="2.4" viewBox="0 0 3.4 2.4"><path d="M0.3 0.4L1.7 1.8L3.1 0.4" fill="none" stroke="#ababab" stroke-width="0.7"/></svg>
<svg style="left:593.5px;top:52.5px;" width="8" height="7" viewBox="0 0 8 7"><circle cx="3.5" cy="3.5" r="3" fill="none" stroke="#a8a8a8" stroke-width="0.7"/><path d="M3.5 1.5v4" stroke="#a8a8a8" stroke-width="0.6"/></svg>
<div class="t" style="left:602.00px;top:52.22px;font-size:6.3px;line-height:7.56px;color:#ababab;font-weight:normal;transform:scaleX(0.762);transform-origin:0 50%;">Эффекты фигуры</div>
<svg style="left:643.5px;top:54.8px;" width="3.4" height="2.4" viewBox="0 0 3.4 2.4"><path d="M0.3 0.4L1.7 1.8L3.1 0.4" fill="none" stroke="#ababab" stroke-width="0.7"/></svg>
<div class="t" style="left:543.50px;top:64.72px;font-size:6.3px;line-height:7.56px;color:#555;font-weight:normal;transform:scaleX(0.794);transform-origin:0 50%;">Рисование</div>
<svg style="left:651.5px;top:66.5px;" width="4" height="4" viewBox="0 0 4 4"><path d="M0.3 0.3h3.4v3.4h-3.4z M1.2 1.2l2 2 M3.2 1.8v1.4h-1.4" fill="none" stroke="#8a8a8a" stroke-width="0.5"/></svg>
<div class="r" style="left:657.7px;top:31px;width:0.8px;height:39px;background:#d4d4d4"></div>
<svg style="left:662px;top:31.5px;" width="7" height="8" viewBox="0 0 7 8"><circle cx="4" cy="3" r="2.3" fill="none" stroke="#555" stroke-width="0.8"/><path d="M2.4 4.6l-2 2.4" stroke="#555" stroke-width="0.9"/></svg>
<div class="t" style="left:670.80px;top:31.42px;font-size:6.3px;line-height:7.56px;color:#3b3b3b;font-weight:normal;transform:scaleX(0.873);transform-origin:0 50%;">Найти</div>
<svg style="left:662px;top:42px;" width="8" height="8" viewBox="0 0 8 8"><text x="0" y="4" font-size="4.5" fill="#7a5cc8" font-family="Liberation Sans">b</text><path d="M4 6.5a2 2 0 1 1 -2.5 -2" fill="none" stroke="#2f87d0" stroke-width="0.7"/><text x="3.5" y="8" font-size="4" fill="#3d8c4d" font-family="Liberation Sans">c</text></svg>
<div class="t" style="left:671.00px;top:42.22px;font-size:6.3px;line-height:7.56px;color:#3b3b3b;font-weight:normal;transform:scaleX(0.848);transform-origin:0 50%;">Заменить</div>
<svg style="left:699.5px;top:44.8px;" width="3.4" height="2.4" viewBox="0 0 3.4 2.4"><path d="M0.3 0.4L1.7 1.8L3.1 0.4" fill="none" stroke="#3b3b3b" stroke-width="0.7"/></svg>
<svg style="left:662.5px;top:52px;" width="7" height="8" viewBox="0 0 7 8"><path d="M1 0.8v6l1.7-1.5l1.2 2.2l1-0.5l-1.1-2.1h2.3z" fill="none" stroke="#555" stroke-width="0.7"/></svg>
<div class="t" style="left:671.00px;top:52.22px;font-size:6.3px;line-height:7.56px;color:#3b3b3b;font-weight:normal;transform:scaleX(0.774);transform-origin:0 50%;">Выделить</div>
<svg style="left:695px;top:54.8px;" width="3.4" height="2.4" viewBox="0 0 3.4 2.4"><path d="M0.3 0.4L1.7 1.8L3.1 0.4" fill="none" stroke="#3b3b3b" stroke-width="0.7"/></svg>
<div class="t" style="left:663.00px;top:64.72px;font-size:6.3px;line-height:7.56px;color:#555;font-weight:normal;transform:scaleX(0.825);transform-origin:0 50%;">Редактирование</div>
<div class="r" style="left:708.6px;top:31px;width:0.8px;height:39px;background:#d4d4d4"></div>
<svg style="left:734.5px;top:33px;" width="13" height="13" viewBox="0 0 13 13"><path d="M1 0.8h5l3 3v5.5h-8z" fill="#fff" stroke="#2e77c6" stroke-width="0.9"/><rect x="4.5" y="6" width="7" height="6" fill="#fff" stroke="#2e77c6" stroke-width="0.9"/><path d="M8 11v-3.5 M6.7 8.5l1.3-1.3l1.3 1.3" fill="none" stroke="#2e77c6" stroke-width="0.7"/></svg>
<div class="t" style="left:713.60px;top:47.22px;font-size:6.3px;line-height:7.56px;color:#3b3b3b;font-weight:normal;transform:scaleX(0.831);transform-origin:0 50%;">Создать и поделиться</div>
<div class="t" style="left:732.60px;top:54.22px;font-size:6.3px;line-height:7.56px;color:#3b3b3b;font-weight:normal;transform:scaleX(0.642);transform-origin:0 50%;">Adobe PDF</div>
<div class="t" style="left:723.00px;top:64.72px;font-size:6.3px;line-height:7.56px;color:#555;font-weight:normal;transform:scaleX(0.847);transform-origin:0 50%;">Adobe Acrobat</div>
<div class="r" style="left:771.8px;top:31px;width:0.8px;height:39px;background:#d4d4d4"></div>
<svg style="left:784px;top:30.5px;" width="10" height="15" viewBox="0 0 10 15"><rect x="1.8" y="0.5" width="5.5" height="9.5" rx="2.7" fill="#5fa2dd" stroke="#2e77c6" stroke-width="0.6"/><path d="M0.5 6.5a4 4 0 0 0 8 0 M4.5 10.5v3" fill="none" stroke="#555" stroke-width="0.7"/></svg>
<div class="t" style="left:776.00px;top:47.22px;font-size:6.3px;line-height:7.56px;color:#3b3b3b;font-weight:normal;transform:scaleX(0.887);transform-origin:0 50%;">Диктофон</div>
<svg style="left:787.5px;top:56.8px;" width="3.4" height="2.4" viewBox="0 0 3.4 2.4"><path d="M0.3 0.4L1.7 1.8L3.1 0.4" fill="none" stroke="#555" stroke-width="0.7"/></svg>
<div class="t" style="left:782.00px;top:64.72px;font-size:6.3px;line-height:7.56px;color:#555;font-weight:normal;transform:scaleX(0.836);transform-origin:0 50%;">Голос</div>
<div class="r" style="left:806px;top:31px;width:0.8px;height:39px;background:#d4d4d4"></div>
<svg style="left:819.5px;top:31px;" width="16" height="14" viewBox="0 0 16 14"><rect x="1" y="4" width="12" height="9" fill="none" stroke="#c0c0c0" stroke-width="1"/><path d="M3 4l2-3h7l-1 3 M7 7h6" fill="none" stroke="#c0c0c0" stroke-width="0.8"/></svg>
<div class="t" style="left:816.00px;top:47.22px;font-size:6.3px;line-height:7.56px;color:#ababab;font-weight:normal;transform:scaleX(0.851);transform-origin:0 50%;">Идеи для</div>
<div class="t" style="left:811.00px;top:54.22px;font-size:6.3px;line-height:7.56px;color:#ababab;font-weight:normal;transform:scaleX(0.904);transform-origin:0 50%;">оформления</div>
<div class="t" style="left:811.70px;top:64.72px;font-size:6.3px;line-height:7.56px;color:#555;font-weight:normal;transform:scaleX(0.844);transform-origin:0 50%;">Конструктор</div>
<div class="r" style="left:848px;top:31px;width:0.8px;height:39px;background:#d4d4d4"></div>
<svg style="left:856.5px;top:67.5px;" width="6" height="4" viewBox="0 0 6 4"><path d="M0.5 3.2l2.5-2.5l2.5 2.5" fill="none" stroke="#555" stroke-width="0.8"/></svg>
<div class="r" style="left:858.6px;top:72px;width:7.4px;height:387px;background:#dedede"></div>
<div class="r" style="left:859.2px;top:73.5px;width:5.8px;height:6.5px;background:#fff"></div>
<svg style="left:860.3px;top:75.5px;" width="4" height="2.5" viewBox="0 0 4 2.5"><path d="M0 2.2L2 0.2L4 2.2z" fill="#666"/></svg>
<div class="r" style="left:859.2px;top:451.9px;width:5.8px;height:5.5px;background:#fff"></div>
<svg style="left:860.3px;top:453.8px;" width="4" height="2.5" viewBox="0 0 4 2.5"><path d="M0 0.2L2 2.2L4 0.2z" fill="#666"/></svg>
<div class="r" style="left:858.6px;top:226.9px;width:6.5px;height:32.4px;background:#fff;border:0.6px solid #c9c9c9"></div>
<div class="r" style="left:0px;top:459.3px;width:866px;height:9.7px;background:#f3f3f3"></div>
<div class="r" style="left:7px;top:457.5px;width:2.5px;height:1.2px;background:#d24726"></div>
<div class="t" style="left:3.90px;top:460.62px;font-size:6.3px;line-height:7.56px;color:#555;font-weight:normal;transform:scaleX(0.769);transform-origin:0 50%;">Слайд 60 из 123</div>
<svg style="left:49.2px;top:461px;" width="7" height="7" viewBox="0 0 7 7"><rect x="0.4" y="0.4" width="6" height="6" fill="none" stroke="#777" stroke-width="0.7"/><path d="M0.4 3.4h3v3" fill="none" stroke="#777" stroke-width="0.6"/><path d="M4 4l2 2" stroke="#777" stroke-width="0.7"/></svg>
<div class="t" style="left:63.70px;top:460.62px;font-size:6.3px;line-height:7.56px;color:#555;font-weight:normal;transform:scaleX(0.827);transform-origin:0 50%;">русский</div>
<div class="r" style="left:718.6px;top:459.5px;width:17.8px;height:9.5px;background:#dcdcdc"></div>
<svg style="left:705.8px;top:461px;" width="7.5" height="6" viewBox="0 0 7.5 6"><rect x="0.4" y="0.4" width="6.7" height="5.2" fill="none" stroke="#666" stroke-width="0.7"/><rect x="2" y="2" width="3.5" height="1.5" fill="#666"/></svg>
<svg style="left:724px;top:461px;" width="7" height="6.5" viewBox="0 0 7 6.5"><rect x="0.4" y="0.4" width="2.6" height="2.6" fill="none" stroke="#555" stroke-width="0.7"/><rect x="4" y="0.4" width="2.6" height="2.6" fill="none" stroke="#555" stroke-width="0.7"/><rect x="0.4" y="3.6" width="2.6" height="2.6" fill="none" stroke="#555" stroke-width="0.7"/><rect x="4" y="3.6" width="2.6" height="2.6" fill="none" stroke="#555" stroke-width="0.7"/></svg>
<svg style="left:742px;top:461px;" width="7" height="6.5" viewBox="0 0 7 6.5"><path d="M0.4 0.8h2.8l0.3 0.5l0.3-0.5h2.8v5h-2.8l-0.3 0.5l-0.3-0.5h-2.8z M3.5 1.3v4.5" fill="none" stroke="#777" stroke-width="0.7"/></svg>
<svg style="left:760.4px;top:460.8px;" width="6" height="7" viewBox="0 0 6 7"><path d="M0.3 0.6h5.4 M0.9 0.6v3h4.2v-3 M3 3.6v2.4 M1.8 6.4l1.2-0.5l1.2 0.5" fill="none" stroke="#777" stroke-width="0.7"/></svg>
<div class="r" style="left:775.3px;top:464.2px;width:3.3px;height:0.7px;background:#666"></div>
<div class="r" style="left:781.5px;top:464.2px;width:44.5px;height:0.6px;background:#a8a8a8"></div>
<div class="r" style="left:803.2px;top:463px;width:0.6px;height:3px;background:#a8a8a8"></div>
<div class="r" style="left:812px;top:461.5px;width:2.2px;height:5.5px;background:#555"></div>
<div class="r" style="left:828.8px;top:464.2px;width:3.5px;height:0.7px;background:#666"></div>
<div class="r" style="left:830.2px;top:462.5px;width:0.7px;height:3.5px;background:#666"></div>
<div class="t" style="left:837.60px;top:460.62px;font-size:6.3px;line-height:7.56px;color:#555;font-weight:normal;transform:scaleX(0.795);transform-origin:0 50%;">142 %</div>
<svg style="left:857px;top:460.5px;" width="8.5" height="8" viewBox="0 0 8.5 8"><path d="M4.2 0.3v7.4 M0.3 4h7.8 M3 1.5l1.2-1.2l1.2 1.2 M3 6.5l1.2 1.2l1.2-1.2 M1.5 2.8l-1.2 1.2l1.2 1.2 M7 2.8l1.2 1.2l-1.2 1.2" fill="none" stroke="#555" stroke-width="0.6"/><rect x="2.6" y="2.5" width="3.2" height="3" fill="#f3f3f3" stroke="#555" stroke-width="0.6"/></svg>
<div class="r" style="left:0px;top:469px;width:866px;height:18px;background:#d9e8f0"></div>
<div class="r" style="left:0px;top:469px;width:21.5px;height:18px;background:#cde3ee"></div>
<svg style="left:7px;top:474.4px;" width="8" height="7" viewBox="0 0 8 7"><path d="M0 1l3.3-0.5v2.7h-3.3z M3.9 0.4l4-0.5v3.3h-4z M0 3.8h3.3v2.7l-3.3-0.5z M3.9 3.8h4v3.3l-4-0.6z" fill="#111"/></svg>
<div class="r" style="left:21.5px;top:470.2px;width:154.5px;height:16.8px;background:#fff;border-left:0.6px solid #c8d4dc"></div>
<svg style="left:27.5px;top:474px;" width="7" height="8" viewBox="0 0 7 8"><circle cx="4.5" cy="2.8" r="2.2" fill="none" stroke="#333" stroke-width="0.7"/><path d="M3 4.4l-2.5 2.8" stroke="#333" stroke-width="0.8"/></svg>
<div class="t" style="left:39.80px;top:474.70px;font-size:6.5px;line-height:7.80px;color:#333;font-weight:normal;transform:scaleX(1.008);transform-origin:0 50%;">Введите здесь текст для поиска</div>
<svg style="left:183px;top:472px;" width="12" height="12" viewBox="0 0 12 12"><circle cx="6" cy="6" r="5.3" fill="#1f8fd4"/><path d="M1.5 7.5a4.5 4.5 0 0 1 9-2c0 1.5-2 2-3.5 1.6c-1 -0.3-1-1.5 0-1.8" fill="none" stroke="#5fd27f" stroke-width="1.3"/><circle cx="6.5" cy="6" r="1.5" fill="#fff"/></svg>
<svg style="left:204.5px;top:472.5px;" width="12" height="11" viewBox="0 0 12 11"><path d="M0.5 1.5h4l1 1.3h6v7.5h-11z" fill="#f3c64a"/><path d="M0.5 4h11" stroke="#e0a82a" stroke-width="0.8"/><rect x="3.5" y="6.5" width="5" height="3.5" fill="#2d7ec8"/></svg>
<svg style="left:226.5px;top:472px;" width="12" height="12" viewBox="0 0 12 12"><circle cx="6" cy="6" r="5.5" fill="#de4a3b"/><path d="M6 6L11.5 6A5.5 5.5 0 0 1 3.2 10.8z" fill="#f4c20d"/><path d="M6 6L3.2 10.8A5.5 5.5 0 0 1 1.2 3.2z" fill="#1ea362"/><circle cx="6" cy="6" r="2.6" fill="#fff"/><circle cx="6" cy="6" r="2" fill="#1a73e8"/></svg>
<svg style="left:249.5px;top:472.5px;" width="11" height="11" viewBox="0 0 11 11"><rect x="0" y="0" width="11" height="11" rx="1.5" fill="#001e36"/><text x="1.8" y="7.8" font-size="5.5" font-weight="bold" fill="#31a8ff" font-family="Liberation Sans">Ps</text></svg>
<div class="r" style="left:266.5px;top:469px;width:19.5px;height:18px;background:#e8f1f6"></div>
<svg style="left:270.5px;top:472px;" width="13" height="12" viewBox="0 0 13 12"><circle cx="7" cy="6" r="5.5" fill="#ed6c47"/><path d="M7 0.5A5.5 5.5 0 0 1 12.5 6H7z" fill="#ff8f6b"/><rect x="0.5" y="2.5" width="6" height="7" rx="0.8" fill="#c43e1c"/><text x="1.8" y="8.2" font-size="5" font-weight="bold" fill="#fff" font-family="Liberation Sans">P</text></svg>
<svg style="left:294px;top:472.5px;" width="11" height="11" viewBox="0 0 11 11"><rect x="0" y="0" width="11" height="11" rx="1.5" fill="#1b1b1b"/><path d="M2.3 8.8c1.8-1 3.7-4.6 3.2-6.3c-0.5 1.8 1.5 4.8 3.3 5.2c-1.9-0.5-4.4 0-6.5 1.1z" fill="none" stroke="#fff" stroke-width="0.7"/></svg>
<svg style="left:316px;top:472px;" width="12" height="12" viewBox="0 0 12 12"><circle cx="5.5" cy="5.5" r="4.2" fill="none" stroke="#222" stroke-width="1"/><path d="M2.5 2.5l7 7 M3 8l2-2 M7 3.5l2 0" stroke="#222" stroke-width="1"/><path d="M8 9l3 2.5" stroke="#2a9fd6" stroke-width="1.2"/></svg>
<div class="r" style="left:181px;top:485.6px;width:16px;height:1.4px;background:#4e9fd8"></div>
<div class="r" style="left:202px;top:485.6px;width:17px;height:1.4px;background:#4e9fd8"></div>
<div class="r" style="left:224px;top:485.6px;width:17px;height:1.4px;background:#4e9fd8"></div>
<div class="r" style="left:246px;top:485.6px;width:17px;height:1.4px;background:#4e9fd8"></div>
<div class="r" style="left:268px;top:485.6px;width:17px;height:1.4px;background:#4e9fd8"></div>
<div class="r" style="left:290px;top:485.6px;width:17px;height:1.4px;background:#4e9fd8"></div>
<div class="r" style="left:312px;top:485.6px;width:17px;height:1.4px;background:#4e9fd8"></div>
<svg style="left:730px;top:476px;" width="6" height="3.5" viewBox="0 0 6 3.5"><path d="M0.5 3l2.5-2.5l2.5 2.5" fill="none" stroke="#333" stroke-width="0.8"/></svg>
<svg style="left:740px;top:475px;" width="8" height="6" viewBox="0 0 8 6"><path d="M1.5 5.5h5.5a1.5 1.5 0 0 0 0-3a2.5 2.5 0 0 0-4.5-0.5a1.8 1.8 0 0 0-1 3.5z" fill="#555" stroke="#333" stroke-width="0.5"/></svg>
<svg style="left:752.4px;top:474px;" width="5.5" height="8" viewBox="0 0 5.5 8"><rect x="0.5" y="1.2" width="4.5" height="5.6" fill="none" stroke="#333" stroke-width="0.7"/><path d="M1.5 0.5h2.5 M1.5 7.5h2.5" stroke="#333" stroke-width="0.6"/><rect x="1.5" y="2.5" width="2.5" height="3" fill="#555"/></svg>
<svg style="left:763px;top:475px;" width="7" height="6" viewBox="0 0 7 6"><path d="M0.5 5.5l6-5 M2 5.5l4.5-3.5 M3.5 5.5l3-2" fill="none" stroke="#444" stroke-width="0.7"/></svg>
<svg style="left:772.3px;top:474.5px;" width="8" height="7" viewBox="0 0 8 7"><path d="M0.5 2.5h1.8l2.2-2v6l-2.2-2h-1.8z" fill="none" stroke="#333" stroke-width="0.7"/><path d="M5.5 2l2 2.5 M7.5 2l-2 2.5" stroke="#333" stroke-width="0.6"/></svg>
<svg style="left:785px;top:474.5px;" width="8" height="7" viewBox="0 0 8 7"><path d="M0.8 6.2l2.5-2.5 M2.5 5l3.5-3.5l1.5 1.5l-3.5 3.5z M5 0.8l2.2 2.2" fill="none" stroke="#333" stroke-width="0.8"/></svg>
<div class="t" style="left:799.30px;top:474.32px;font-size:6.3px;line-height:7.56px;color:#222;font-weight:normal;transform:scaleX(0.769);transform-origin:0 50%;">РУС</div>
<div class="t" style="left:820.80px;top:469.82px;font-size:6.3px;line-height:7.56px;color:#222;font-weight:normal;transform:scaleX(0.793);transform-origin:0 50%;">19:14</div>
<div class="t" style="left:814.80px;top:478.22px;font-size:6.3px;line-height:7.56px;color:#222;font-weight:normal;transform:scaleX(0.780);transform-origin:0 50%;">29.01.2021</div>
<svg style="left:846.8px;top:474.5px;" width="8.5" height="7.5" viewBox="0 0 8.5 7.5"><path d="M0.5 0.5h7.5v5h-4.5l-1.5 1.5v-1.5h-1.5z" fill="none" stroke="#333" stroke-width="0.7"/></svg>
</body></html>
